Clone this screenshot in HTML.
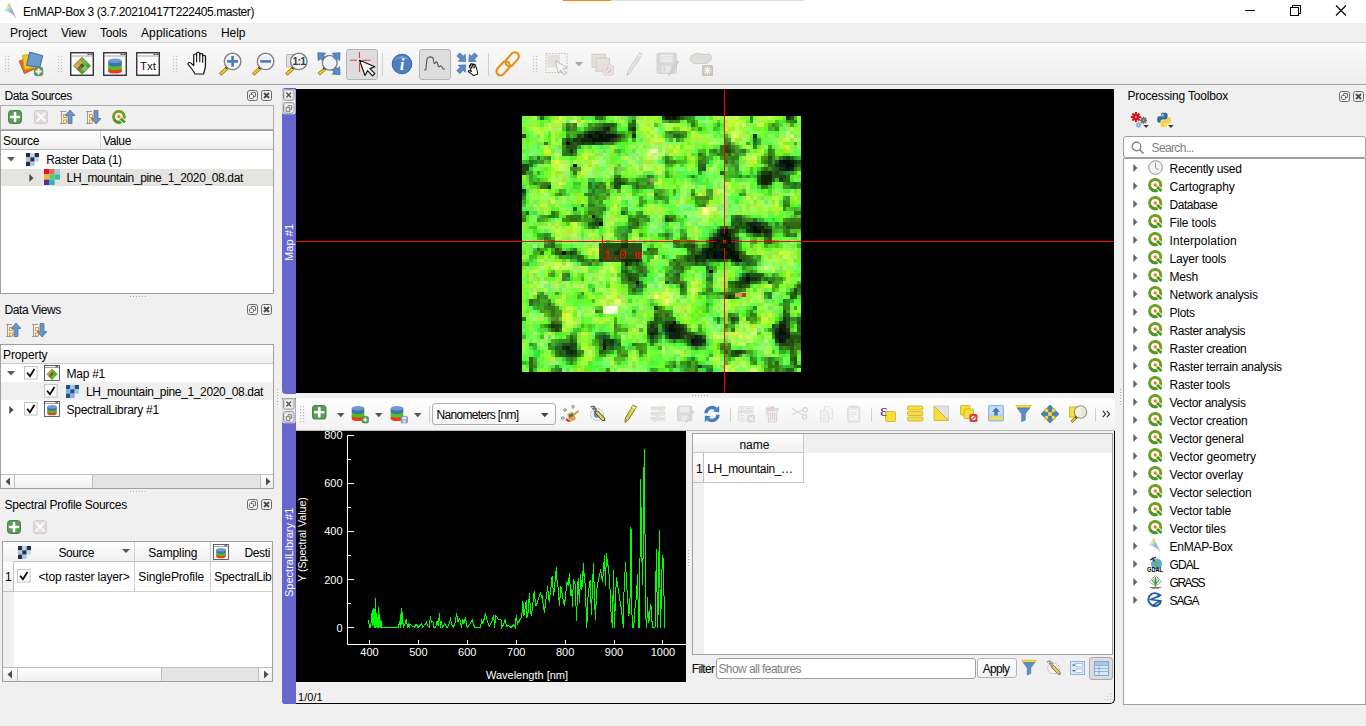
<!DOCTYPE html>
<html><head><meta charset="utf-8"><title>EnMAP-Box 3</title>
<style>
html,body{margin:0;padding:0}
body{width:1366px;height:726px;overflow:hidden;background:#f0f0f0;position:relative;font-family:"Liberation Sans", sans-serif;font-size:12px;color:#000}
div,svg,span.t{position:absolute;box-sizing:border-box}
span.t{white-space:pre}
</style></head><body>
<div style="left:0px;top:0px;width:1366px;height:23px;background:#fff"></div>
<div style="left:563px;top:0px;width:48px;height:1px;background:#f9861a"></div>
<div style="left:611px;top:0px;width:193px;height:1px;background:#dcdcdc"></div>
<span class="t" style="left:23px;top:3.5px;line-height:16px;font-size:12px;color:#000;letter-spacing:-0.412px;">EnMAP-Box 3 (3.7.20210417T222405.master)</span>
<svg style="left:1240px;top:0px;" width="120" height="23" viewBox="0 0 120 23"><g stroke="#000" stroke-width="1" fill="none" shape-rendering="crispEdges"><path d="M5 10.5H15"/><path d="M50.5 7.5h8v8h-8z"/><path d="M52.5 7.5v-2h8v8h-2"/></g><path d="M96 5.5l10 10M106 5.5l-10 10" stroke="#000" stroke-width="1.1" fill="none"/></svg>
<div style="left:0px;top:23px;width:1366px;height:20px;background:#f0f0f0"></div>
<span class="t" style="left:10px;top:24.5px;line-height:16px;font-size:12px;color:#000;letter-spacing:-0.051px;">Project</span>
<span class="t" style="left:61px;top:24.5px;line-height:16px;font-size:12px;color:#000;letter-spacing:-0.199px;">View</span>
<span class="t" style="left:100px;top:24.5px;line-height:16px;font-size:12px;color:#000;letter-spacing:-0.203px;">Tools</span>
<span class="t" style="left:141px;top:24.5px;line-height:16px;font-size:12px;color:#000;letter-spacing:0.107px;">Applications</span>
<span class="t" style="left:221px;top:24.5px;line-height:16px;font-size:12px;color:#000;letter-spacing:-0.047px;">Help</span>
<div style="left:0px;top:42px;width:1366px;height:43px;background:linear-gradient(#fafafa,#eeeeee);border-top:1px solid #d6d6d6;border-bottom:1px solid #a0a0a0"></div>
<svg style="left:5px;top:56px;" width="5" height="20" viewBox="0 0 5 20"><rect x="0" y="0.0" width="1.200" height="1.200" fill="#c4c4c4"/><rect x="3" y="0.0" width="1.200" height="1.200" fill="#c4c4c4"/><rect x="0" y="3.0" width="1.200" height="1.200" fill="#c4c4c4"/><rect x="3" y="3.0" width="1.200" height="1.200" fill="#c4c4c4"/><rect x="0" y="6.0" width="1.200" height="1.200" fill="#c4c4c4"/><rect x="3" y="6.0" width="1.200" height="1.200" fill="#c4c4c4"/><rect x="0" y="9.0" width="1.200" height="1.200" fill="#c4c4c4"/><rect x="3" y="9.0" width="1.200" height="1.200" fill="#c4c4c4"/><rect x="0" y="12.0" width="1.200" height="1.200" fill="#c4c4c4"/><rect x="3" y="12.0" width="1.200" height="1.200" fill="#c4c4c4"/><rect x="0" y="15.0" width="1.200" height="1.200" fill="#c4c4c4"/><rect x="3" y="15.0" width="1.200" height="1.200" fill="#c4c4c4"/></svg>
<svg style="left:58px;top:56px;" width="5" height="20" viewBox="0 0 5 20"><rect x="0" y="0.0" width="1.200" height="1.200" fill="#c4c4c4"/><rect x="3" y="0.0" width="1.200" height="1.200" fill="#c4c4c4"/><rect x="0" y="3.0" width="1.200" height="1.200" fill="#c4c4c4"/><rect x="3" y="3.0" width="1.200" height="1.200" fill="#c4c4c4"/><rect x="0" y="6.0" width="1.200" height="1.200" fill="#c4c4c4"/><rect x="3" y="6.0" width="1.200" height="1.200" fill="#c4c4c4"/><rect x="0" y="9.0" width="1.200" height="1.200" fill="#c4c4c4"/><rect x="3" y="9.0" width="1.200" height="1.200" fill="#c4c4c4"/><rect x="0" y="12.0" width="1.200" height="1.200" fill="#c4c4c4"/><rect x="3" y="12.0" width="1.200" height="1.200" fill="#c4c4c4"/><rect x="0" y="15.0" width="1.200" height="1.200" fill="#c4c4c4"/><rect x="3" y="15.0" width="1.200" height="1.200" fill="#c4c4c4"/></svg>
<svg style="left:173px;top:56px;" width="5" height="20" viewBox="0 0 5 20"><rect x="0" y="0.0" width="1.200" height="1.200" fill="#c4c4c4"/><rect x="3" y="0.0" width="1.200" height="1.200" fill="#c4c4c4"/><rect x="0" y="3.0" width="1.200" height="1.200" fill="#c4c4c4"/><rect x="3" y="3.0" width="1.200" height="1.200" fill="#c4c4c4"/><rect x="0" y="6.0" width="1.200" height="1.200" fill="#c4c4c4"/><rect x="3" y="6.0" width="1.200" height="1.200" fill="#c4c4c4"/><rect x="0" y="9.0" width="1.200" height="1.200" fill="#c4c4c4"/><rect x="3" y="9.0" width="1.200" height="1.200" fill="#c4c4c4"/><rect x="0" y="12.0" width="1.200" height="1.200" fill="#c4c4c4"/><rect x="3" y="12.0" width="1.200" height="1.200" fill="#c4c4c4"/><rect x="0" y="15.0" width="1.200" height="1.200" fill="#c4c4c4"/><rect x="3" y="15.0" width="1.200" height="1.200" fill="#c4c4c4"/></svg>
<svg style="left:533px;top:56px;" width="5" height="20" viewBox="0 0 5 20"><rect x="0" y="0.0" width="1.200" height="1.200" fill="#c4c4c4"/><rect x="3" y="0.0" width="1.200" height="1.200" fill="#c4c4c4"/><rect x="0" y="3.0" width="1.200" height="1.200" fill="#c4c4c4"/><rect x="3" y="3.0" width="1.200" height="1.200" fill="#c4c4c4"/><rect x="0" y="6.0" width="1.200" height="1.200" fill="#c4c4c4"/><rect x="3" y="6.0" width="1.200" height="1.200" fill="#c4c4c4"/><rect x="0" y="9.0" width="1.200" height="1.200" fill="#c4c4c4"/><rect x="3" y="9.0" width="1.200" height="1.200" fill="#c4c4c4"/><rect x="0" y="12.0" width="1.200" height="1.200" fill="#c4c4c4"/><rect x="3" y="12.0" width="1.200" height="1.200" fill="#c4c4c4"/><rect x="0" y="15.0" width="1.200" height="1.200" fill="#c4c4c4"/><rect x="3" y="15.0" width="1.200" height="1.200" fill="#c4c4c4"/></svg>
<svg style="left:18px;top:50px;" width="27" height="27" viewBox="0 0 27 27"><g stroke-width="0.800" stroke-linejoin="round"><path d="M1.100 11L6.400 23.700L16.400 18.900L10 8z" fill="#dc6c2e" stroke="#b4521e"/><path d="M4.400 5.200L10.200 4.800L15.700 17.900L6.400 19.600z" fill="#f2ca1e" stroke="#c79f10"/><path d="M11.600 2L24.800 5.700L21.900 17.200L8.500 15.500z" fill="#6c9aca" stroke="#2f5a8a"/></g><rect x="16.300" y="17.200" width="8.500" height="8.500" rx="2.200" fill="#5b9a58" stroke="#4a8349" stroke-width="0.700"/><path d="M20.550 18.400v6.100M17.500 21.450h6.100" stroke="#fff" stroke-width="2"/></svg>
<svg style="left:70px;top:52px;" width="24" height="24" viewBox="0 0 24 24"><rect x="0.750" y="0.750" width="22.500" height="22.500" fill="#fff" stroke="#222" stroke-width="1.300"/><path d="M1.500 4h21" stroke="#9a9a9a" stroke-width="0.900"/><path d="M17.500 2.300h2M20.300 2.300h2" stroke="#444" stroke-width="1.200"/><g transform="translate(12 13.800) rotate(45)"><rect x="-6.0" y="-6.0" width="4" height="4" fill="#8fa832"/><rect x="-2.0" y="-6.0" width="4" height="4" fill="#57c032"/><rect x="2.0" y="-6.0" width="4" height="4" fill="#4aa52c"/><rect x="-6.0" y="-2.0" width="4" height="4" fill="#e99a2c"/><rect x="-2.0" y="-2.0" width="4" height="4" fill="#4e5a32"/><rect x="2.0" y="-2.0" width="4" height="4" fill="#7ccc5c"/><rect x="-6.0" y="2.0" width="4" height="4" fill="#d9a86c"/><rect x="-2.0" y="2.0" width="4" height="4" fill="#8a6a28"/><rect x="2.0" y="2.0" width="4" height="4" fill="#5aa030"/><rect x="-6" y="-6" width="12" height="12" fill="none" stroke="#3f8f25" stroke-width="0.800"/></g></svg>
<svg style="left:103px;top:52px;" width="24" height="24" viewBox="0 0 24 24"><rect x="0.750" y="0.750" width="22.500" height="22.500" fill="#fff" stroke="#222" stroke-width="1.300"/><path d="M1.500 4h21" stroke="#9a9a9a" stroke-width="0.900"/><path d="M17.500 2.300h2M20.300 2.300h2" stroke="#444" stroke-width="1.200"/><path d="M5.2 15.80v3.50a6.8 2.3 0 0 0 13.6 0v-3.50z" fill="#f03a1c"/><path d="M5.2 12.30v3.50a6.8 2.3 0 0 0 13.6 0v-3.50z" fill="#4fc31c"/><path d="M5.2 8.80v3.50a6.8 2.3 0 0 0 13.6 0v-3.50z" fill="#3f72ae"/><ellipse cx="12" cy="8.80" rx="6.8" ry="2.3" fill="#6d9bd0"/></svg>
<svg style="left:136px;top:52px;" width="24" height="24" viewBox="0 0 24 24"><rect x="0.750" y="0.750" width="22.500" height="22.500" fill="#fff" stroke="#222" stroke-width="1.300"/><path d="M1.500 4h21" stroke="#9a9a9a" stroke-width="0.900"/><path d="M17.500 2.300h2M20.300 2.300h2" stroke="#444" stroke-width="1.200"/><text x="12" y="17.600" text-anchor="middle" font-family="Liberation Sans, sans-serif" font-size="11.500" fill="#111">Txt</text></svg>
<svg style="left:187px;top:51px;" width="21" height="24" viewBox="0 0 21 24"><g transform="scale(1.12 1.02)"><path d="M7.200 22.500C5.800 19.500 3.300 16 1.300 13.500C0.300 12.200 1.800 10.500 3.300 11.700L6 14.300V4.300C6 2.500 8.600 2.500 8.600 4.300V2.600C8.600 0.700 11.400 0.700 11.400 2.600V3.600C11.400 1.900 14 1.900 14 3.600V5.300C14 3.800 16.500 3.800 16.500 5.500V13.500C16.500 17 15.500 19.500 14.800 22.500z" fill="#fff" stroke="#111" stroke-width="1.100" stroke-linejoin="round"/><path d="M8.600 4.300V11M11.400 3.600V11M14 5.300V11.500" stroke="#111" stroke-width="1" fill="none"/></g></svg>
<svg style="left:217px;top:51px;" width="26" height="26" viewBox="0 0 26 26"><path d="M10.5 16.8L3.1 23.4" stroke="#8a6d0c" stroke-width="3.400" stroke-linecap="butt"/><path d="M10.2 17.1L3.5 23.0" stroke="#f4c81e" stroke-width="2.200"/><circle cx="9.7" cy="16.6" r="1.300" fill="#111"/><circle cx="15.6" cy="10.4" r="8.2" fill="#f1f1f1" stroke="#838383" stroke-width="1.500"/><circle cx="15.6" cy="10.4" r="6.799999999999999" fill="none" stroke="#fdfdfd" stroke-width="1"/><path d="M15.600 5v10.800M10.200 10.400h10.800" stroke="#4b7bb9" stroke-width="2.600"/></svg>
<svg style="left:250px;top:51px;" width="26" height="26" viewBox="0 0 26 26"><path d="M10.5 16.8L3.1 23.4" stroke="#8a6d0c" stroke-width="3.400" stroke-linecap="butt"/><path d="M10.2 17.1L3.5 23.0" stroke="#f4c81e" stroke-width="2.200"/><circle cx="9.7" cy="16.6" r="1.300" fill="#111"/><circle cx="15.6" cy="10.4" r="8.2" fill="#f1f1f1" stroke="#838383" stroke-width="1.500"/><circle cx="15.6" cy="10.4" r="6.799999999999999" fill="none" stroke="#fdfdfd" stroke-width="1"/><path d="M10.200 10.400h10.800" stroke="#4b7bb9" stroke-width="2.600"/></svg>
<svg style="left:283px;top:51px;" width="26" height="26" viewBox="0 0 26 26"><rect x="3.600" y="3.600" width="7" height="12.400" fill="#e2e2e2" stroke="#a8a8a8" stroke-width="0.800"/><path d="M10.7 16.8L3.3 23.4" stroke="#8a6d0c" stroke-width="3.400" stroke-linecap="butt"/><path d="M10.4 17.1L3.7 23.0" stroke="#f4c81e" stroke-width="2.200"/><circle cx="9.9" cy="16.6" r="1.300" fill="#111"/><circle cx="15.8" cy="10.4" r="8.2" fill="#f1f1f1" stroke="#838383" stroke-width="1.500"/><circle cx="15.8" cy="10.4" r="6.799999999999999" fill="none" stroke="#fdfdfd" stroke-width="1"/><text x="15.800" y="14.200" text-anchor="middle" font-family="Liberation Sans, sans-serif" font-size="10.500" font-weight="bold" fill="#3c3c3c" letter-spacing="-0.800">1:1</text></svg>
<svg style="left:316px;top:51px;" width="26" height="26" viewBox="0 0 26 26"><path transform="translate(5.8 5.8) rotate(-45) scale(1.25)" d="M0 -4.500L4.300 0.300H1.900V4.500H-1.900V0.300H-4.300z" fill="#5b8cc6" stroke="#3d6da4" stroke-width="0.500"/><path transform="translate(20 5.8) rotate(45) scale(1.25)" d="M0 -4.500L4.300 0.300H1.900V4.500H-1.900V0.300H-4.300z" fill="#5b8cc6" stroke="#3d6da4" stroke-width="0.500"/><path transform="translate(20 19.5) rotate(135) scale(1.25)" d="M0 -4.500L4.300 0.300H1.900V4.500H-1.900V0.300H-4.300z" fill="#5b8cc6" stroke="#3d6da4" stroke-width="0.500"/><path d="M9.3 17.5L2.7 23.3" stroke="#8a6d0c" stroke-width="3.400" stroke-linecap="butt"/><path d="M9.0 17.8L3.0 23.0" stroke="#f4c81e" stroke-width="2.200"/><circle cx="8.5" cy="17.3" r="1.300" fill="#111"/><circle cx="13.8" cy="11.8" r="7.3" fill="#f1f1f1" stroke="#838383" stroke-width="1.500"/><circle cx="13.8" cy="11.8" r="5.9" fill="none" stroke="#fdfdfd" stroke-width="1"/><path transform="translate(4.8 4.8) rotate(-45) scale(0.9)" d="M0 -4.500L4.300 0.300H1.900V4.500H-1.900V0.300H-4.300z" fill="#5b8cc6" stroke="#3d6da4" stroke-width="0.500"/><path transform="translate(21 4.8) rotate(45) scale(0.9)" d="M0 -4.500L4.300 0.300H1.900V4.500H-1.900V0.300H-4.300z" fill="#5b8cc6" stroke="#3d6da4" stroke-width="0.500"/><path transform="translate(21 20.5) rotate(135) scale(0.9)" d="M0 -4.500L4.300 0.300H1.900V4.500H-1.900V0.300H-4.300z" fill="#5b8cc6" stroke="#3d6da4" stroke-width="0.500"/></svg>
<div style="left:346px;top:49px;width:32px;height:31px;background:#dddddd;border:1px solid #b4b4b4;border-radius:3px"></div>
<div style="left:419px;top:49px;width:32px;height:31px;background:#dddddd;border:1px solid #b4b4b4;border-radius:3px"></div>
<svg style="left:348px;top:51px;" width="28" height="27" viewBox="0 0 28 27"><path d="M1.800 9.300H9M14 9.300H22.500M11.500 1V7M11.500 12V21" stroke="#ee3b3b" stroke-width="1.100" fill="none"/><path transform="translate(11.500 9.300) rotate(-20) scale(1.22)" d="M0 0V13.200L3.300 10.200L5.700 15.600L8.100 14.500L5.700 9.300H10z" fill="#fff" stroke="#111" stroke-width="0.950" stroke-linejoin="round"/></svg>
<div style="left:382px;top:53px;width:1px;height:23px;background:#cfcfcf"></div>
<div style="left:488px;top:53px;width:1px;height:23px;background:#cfcfcf"></div>
<svg style="left:391px;top:53px;" width="22" height="22" viewBox="0 0 22 22"><circle cx="11" cy="11" r="9.800" fill="#4b7dbf" stroke="#3567a5" stroke-width="1"/><path d="M3.500 7.500A8.500 8.500 0 0 1 18.500 7.500A12 9 0 0 0 3.500 7.500z" fill="#7ea6d8" opacity="0.700"/><text x="11.200" y="17" text-anchor="middle" font-family="Liberation Serif, serif" font-style="italic" font-weight="bold" font-size="17" fill="#fff">i</text></svg>
<svg style="left:423px;top:53px;" width="24" height="22" viewBox="0 0 24 22"><path d="M1.300 17C2 16.300 2.300 17.500 2.800 16.500C3.300 15.500 3.300 8 4.300 5.500C4.800 4.300 5.500 4.800 6 4C6.500 3.200 7 4.500 7.500 4C8 3.500 8.500 4.500 9 4.300C10 4 10.300 6 10.600 8C10.900 10.500 11.500 11 12.200 10.200C12.900 9.400 13.300 8 14 9.300C14.700 10.600 14.700 12.500 15.700 13.500C16.700 14.300 17 12.500 18 13C19 13.500 19.500 15 20 15.800C20.500 16.500 21 15.500 21.800 16.300" fill="none" stroke="#555" stroke-width="1.150"/></svg>
<svg style="left:456px;top:52px;" width="25" height="24" viewBox="0 0 25 24"><path transform="translate(6 6) rotate(135) scale(1.15)" d="M0 -4.500L4.300 0.300H1.900V4.500H-1.900V0.300H-4.300z" fill="#5b8cc6" stroke="#3d6da4" stroke-width="0.500"/><path transform="translate(16.5 6) rotate(-135) scale(1.15)" d="M0 -4.500L4.300 0.300H1.900V4.500H-1.900V0.300H-4.300z" fill="#5b8cc6" stroke="#3d6da4" stroke-width="0.500"/><path transform="translate(6 16.5) rotate(45) scale(1.15)" d="M0 -4.500L4.300 0.300H1.900V4.500H-1.900V0.300H-4.300z" fill="#5b8cc6" stroke="#3d6da4" stroke-width="0.500"/><g transform="translate(11.500 11) scale(0.560) rotate(-20 9 12)"><path d="M7.200 22.500C5.800 19.500 3.300 16 1.300 13.500C0.300 12.200 1.800 10.500 3.300 11.700L6 14.300V4.300C6 2.500 8.600 2.500 8.600 4.300V2.600C8.600 0.700 11.400 0.700 11.400 2.600V3.600C11.400 1.900 14 1.900 14 3.600V5.300C14 3.800 16.500 3.800 16.500 5.500V13.500C16.500 17 15.500 19.500 14.800 22.500z" fill="#fff" stroke="#111" stroke-width="1.800" stroke-linejoin="round"/><path d="M8.600 4.300V10M11.400 3.600V10M14 5.300V10.500" stroke="#111" stroke-width="1.600" fill="none"/></g></svg>
<svg style="left:495px;top:51px;" width="26" height="26" viewBox="0 0 26 26"><g fill="none" stroke="#e6920e" stroke-width="2.100"><rect x="-8" y="-4.100" width="16" height="8.200" rx="4.100" transform="translate(8.200 17.400) rotate(-48)"/><rect x="-8" y="-4.100" width="16" height="8.200" rx="4.100" transform="translate(17.200 8.300) rotate(-48)"/></g></svg>
<svg style="left:545px;top:52px;" width="24" height="24" viewBox="0 0 24 24"><rect x="1" y="1.500" width="21" height="19" fill="#f3f3f1" stroke="#b9b9b4" stroke-width="1" stroke-dasharray="1.500 1.500"/><rect x="2.500" y="3" width="12.500" height="12.500" fill="#e4e2da"/><path transform="translate(10.500 8.800) rotate(-12)" d="M0 0V13.200L3.300 10.200L5.700 15.600L8.100 14.500L5.700 9.300H10z" fill="#f6f6f6" stroke="#c4c4c4" stroke-width="1" stroke-linejoin="round"/></svg>
<svg style="left:575px;top:62px;" width="8" height="5" viewBox="0 0 8 5"><path d="M0 0h8l-4 4.500z" fill="#a6a6a6"/></svg>
<svg style="left:591px;top:53px;" width="24" height="24" viewBox="0 0 24 24"><g fill="#e4e2da" stroke="#c9c7be" stroke-width="0.800"><rect x="1" y="1.200" width="13.500" height="13"/><rect x="5" y="5" width="13.500" height="13.300"/></g><rect x="12" y="11.800" width="10.500" height="10.500" rx="2.500" fill="#ebe2e2" stroke="#dccfcf" stroke-width="0.700"/><circle cx="17.300" cy="17" r="3" fill="#d9c6c6"/><path d="M15.200 19L19.300 15" stroke="#f4eeee" stroke-width="1.200"/></svg>
<svg style="left:625px;top:52px;" width="20" height="25" viewBox="0 0 20 25"><path d="M14.500 0.800L17.300 2.300L5 21L2 23.500L2.600 19.500z" fill="#e5e5e0" stroke="#cbcbc6" stroke-width="0.900" stroke-linejoin="round"/><path d="M2 23.500L2.300 21.300L3.800 22.200z" fill="#b8b8b4"/><path d="M13.500 2.300L16.300 3.800" stroke="#f4f4f0" stroke-width="1.400"/></svg>
<svg style="left:656px;top:52px;" width="24" height="24" viewBox="0 0 24 24"><rect x="1" y="1" width="19.500" height="20.500" rx="2" fill="#d9d9d9" stroke="#cdcdcd" stroke-width="0.800"/><rect x="4.500" y="2.500" width="12" height="7.500" fill="#eeeeee"/><path d="M5.500 4.500h10M5.500 6.300h10M5.500 8.100h10" stroke="#dcdcdc" stroke-width="0.700"/><rect x="6" y="14" width="9" height="6.500" fill="#e9e9e9"/><rect x="7.500" y="15" width="2.200" height="4.500" fill="#d4d4d4"/><g transform="translate(11.500 8.500) scale(0.640)"><path d="M14.500 0.800L17.300 2.300L5 21L2 23.500L2.600 19.500z" fill="#dcd8d2" stroke="#c4c0ba" stroke-width="1.200"/></g></svg>
<svg style="left:689px;top:52px;" width="26" height="25" viewBox="0 0 26 25"><path d="M3 3.500C6.500 0.500 10 1.200 13.500 2.300C17 3.300 19 1 21.500 2.800C23.500 5 22 8.500 19.500 10.500C16.500 12 13 11.200 10.500 11.500C6.500 12.500 3 11.500 1.500 8.500C0.600 6.500 1.500 4.500 3 3.500z" fill="#dcdeda" stroke="#c5c7c3" stroke-width="0.900"/><rect x="13" y="13" width="11" height="11" rx="1.500" fill="#c9c5b8"/><path d="M18.500 14.500v8M14.500 18.500h8M15.700 15.700l5.600 5.600M21.300 15.700l-5.600 5.600" stroke="#fbfaf6" stroke-width="1.200"/><circle cx="18.500" cy="18.500" r="1.500" fill="#fbfaf6"/></svg>
<span class="t" style="left:4.5px;top:88.3px;line-height:16px;font-size:12px;color:#000;letter-spacing:-0.459px;">Data Sources</span>
<svg style="left:247px;top:90px;" width="26" height="12" viewBox="0 0 26 12"><g fill="none" stroke="#6a6a6a" stroke-width="1"><rect x="0.5" y="0.5" width="10" height="10" rx="2"/><rect x="14.5" y="0.5" width="10" height="10" rx="2"/><rect x="2.5" y="4.5" width="4" height="4" rx="1"/><path d="M4.5 4.5v-1.5a0.5 0.5 0 0 1 .5-.5h3a.5.5 0 0 1 .5.5v3a.5.5 0 0 1-.5.5h-1.500"/></g><path d="M17 3l5 5M22 3l-5 5" stroke="#4a4a4a" stroke-width="1.8" fill="none"/></svg>
<div style="left:0px;top:105px;width:274px;height:25px;border:1px solid #adadad;background:#f0f0f0"></div>
<div style="left:0px;top:130px;width:274px;height:164px;border:1px solid #a0a0a0;background:#fff"></div>
<div style="left:1px;top:131px;width:272px;height:19px;background:linear-gradient(#ffffff,#f0f0f0);border-bottom:1px solid #b8b8b8"></div>
<div style="left:100px;top:131px;width:2px;height:18px;background:linear-gradient(90deg,#d0d0d0 50%,#fff 50%)"></div>
<span class="t" style="left:3px;top:133px;line-height:16px;font-size:12px;color:#000;letter-spacing:-0.339px;">Source</span>
<span class="t" style="left:103px;top:133px;line-height:16px;font-size:12px;color:#000;letter-spacing:-0.362px;">Value</span>
<span class="t" style="left:46.3px;top:151.8px;line-height:16px;font-size:12px;color:#000;letter-spacing:-0.455px;">Raster Data (1)</span>
<div style="left:1px;top:169px;width:272px;height:17px;background:#e6e4e1"></div>
<span class="t" style="left:66.6px;top:169.9px;line-height:16px;font-size:12px;color:#000;letter-spacing:-0.373px;">LH_mountain_pine_1_2020_08.dat</span>
<svg style="left:6.8px;top:157px;" width="8" height="5" viewBox="0 0 8 5"><path d="M0 0h8l-4 4.500z" fill="#5a5a5a"/></svg>
<svg style="left:26px;top:153px;" width="13" height="13" viewBox="0 0 13 13"><rect x="0.00" y="0.00" width="4.33" height="4.33" fill="#1f3347"/><rect x="4.33" y="0.00" width="4.33" height="4.33" fill="#c3d7ec"/><rect x="8.67" y="0.00" width="4.33" height="4.33" fill="#1f3347"/><rect x="0.00" y="4.33" width="4.33" height="4.33" fill="#a9c7e6"/><rect x="4.33" y="4.33" width="4.33" height="4.33" fill="#1f3347"/><rect x="8.67" y="4.33" width="4.33" height="4.33" fill="#c3d7ec"/><rect x="0.00" y="8.67" width="4.33" height="4.33" fill="#1f3347"/><rect x="4.33" y="8.67" width="4.33" height="4.33" fill="#a9c7e6"/></svg>
<svg style="left:29px;top:173.5px;" width="5" height="8" viewBox="0 0 5 8"><path d="M0.300 0v8l4.200-4z" fill="#4a4a4a"/></svg>
<svg style="left:44px;top:169px;" width="16" height="16" viewBox="0 0 16 16"><rect x="0.00" y="0.00" width="5.33" height="5.33" fill="#e8112d"/><rect x="5.33" y="0.00" width="5.33" height="5.33" fill="#ee6a4c"/><rect x="10.67" y="0.00" width="5.33" height="5.33" fill="#a9c6de"/><rect x="0.00" y="5.33" width="5.33" height="5.33" fill="#f6b632"/><rect x="5.33" y="5.33" width="5.33" height="5.33" fill="#5cc58e"/><rect x="10.67" y="5.33" width="5.33" height="5.33" fill="#3dbe9e"/><rect x="0.00" y="10.67" width="5.33" height="5.33" fill="#5a2c8d"/><rect x="5.33" y="10.67" width="5.33" height="5.33" fill="#2eb4c3"/></svg>
<svg style="left:8px;top:110px;" width="14" height="14" viewBox="0 0 14 14"><rect x="0.500" y="0.500" width="13" height="13" rx="3" fill="#5b9a58" stroke="#4a8349" stroke-width="1"/><path d="M7 3v8M3 7h8" stroke="#fff" stroke-width="2.600" stroke-linecap="round"/></svg>
<svg style="left:34px;top:110px;" width="14" height="14" viewBox="0 0 14 14"><rect x="0.500" y="0.500" width="13" height="13" rx="2.500" fill="#e0d9d9" stroke="#d4cccc" stroke-width="1"/><path d="M3.500 3.500l7 7M10.500 3.500l-7 7" stroke="#fbf9f9" stroke-width="2.400" stroke-linecap="round"/></svg>
<svg style="left:60px;top:110px;" width="15" height="14" viewBox="0 0 15 14"><g stroke="#9a9a9a" stroke-width="1" fill="none"><path d="M0 1.500h6M0 13.500h6M1.500 1.500v12"/></g><rect x="3.500" y="4.500" width="3" height="3" fill="#fff" stroke="#f39a1d" stroke-width="1"/><rect x="3.500" y="10" width="3" height="3" fill="#fff" stroke="#f39a1d" stroke-width="1"/><path d="M10 0L15 5.500H12v8H8v-8H5.200z" fill="#6a96c8" stroke="#3d6a9e" stroke-width="0.700"/></svg>
<svg style="left:86px;top:110px;" width="15" height="14" viewBox="0 0 15 14"><g stroke="#9a9a9a" stroke-width="1" fill="none"><path d="M0 1.500h6M0 13.500h6M1.500 1.500v12"/></g><rect x="3.500" y="4.500" width="3" height="3" fill="#fff" stroke="#f39a1d" stroke-width="1"/><rect x="3.500" y="10" width="3" height="3" fill="#fff" stroke="#f39a1d" stroke-width="1"/><path d="M10 14L15 8.500H12v-8H8v8H5.200z" fill="#6a96c8" stroke="#3d6a9e" stroke-width="0.700"/></svg>
<svg style="left:112px;top:110px;" width="14" height="14" viewBox="0 0 14 14"><circle cx="6.900" cy="6.800" r="5.400" fill="none" stroke="#6fa024" stroke-width="2.900"/><path d="M2.200 9.500A5.400 5.400 0 0 0 9.500 11.550" fill="none" stroke="#4f9628" stroke-width="2.900"/><path d="M9.300 9L13.900 13.300" stroke="#fff" stroke-width="4.200"/><path d="M8.600 8.400L13 12.600" stroke="#4d962a" stroke-width="2.700"/><path d="M6.800 6.500L9 8.700" stroke="#e8dc5a" stroke-width="1.900"/><circle cx="6.900" cy="6.600" r="1.500" fill="#ee7410"/></svg>
<div style="left:130px;top:296px;width:18px;height:2px;background:repeating-linear-gradient(90deg,#a8a8a8 0 1px,transparent 1px 3px) 0 0/100% 1px no-repeat,repeating-linear-gradient(90deg,transparent 0 1px,#fff 1px 2px,transparent 2px 3px) 0 1px/100% 1px no-repeat"></div>
<span class="t" style="left:4.5px;top:302.2px;line-height:16px;font-size:12px;color:#000;letter-spacing:-0.408px;">Data Views</span>
<svg style="left:247px;top:304px;" width="26" height="12" viewBox="0 0 26 12"><g fill="none" stroke="#6a6a6a" stroke-width="1"><rect x="0.5" y="0.5" width="10" height="10" rx="2"/><rect x="14.5" y="0.5" width="10" height="10" rx="2"/><rect x="2.5" y="4.5" width="4" height="4" rx="1"/><path d="M4.5 4.5v-1.5a0.5 0.5 0 0 1 .5-.5h3a.5.5 0 0 1 .5.5v3a.5.5 0 0 1-.5.5h-1.500"/></g><path d="M17 3l5 5M22 3l-5 5" stroke="#4a4a4a" stroke-width="1.8" fill="none"/></svg>
<svg style="left:5.5px;top:323px;" width="15" height="14" viewBox="0 0 15 14"><g stroke="#9a9a9a" stroke-width="1" fill="none"><path d="M0 1.500h6M0 13.500h6M1.500 1.500v12"/></g><rect x="3.500" y="4.500" width="3" height="3" fill="#fff" stroke="#f39a1d" stroke-width="1"/><rect x="3.500" y="10" width="3" height="3" fill="#fff" stroke="#f39a1d" stroke-width="1"/><path d="M10 0L15 5.500H12v8H8v-8H5.200z" fill="#6a96c8" stroke="#3d6a9e" stroke-width="0.700"/></svg>
<svg style="left:31.5px;top:323px;" width="15" height="14" viewBox="0 0 15 14"><g stroke="#9a9a9a" stroke-width="1" fill="none"><path d="M0 1.500h6M0 13.500h6M1.500 1.500v12"/></g><rect x="3.500" y="4.500" width="3" height="3" fill="#fff" stroke="#f39a1d" stroke-width="1"/><rect x="3.500" y="10" width="3" height="3" fill="#fff" stroke="#f39a1d" stroke-width="1"/><path d="M10 14L15 8.500H12v-8H8v8H5.200z" fill="#6a96c8" stroke="#3d6a9e" stroke-width="0.700"/></svg>
<div style="left:0px;top:344px;width:274px;height:145px;border:1px solid #a0a0a0;background:#fff"></div>
<div style="left:1px;top:345px;width:272px;height:19px;background:linear-gradient(#ffffff,#f0f0f0);border-bottom:1px solid #c8c8c8"></div>
<span class="t" style="left:3px;top:347.3px;line-height:16px;font-size:12px;color:#000;letter-spacing:-0.107px;">Property</span>
<div style="left:1px;top:382px;width:272px;height:18px;background:#f0f0f0"></div>
<span class="t" style="left:66.6px;top:365.5px;line-height:16px;font-size:12px;color:#000;letter-spacing:-0.272px;">Map #1</span>
<span class="t" style="left:86px;top:383.9px;line-height:16px;font-size:12px;color:#000;letter-spacing:-0.350px;">LH_mountain_pine_1_2020_08.dat</span>
<span class="t" style="left:66.6px;top:401.7px;line-height:16px;font-size:12px;color:#000;letter-spacing:-0.288px;">SpectralLibrary #1</span>
<svg style="left:6.8px;top:371px;" width="8" height="5" viewBox="0 0 8 5"><path d="M0 0h8l-4 4.500z" fill="#5a5a5a"/></svg>
<svg style="left:24px;top:366.2px;" width="13.6" height="13.6" viewBox="0 0 13 13"><rect x="0.500" y="0.500" width="12" height="12" fill="#fff" stroke="#c4c4c4"/><path d="M3 6.500l2.700 3.300L10 2.800" fill="none" stroke="#000" stroke-width="1.700"/></svg>
<svg style="left:44px;top:365px;" width="16" height="16" viewBox="0 0 16 16"><rect x="0.500" y="0.500" width="15" height="15" fill="#fff" stroke="#3a3a3a" stroke-width="0.8"/><path d="M1 2.500h14" stroke="#888" stroke-width="0.800"/><rect x="11.500" y="1" width="2.500" height="1.200" fill="#666"/><g transform="translate(8 9.200) rotate(45)"><rect x="-3.900" y="-3.900" width="7.800" height="7.800" fill="#5fb132"/><rect x="-3.900" y="-3.900" width="2.600" height="2.600" fill="#8aa82e"/><rect x="-1.300" y="-3.900" width="2.600" height="2.600" fill="#4cae2a"/><rect x="-3.900" y="-1.300" width="2.600" height="2.600" fill="#e8912a"/><rect x="-1.300" y="-1.300" width="2.600" height="2.600" fill="#4f5a30"/><rect x="1.300" y="-1.300" width="2.600" height="2.600" fill="#6cc23c"/><rect x="-3.900" y="1.300" width="2.600" height="2.600" fill="#c9a25a"/><rect x="-1.300" y="1.300" width="2.600" height="2.600" fill="#8b6b2a"/><rect x="1.300" y="1.300" width="2.600" height="2.600" fill="#5aa030"/><rect x="1.300" y="-3.900" width="2.600" height="2.600" fill="#52b82e"/></g></svg>
<svg style="left:44.3px;top:384.2px;" width="13.6" height="13.6" viewBox="0 0 13 13"><rect x="0.500" y="0.500" width="12" height="12" fill="#fff" stroke="#c4c4c4"/><path d="M3 6.500l2.700 3.300L10 2.800" fill="none" stroke="#000" stroke-width="1.700"/></svg>
<svg style="left:66px;top:385px;" width="13" height="13" viewBox="0 0 13 13"><rect x="0.00" y="0.00" width="4.33" height="4.33" fill="#1c4f82"/><rect x="4.33" y="0.00" width="4.33" height="4.33" fill="#a3c8ee"/><rect x="8.67" y="0.00" width="4.33" height="4.33" fill="#1c4f82"/><rect x="0.00" y="4.33" width="4.33" height="4.33" fill="#7fb2e5"/><rect x="4.33" y="4.33" width="4.33" height="4.33" fill="#1c4f82"/><rect x="8.67" y="4.33" width="4.33" height="4.33" fill="#a3c8ee"/><rect x="0.00" y="8.67" width="4.33" height="4.33" fill="#1c4f82"/><rect x="4.33" y="8.67" width="4.33" height="4.33" fill="#7fb2e5"/></svg>
<svg style="left:8.6px;top:405.5px;" width="5" height="8" viewBox="0 0 5 8"><path d="M0.300 0v8l4.200-4z" fill="#4a4a4a"/></svg>
<svg style="left:24px;top:402.2px;" width="13.6" height="13.6" viewBox="0 0 13 13"><rect x="0.500" y="0.500" width="12" height="12" fill="#fff" stroke="#c4c4c4"/><path d="M3 6.500l2.700 3.300L10 2.800" fill="none" stroke="#000" stroke-width="1.700"/></svg>
<svg style="left:44px;top:401px;" width="16" height="16" viewBox="0 0 16 16"><rect x="0.500" y="0.500" width="15" height="15" fill="#fff" stroke="#3a3a3a" stroke-width="0.8"/><path d="M1 2.500h14" stroke="#888" stroke-width="0.800"/><rect x="11.500" y="1" width="2.500" height="1.200" fill="#666"/><path d="M3.2 10.20v2.20a4.8 1.8 0 0 0 9.6 0v-2.20z" fill="#f03a1c"/><path d="M3.2 8.00v2.20a4.8 1.8 0 0 0 9.6 0v-2.20z" fill="#4fc31c"/><path d="M3.2 5.80v2.20a4.8 1.8 0 0 0 9.6 0v-2.20z" fill="#3f72ae"/><ellipse cx="8" cy="5.80" rx="4.8" ry="1.8" fill="#6d9bd0"/></svg>
<div style="left:1px;top:474px;width:272px;height:14px;background:#e4e4e4;border-top:1px solid #bdbdbd"></div>
<div style="left:14px;top:475px;width:79px;height:13px;background:linear-gradient(#ffffff,#f0f0f0);border-left:1px solid #bdbdbd;border-right:1px solid #bdbdbd"></div>
<div style="left:1px;top:475px;width:13px;height:13px;background:linear-gradient(#fdfdfd,#efefef)"></div>
<div style="left:260px;top:475px;width:13px;height:13px;background:linear-gradient(#fdfdfd,#efefef);border-left:1px solid #bdbdbd"></div>
<svg style="left:5px;top:477px;" width="6" height="9" viewBox="0 0 6 9"><path d="M5 0.5v8L0.5 4.500z" fill="#4d4d4d"/></svg>
<svg style="left:265px;top:477px;" width="6" height="9" viewBox="0 0 6 9"><path d="M1 0.5v8L5.5 4.500z" fill="#4d4d4d"/></svg>
<div style="left:130px;top:491px;width:18px;height:2px;background:repeating-linear-gradient(90deg,#a8a8a8 0 1px,transparent 1px 3px) 0 0/100% 1px no-repeat,repeating-linear-gradient(90deg,transparent 0 1px,#fff 1px 2px,transparent 2px 3px) 0 1px/100% 1px no-repeat"></div>
<div style="left:692px;top:395px;width:18px;height:2px;background:repeating-linear-gradient(90deg,#a8a8a8 0 1px,transparent 1px 3px) 0 0/100% 1px no-repeat,repeating-linear-gradient(90deg,transparent 0 1px,#fff 1px 2px,transparent 2px 3px) 0 1px/100% 1px no-repeat"></div>
<span class="t" style="left:4.5px;top:497px;line-height:16px;font-size:12px;color:#000;letter-spacing:-0.260px;">Spectral Profile Sources</span>
<svg style="left:247px;top:499px;" width="26" height="12" viewBox="0 0 26 12"><g fill="none" stroke="#6a6a6a" stroke-width="1"><rect x="0.5" y="0.5" width="10" height="10" rx="2"/><rect x="14.5" y="0.5" width="10" height="10" rx="2"/><rect x="2.5" y="4.5" width="4" height="4" rx="1"/><path d="M4.5 4.5v-1.5a0.5 0.5 0 0 1 .5-.5h3a.5.5 0 0 1 .5.5v3a.5.5 0 0 1-.5.5h-1.500"/></g><path d="M17 3l5 5M22 3l-5 5" stroke="#4a4a4a" stroke-width="1.8" fill="none"/></svg>
<svg style="left:7px;top:520px;" width="14" height="14" viewBox="0 0 14 14"><rect x="0.500" y="0.500" width="13" height="13" rx="3" fill="#5b9a58" stroke="#4a8349" stroke-width="1"/><path d="M7 3v8M3 7h8" stroke="#fff" stroke-width="2.600" stroke-linecap="round"/></svg>
<svg style="left:33px;top:520px;" width="14" height="14" viewBox="0 0 14 14"><rect x="0.500" y="0.500" width="13" height="13" rx="2.500" fill="#e0d9d9" stroke="#d4cccc" stroke-width="1"/><path d="M3.500 3.500l7 7M10.500 3.500l-7 7" stroke="#fbf9f9" stroke-width="2.400" stroke-linecap="round"/></svg>
<div style="left:2px;top:541px;width:271px;height:141px;border:1px solid #a0a0a0;background:#fff"></div>
<div style="left:3px;top:542px;width:269px;height:20px;background:linear-gradient(#ffffff,#f0f0f0);border-bottom:1px solid #c0c0c0"></div>
<div style="left:3px;top:561px;width:11px;height:106px;background:#f0f0f0"></div>
<div style="left:3px;top:562px;width:11px;height:30px;border-right:1px solid #c0c0c0;border-bottom:1px solid #c0c0c0;background:linear-gradient(#fdfdfd,#f0f0f0)"></div>
<div style="left:14px;top:591px;width:258px;height:1px;background:#d0d0d0"></div>
<div style="left:134px;top:542px;width:1px;height:50px;background:#d0d0d0"></div>
<div style="left:210px;top:542px;width:1px;height:50px;background:#d0d0d0"></div>
<svg style="left:18px;top:546px;" width="13" height="13" viewBox="0 0 13 13"><rect x="0.00" y="0.00" width="4.33" height="4.33" fill="#1f3347"/><rect x="4.33" y="0.00" width="4.33" height="4.33" fill="#c3d7ec"/><rect x="8.67" y="0.00" width="4.33" height="4.33" fill="#1f3347"/><rect x="0.00" y="4.33" width="4.33" height="4.33" fill="#a9c7e6"/><rect x="4.33" y="4.33" width="4.33" height="4.33" fill="#1f3347"/><rect x="8.67" y="4.33" width="4.33" height="4.33" fill="#c3d7ec"/><rect x="0.00" y="8.67" width="4.33" height="4.33" fill="#1f3347"/><rect x="4.33" y="8.67" width="4.33" height="4.33" fill="#a9c7e6"/></svg>
<span class="t" style="left:58.4px;top:544.5px;line-height:16px;font-size:12px;color:#000;letter-spacing:-0.422px;">Source</span>
<svg style="left:122px;top:549px;" width="8" height="4" viewBox="0 0 8 4"><path d="M0 0h8l-4 4z" fill="#555"/></svg>
<span class="t" style="left:148.2px;top:544.5px;line-height:16px;font-size:12px;color:#000;letter-spacing:-0.104px;">Sampling</span>
<svg style="left:213px;top:544px;" width="16" height="16" viewBox="0 0 16 16"><rect x="0.500" y="0.500" width="15" height="15" fill="#fff" stroke="#3a3a3a" stroke-width="0.8"/><path d="M1 2.500h14" stroke="#888" stroke-width="0.800"/><rect x="11.500" y="1" width="2.500" height="1.200" fill="#666"/><path d="M3.2 10.20v2.20a4.8 1.8 0 0 0 9.6 0v-2.20z" fill="#f03a1c"/><path d="M3.2 8.00v2.20a4.8 1.8 0 0 0 9.6 0v-2.20z" fill="#4fc31c"/><path d="M3.2 5.80v2.20a4.8 1.8 0 0 0 9.6 0v-2.20z" fill="#3f72ae"/><ellipse cx="8" cy="5.80" rx="4.8" ry="1.8" fill="#6d9bd0"/></svg>
<span class="t" style="left:244.5px;top:544.5px;line-height:16px;font-size:12px;color:#000;letter-spacing:-0.369px;">Desti</span>
<span class="t" style="left:5px;top:569px;line-height:16px;font-size:12px;color:#000;letter-spacing:-1.500px;">1</span>
<svg style="left:17.3px;top:569.2px;" width="13.6" height="13.6" viewBox="0 0 13 13"><rect x="0.500" y="0.500" width="12" height="12" fill="#fff" stroke="#c4c4c4"/><path d="M3 6.500l2.700 3.300L10 2.800" fill="none" stroke="#000" stroke-width="1.700"/></svg>
<span class="t" style="left:38.5px;top:569px;line-height:16px;font-size:12px;color:#000;letter-spacing:-0.170px;">&lt;top raster layer&gt;</span>
<span class="t" style="left:138.3px;top:569px;line-height:16px;font-size:12px;color:#000;letter-spacing:-0.129px;">SingleProfile</span>
<div style="left:211px;top:562px;width:61px;height:28px;overflow:hidden"><span class="t" style="left:3.200px;top:7px;line-height:16px;font-size:12px;letter-spacing:-0.250px">SpectralLibrary #1</span></div>
<div style="left:3px;top:667px;width:269px;height:14px;background:#e4e4e4;border-top:1px solid #bdbdbd"></div>
<div style="left:17px;top:668px;width:145px;height:13px;background:linear-gradient(#ffffff,#f0f0f0);border-left:1px solid #bdbdbd;border-right:1px solid #bdbdbd"></div>
<div style="left:3px;top:668px;width:14px;height:13px;background:linear-gradient(#fdfdfd,#efefef)"></div>
<div style="left:258px;top:668px;width:14px;height:13px;background:linear-gradient(#fdfdfd,#efefef);border-left:1px solid #bdbdbd"></div>
<svg style="left:7px;top:670px;" width="6" height="9" viewBox="0 0 6 9"><path d="M5 0.5v8L0.5 4.500z" fill="#4d4d4d"/></svg>
<svg style="left:263px;top:670px;" width="6" height="9" viewBox="0 0 6 9"><path d="M1 0.5v8L5.5 4.500z" fill="#4d4d4d"/></svg>
<div style="left:282px;top:88px;width:14px;height:306px;background:#6666cc;border-radius:3px 0 0 4px"></div>
<svg style="left:282px;top:88.5px;" width="14" height="26" viewBox="0 0 14 26"><rect x="0.200" y="0" width="13.300" height="25.300" rx="2.500" fill="#f0f0f0"/><g fill="#f6f6f6" stroke="#8c8c8c" stroke-width="1"><rect x="1.500" y="0.700" width="10.500" height="10.500" rx="2"/><rect x="1.500" y="13.700" width="10.500" height="10.500" rx="2"/></g><g fill="none" stroke="#cfcfcf" stroke-width="0.700"><rect x="2.500" y="1.700" width="8.500" height="8.500" rx="1.200"/><rect x="2.500" y="14.700" width="8.500" height="8.500" rx="1.200"/></g><path d="M4.300 3.500l4.800 5M9.100 3.500l-4.800 5" stroke="#555" stroke-width="1.400" fill="none"/><g fill="none" stroke="#777" stroke-width="1"><rect x="4.200" y="18.700" width="3.600" height="3.600"/><path d="M6 18.500v-1.800h3.600v3.600h-1.700"/></g></svg>
<div style="left:296px;top:89px;width:818px;height:304px;background:#000"></div>
<span class="t" style="left:0px;top:-8px;line-height:16px;font-size:11px;color:#fff;left:282px;top:261px;width:14px;height:40px;line-height:14px;letter-spacing:0.1px;transform:rotate(-90deg);transform-origin:0 0;">Map #1</span>
<svg style="left:522px;top:116px;" width="279" height="256" viewBox="0 0 279 256"><rect width="279" height="256" fill="#6e3"/><g shape-rendering="crispEdges"><path fill="#6f4" d="M0 0h4v4h-4zM0 4h4v3h-4zM22 4h4v3h-4zM162 4h3v3h-3zM15 7h3v4h-3zM275 7h4v4h-4zM110 26h4v3h-4zM253 33h4v4h-4zM275 37h4v3h-4zM29 40h4v4h-4zM198 44h4v4h-4zM11 51h4v4h-4zM77 51h4v4h-4zM162 51h3v4h-3zM173 55h3v4h-3zM136 59h4v3h-4zM191 59h4v3h-4zM198 59h4v3h-4zM103 69h3v4h-3zM253 69h4v4h-4zM125 73h3v4h-3zM209 77h4v3h-4zM48 84h3v4h-3zM147 88h4v3h-4zM147 91h4v4h-4zM154 91h4v4h-4zM257 95h4v4h-4zM7 99h4v3h-4zM81 99h3v3h-3zM253 99h4v3h-4zM195 102h3v4h-3zM151 106h3v4h-3zM7 113h4v4h-4zM18 113h4v4h-4zM0 121h4v3h-4zM4 121h3v3h-3zM11 121h4v3h-4zM77 121h4v3h-4zM92 121h3v3h-3zM253 121h4v3h-4zM257 121h4v3h-4zM147 124h4v4h-4zM220 124h4v4h-4zM4 128h3v4h-3zM51 128h4v4h-4zM103 135h3v4h-3zM143 135h4v4h-4zM162 135h3v4h-3zM117 139h4v4h-4zM275 146h4v4h-4zM235 154h4v3h-4zM165 157h4v4h-4zM0 161h4v4h-4zM272 165h3v3h-3zM26 172h3v4h-3zM250 176h3v3h-3zM106 179h4v4h-4zM117 179h4v4h-4zM59 187h3v3h-3zM220 190h4v4h-4zM217 194h3v3h-3zM117 197h4v4h-4zM191 197h4v4h-4zM213 208h4v4h-4zM84 212h4v4h-4zM4 216h3v3h-3zM7 216h4v3h-4zM140 227h3v3h-3zM143 227h4v3h-4zM125 230h3v4h-3zM132 234h4v4h-4zM239 234h3v4h-3zM0 238h4v3h-4zM4 238h3v3h-3zM92 238h3v3h-3zM235 238h4v3h-4zM176 241h4v4h-4zM180 241h4v4h-4zM264 241h4v4h-4zM275 241h4v4h-4zM117 245h4v4h-4zM187 245h4v4h-4zM95 249h4v3h-4zM99 249h4v3h-4z"/><path fill="#9e4" d="M4 0h3v4h-3zM231 7h4v4h-4zM165 11h4v4h-4zM239 15h3v3h-3zM121 22h4v4h-4zM268 22h4v4h-4zM0 26h4v3h-4zM180 26h4v3h-4zM268 29h4v4h-4zM88 33h4v4h-4zM165 33h4v4h-4zM73 48h4v3h-4zM106 48h4v3h-4zM37 55h3v4h-3zM158 66h4v3h-4zM180 77h4v3h-4zM268 80h4v4h-4zM154 84h4v4h-4zM162 84h3v4h-3zM224 91h4v4h-4zM128 95h4v4h-4zM213 95h4v4h-4zM195 99h3v3h-3zM29 106h4v4h-4zM66 113h4v4h-4zM62 117h4v4h-4zM73 121h4v3h-4zM117 128h4v4h-4zM246 135h4v4h-4zM253 135h4v4h-4zM81 139h3v4h-3zM18 146h4v4h-4zM40 146h4v4h-4zM143 146h4v4h-4zM48 154h3v3h-3zM7 172h4v4h-4zM125 176h3v3h-3zM95 179h4v4h-4zM103 183h3v4h-3zM224 183h4v4h-4zM217 187h3v3h-3zM195 190h3v4h-3zM62 194h4v3h-4zM235 194h4v3h-4zM165 197h4v4h-4zM51 201h4v4h-4zM114 201h3v4h-3zM173 208h3v4h-3zM165 234h4v4h-4zM213 245h4v4h-4z"/><path fill="#8f3" d="M7 0h4v4h-4zM198 0h4v4h-4zM275 0h4v4h-4zM11 4h4v3h-4zM132 4h4v3h-4zM0 7h4v4h-4zM4 7h3v4h-3zM59 7h3v4h-3zM228 7h3v4h-3zM33 15h4v3h-4zM184 22h3v4h-3zM7 26h4v3h-4zM158 26h4v3h-4zM169 26h4v3h-4zM29 29h4v4h-4zM88 29h4v4h-4zM66 33h4v4h-4zM162 33h3v4h-3zM22 48h4v3h-4zM26 48h3v3h-3zM154 48h4v3h-4zM165 48h4v3h-4zM151 51h3v4h-3zM26 55h3v4h-3zM110 55h4v4h-4zM59 59h3v3h-3zM154 66h4v3h-4zM209 66h4v3h-4zM147 69h4v4h-4zM151 69h3v4h-3zM173 73h3v4h-3zM15 77h3v3h-3zM37 80h3v4h-3zM220 80h4v4h-4zM88 84h4v4h-4zM114 84h3v4h-3zM95 91h4v4h-4zM140 91h3v4h-3zM235 91h4v4h-4zM246 91h4v4h-4zM235 95h4v4h-4zM95 102h4v4h-4zM169 113h4v4h-4zM114 117h3v4h-3zM275 121h4v3h-4zM253 132h4v3h-4zM257 132h4v3h-4zM242 135h4v4h-4zM29 143h4v3h-4zM261 143h3v3h-3zM95 146h4v4h-4zM26 150h3v4h-3zM209 154h4v3h-4zM0 157h4v4h-4zM84 157h4v4h-4zM198 157h4v4h-4zM62 161h4v4h-4zM55 165h4v3h-4zM92 165h3v3h-3zM143 168h4v4h-4zM261 168h3v4h-3zM147 172h4v4h-4zM257 172h4v4h-4zM48 176h3v3h-3zM132 183h4v4h-4zM173 183h3v4h-3zM213 183h4v4h-4zM136 187h4v3h-4zM151 187h3v3h-3zM154 187h4v3h-4zM0 190h4v4h-4zM40 190h4v4h-4zM275 190h4v4h-4zM198 194h4v3h-4zM275 194h4v3h-4zM84 197h4v4h-4zM4 201h3v4h-3zM88 201h4v4h-4zM158 201h4v4h-4zM246 201h4v4h-4zM88 205h4v3h-4zM110 205h4v3h-4zM176 205h4v3h-4zM40 208h4v4h-4zM242 208h4v4h-4zM88 212h4v4h-4zM66 216h4v3h-4zM239 216h3v3h-3zM62 219h4v4h-4zM59 223h3v4h-3zM62 223h4v4h-4zM195 223h3v4h-3zM151 230h3v4h-3zM125 234h3v4h-3zM128 234h4v4h-4zM176 238h4v3h-4zM106 241h4v4h-4zM59 249h3v3h-3zM231 249h4v3h-4zM235 252h4v4h-4z"/><path fill="#9f6" d="M11 0h4v4h-4zM184 4h3v3h-3zM132 15h4v3h-4zM191 22h4v4h-4zM275 22h4v4h-4zM195 26h3v3h-3zM128 29h4v4h-4zM242 29h4v4h-4zM81 44h3v4h-3zM110 44h4v4h-4zM70 48h3v3h-3zM128 48h4v3h-4zM198 62h4v4h-4zM191 66h4v3h-4zM162 73h3v4h-3zM224 73h4v4h-4zM228 91h3v4h-3zM162 95h3v4h-3zM165 95h4v4h-4zM84 110h4v3h-4zM40 124h4v4h-4zM268 124h4v4h-4zM143 128h4v4h-4zM250 139h3v4h-3zM77 157h4v4h-4zM173 157h3v4h-3zM40 172h4v4h-4zM202 187h4v3h-4zM246 187h4v3h-4zM180 201h4v4h-4zM117 208h4v4h-4zM169 208h4v4h-4zM235 208h4v4h-4zM11 216h4v3h-4zM187 241h4v4h-4zM95 252h4v4h-4zM103 252h3v4h-3zM114 252h3v4h-3z"/><path fill="#5c2" d="M15 0h3v4h-3zM106 0h4v4h-4zM106 18h4v4h-4zM235 51h4v4h-4zM147 59h4v3h-4zM228 59h3v3h-3zM110 62h4v4h-4zM206 62h3v4h-3zM235 69h4v4h-4zM110 77h4v3h-4zM169 80h4v4h-4zM264 91h4v4h-4zM125 99h3v3h-3zM224 99h4v3h-4zM268 99h4v3h-4zM117 110h4v3h-4zM275 113h4v4h-4zM176 128h4v4h-4zM253 128h4v4h-4zM62 139h4v4h-4zM103 139h3v4h-3zM158 161h4v4h-4zM154 168h4v4h-4zM59 179h3v4h-3zM132 187h4v3h-4zM275 197h4v4h-4zM235 216h4v3h-4zM95 245h4v4h-4z"/><path fill="#262" d="M18 0h4v4h-4zM110 4h4v3h-4zM151 18h3v4h-3zM231 22h4v4h-4zM48 37h3v3h-3zM268 40h4v4h-4zM180 48h4v3h-4zM176 51h4v4h-4zM250 51h3v4h-3zM198 55h4v4h-4zM264 59h4v3h-4zM250 62h3v4h-3zM114 69h3v4h-3zM0 77h4v3h-4zM51 91h4v4h-4zM99 95h4v4h-4zM213 99h4v3h-4zM77 102h4v4h-4zM70 110h3v3h-3zM198 110h4v3h-4zM246 110h4v3h-4zM191 117h4v4h-4zM231 117h4v4h-4zM29 128h4v4h-4zM55 139h4v4h-4zM202 143h4v3h-4zM224 143h4v3h-4zM114 157h3v4h-3zM220 157h4v4h-4zM117 168h4v4h-4zM206 176h3v3h-3zM136 201h4v4h-4zM275 201h4v4h-4zM140 205h3v3h-3zM253 208h4v4h-4zM77 219h4v4h-4zM84 219h4v4h-4zM132 219h4v4h-4zM162 219h3v4h-3zM92 223h3v4h-3zM128 223h4v4h-4zM180 227h4v3h-4zM37 230h3v4h-3zM40 234h4v4h-4zM202 234h4v4h-4zM40 238h4v3h-4zM268 241h4v4h-4zM275 249h4v3h-4zM268 252h4v4h-4z"/><path fill="#4c2" d="M22 0h4v4h-4zM173 4h3v3h-3zM253 4h4v3h-4zM132 7h4v4h-4zM103 15h3v3h-3zM92 33h3v4h-3zM242 37h4v3h-4zM162 40h3v4h-3zM228 51h3v4h-3zM92 55h3v4h-3zM121 59h4v3h-4zM202 62h4v4h-4zM55 66h4v3h-4zM220 73h4v4h-4zM51 95h4v4h-4zM154 102h4v4h-4zM121 106h4v4h-4zM7 110h4v3h-4zM11 110h4v3h-4zM143 113h4v4h-4zM257 113h4v4h-4zM268 113h4v4h-4zM250 117h3v4h-3zM99 139h4v4h-4zM7 143h4v3h-4zM117 143h4v3h-4zM143 150h4v4h-4zM95 157h4v4h-4zM242 157h4v4h-4zM117 161h4v4h-4zM66 208h4v4h-4zM51 212h4v4h-4zM162 227h3v3h-3zM55 230h4v4h-4zM29 234h4v4h-4zM250 234h3v4h-3zM184 241h3v4h-3zM202 241h4v4h-4zM272 252h3v4h-3z"/><path fill="#5e2" d="M26 0h3v4h-3zM70 0h3v4h-3zM257 4h4v3h-4zM198 7h4v4h-4zM180 11h4v4h-4zM4 18h3v4h-3zM26 18h3v4h-3zM103 26h3v3h-3zM217 29h3v4h-3zM242 33h4v4h-4zM173 37h3v3h-3zM151 48h3v3h-3zM147 55h4v4h-4zM217 62h3v4h-3zM7 69h4v4h-4zM11 69h4v4h-4zM239 73h3v4h-3zM114 77h3v3h-3zM51 88h4v3h-4zM40 99h4v3h-4zM154 99h4v3h-4zM228 99h3v3h-3zM117 113h4v4h-4zM253 117h4v4h-4zM136 121h4v3h-4zM125 128h3v4h-3zM220 132h4v3h-4zM110 139h4v4h-4zM202 146h4v4h-4zM231 172h4v4h-4zM11 179h4v4h-4zM176 179h4v4h-4zM180 190h4v4h-4zM224 190h4v4h-4zM4 194h3v3h-3zM220 197h4v4h-4zM253 201h4v4h-4zM99 208h4v4h-4zM59 212h3v4h-3zM180 212h4v4h-4zM18 216h4v3h-4zM37 216h3v3h-3zM29 238h4v3h-4zM121 238h4v3h-4zM77 241h4v4h-4zM66 245h4v4h-4zM136 252h4v4h-4zM140 252h3v4h-3z"/><path fill="#8e3" d="M29 0h4v4h-4zM33 22h4v4h-4zM173 29h3v4h-3zM70 33h3v4h-3zM88 37h4v3h-4zM235 40h4v4h-4zM191 44h4v4h-4zM92 48h3v3h-3zM151 55h3v4h-3zM0 62h4v4h-4zM84 62h4v4h-4zM40 69h4v4h-4zM15 73h3v4h-3zM59 73h3v4h-3zM51 77h4v3h-4zM26 88h3v3h-3zM246 95h4v4h-4zM187 102h4v4h-4zM55 106h4v4h-4zM88 110h4v3h-4zM88 113h4v4h-4zM128 121h4v3h-4zM95 128h4v4h-4zM0 132h4v3h-4zM228 132h3v3h-3zM239 139h3v4h-3zM37 143h3v3h-3zM143 143h4v3h-4zM275 143h4v3h-4zM272 157h3v4h-3zM4 161h3v4h-3zM15 161h3v4h-3zM59 165h3v3h-3zM103 172h3v4h-3zM37 179h3v4h-3zM173 179h3v4h-3zM268 190h4v4h-4zM51 194h4v3h-4zM162 194h3v3h-3zM125 197h3v4h-3zM128 197h4v4h-4zM154 197h4v4h-4zM176 201h4v4h-4zM84 205h4v3h-4zM103 216h3v3h-3zM55 223h4v4h-4zM66 223h4v4h-4zM70 241h3v4h-3z"/><path fill="#9e3" d="M33 0h4v4h-4zM55 0h4v4h-4zM220 0h4v4h-4zM275 11h4v4h-4zM37 15h3v3h-3zM117 15h4v3h-4zM33 18h4v4h-4zM165 22h4v4h-4zM26 29h3v4h-3zM239 29h3v4h-3zM239 37h3v3h-3zM66 40h4v4h-4zM121 44h4v4h-4zM66 48h4v3h-4zM231 48h4v3h-4zM33 55h4v4h-4zM40 62h4v4h-4zM213 69h4v4h-4zM275 73h4v4h-4zM224 77h4v3h-4zM253 77h4v3h-4zM275 77h4v3h-4zM195 80h3v4h-3zM62 84h4v4h-4zM275 84h4v4h-4zM88 88h4v3h-4zM18 91h4v4h-4zM88 95h4v4h-4zM92 99h3v3h-3zM191 102h4v4h-4zM0 106h4v4h-4zM140 124h3v4h-3zM224 128h4v4h-4zM81 135h3v4h-3zM246 139h4v4h-4zM128 146h4v4h-4zM37 154h3v3h-3zM261 154h3v3h-3zM268 165h4v3h-4zM176 168h4v4h-4zM239 168h3v4h-3zM44 176h4v3h-4zM224 176h4v3h-4zM224 179h4v4h-4zM121 187h4v3h-4zM70 190h3v4h-3zM0 194h4v3h-4zM121 194h4v3h-4zM128 194h4v3h-4zM268 194h4v3h-4zM117 205h4v3h-4zM7 208h4v4h-4zM121 212h4v4h-4zM169 212h4v4h-4zM59 252h3v4h-3z"/><path fill="#cf4" d="M37 0h3v4h-3zM213 0h4v4h-4zM213 7h4v4h-4zM217 26h3v3h-3zM125 40h3v4h-3zM66 51h4v4h-4zM136 66h4v3h-4zM206 69h3v4h-3zM95 80h4v4h-4zM29 84h4v4h-4zM92 88h3v3h-3zM92 91h3v4h-3zM51 106h4v4h-4zM77 132h4v3h-4zM81 143h3v3h-3zM88 179h4v4h-4zM140 179h3v4h-3zM44 201h4v4h-4zM239 201h3v4h-3zM206 249h3v3h-3z"/><path fill="#9f4" d="M40 0h4v4h-4zM51 0h4v4h-4zM121 4h4v3h-4zM176 4h4v3h-4zM220 4h4v3h-4zM29 7h4v4h-4zM217 11h3v4h-3zM272 15h3v3h-3zM180 18h4v4h-4zM257 18h4v4h-4zM18 22h4v4h-4zM169 22h4v4h-4zM187 22h4v4h-4zM121 26h4v3h-4zM169 29h4v4h-4zM73 33h4v4h-4zM158 33h4v4h-4zM117 37h4v3h-4zM158 37h4v3h-4zM106 40h4v4h-4zM220 40h4v4h-4zM84 51h4v4h-4zM106 51h4v4h-4zM191 51h4v4h-4zM81 55h3v4h-3zM81 59h3v3h-3zM37 62h3v4h-3zM198 66h4v3h-4zM220 66h4v3h-4zM33 69h4v4h-4zM180 69h4v4h-4zM22 73h4v4h-4zM209 73h4v4h-4zM7 77h4v3h-4zM235 77h4v3h-4zM257 77h4v3h-4zM7 80h4v4h-4zM11 80h4v4h-4zM26 80h3v4h-3zM40 80h4v4h-4zM92 84h3v4h-3zM95 84h4v4h-4zM22 95h4v4h-4zM125 95h3v4h-3zM132 95h4v4h-4zM128 99h4v3h-4zM187 99h4v3h-4zM180 106h4v4h-4zM44 110h4v3h-4zM29 113h4v4h-4zM55 113h4v4h-4zM73 113h4v4h-4zM73 117h4v4h-4zM66 124h4v4h-4zM73 124h4v4h-4zM106 128h4v4h-4zM103 132h3v3h-3zM0 139h4v4h-4zM242 139h4v4h-4zM26 143h3v3h-3zM242 143h4v3h-4zM92 146h3v4h-3zM253 146h4v4h-4zM169 154h4v3h-4zM15 157h3v4h-3zM51 157h4v4h-4zM18 161h4v4h-4zM73 165h4v3h-4zM136 165h4v3h-4zM140 165h3v3h-3zM81 168h3v4h-3zM125 168h3v4h-3zM235 172h4v4h-4zM261 172h3v4h-3zM84 176h4v3h-4zM128 176h4v3h-4zM231 176h4v3h-4zM70 179h3v4h-3zM121 179h4v4h-4zM165 179h4v4h-4zM117 183h4v4h-4zM106 187h4v3h-4zM110 187h4v3h-4zM117 187h4v3h-4zM195 187h3v3h-3zM62 190h4v4h-4zM88 190h4v4h-4zM235 190h4v4h-4zM66 194h4v3h-4zM158 194h4v3h-4zM7 197h4v4h-4zM70 201h3v4h-3zM162 201h3v4h-3zM70 205h3v3h-3zM106 205h4v3h-4zM121 205h4v3h-4zM217 212h3v4h-3zM242 216h4v3h-4zM213 219h4v4h-4zM242 219h4v4h-4zM213 223h4v4h-4zM220 223h4v4h-4zM147 230h4v4h-4zM246 234h4v4h-4zM26 238h3v3h-3zM191 245h4v4h-4zM114 249h3v3h-3zM224 249h4v3h-4z"/><path fill="#8e5" d="M44 0h4v4h-4zM48 0h3v4h-3zM261 7h3v4h-3zM275 18h4v4h-4zM11 22h4v4h-4zM242 22h4v4h-4zM33 29h4v4h-4zM117 44h4v4h-4zM18 48h4v3h-4zM195 55h3v4h-3zM106 59h4v3h-4zM195 66h3v3h-3zM4 69h3v4h-3zM7 73h4v4h-4zM103 73h3v4h-3zM250 73h3v4h-3zM250 77h3v3h-3zM15 84h3v4h-3zM26 84h3v4h-3zM198 88h4v3h-4zM11 91h4v4h-4zM132 99h4v3h-4zM165 110h4v3h-4zM44 121h4v3h-4zM70 124h3v4h-3zM261 124h3v4h-3zM51 146h4v4h-4zM7 150h4v4h-4zM77 150h4v4h-4zM11 161h4v4h-4zM37 161h3v4h-3zM176 187h4v3h-4zM117 194h4v3h-4zM250 194h3v3h-3zM114 205h3v3h-3zM0 223h4v4h-4zM15 223h3v4h-3zM206 223h3v4h-3zM114 238h3v3h-3zM125 241h3v4h-3zM220 241h4v4h-4zM88 249h4v3h-4zM103 249h3v3h-3zM198 252h4v4h-4z"/><path fill="#5d3" d="M59 0h3v4h-3zM191 7h4v4h-4zM66 29h4v4h-4zM117 59h4v3h-4zM169 62h4v4h-4zM250 66h3v3h-3zM55 69h4v4h-4zM4 73h3v4h-3zM117 73h4v4h-4zM147 113h4v4h-4zM140 121h3v3h-3zM217 176h3v3h-3zM128 183h4v4h-4zM180 194h4v3h-4zM110 197h4v4h-4zM26 205h3v3h-3zM206 212h3v4h-3zM33 216h4v3h-4zM275 234h4v4h-4zM162 241h3v4h-3z"/><path fill="#6e2" d="M62 0h4v4h-4zM261 0h3v4h-3zM18 7h4v4h-4zM165 15h4v3h-4zM4 22h3v4h-3zM26 22h3v4h-3zM51 40h4v4h-4zM158 40h4v4h-4zM173 40h3v4h-3zM22 51h4v4h-4zM99 59h4v3h-4zM151 62h3v4h-3zM250 69h3v4h-3zM33 73h4v4h-4zM29 77h4v3h-4zM235 99h4v3h-4zM121 113h4v4h-4zM128 124h4v4h-4zM55 132h4v3h-4zM0 135h4v4h-4zM26 154h3v3h-3zM33 157h4v4h-4zM55 157h4v4h-4zM257 157h4v4h-4zM55 161h4v4h-4zM84 165h4v3h-4zM180 165h4v3h-4zM99 168h4v4h-4zM62 179h4v4h-4zM29 183h4v4h-4zM176 190h4v4h-4zM84 194h4v3h-4zM257 194h4v3h-4zM202 201h4v4h-4zM235 205h4v3h-4zM121 219h4v4h-4zM66 227h4v3h-4zM55 241h4v4h-4zM206 245h3v4h-3zM51 249h4v3h-4zM62 252h4v4h-4z"/><path fill="#5e5" d="M66 0h4v4h-4zM180 55h4v4h-4zM272 73h3v4h-3zM48 128h3v4h-3zM11 146h4v4h-4zM55 146h4v4h-4zM180 157h4v4h-4zM213 157h4v4h-4zM110 190h4v4h-4zM26 219h3v4h-3zM125 252h3v4h-3zM154 252h4v4h-4z"/><path fill="#272" d="M73 0h4v4h-4zM77 0h4v4h-4zM272 4h3v3h-3zM70 11h3v4h-3zM231 26h4v3h-4zM44 37h4v3h-4zM7 44h4v4h-4zM202 44h4v4h-4zM7 48h4v3h-4zM272 51h3v4h-3zM66 66h4v3h-4zM114 66h3v3h-3zM73 69h4v4h-4zM70 73h3v4h-3zM26 99h3v3h-3zM209 102h4v4h-4zM106 110h4v3h-4zM143 117h4v4h-4zM22 121h4v3h-4zM154 128h4v4h-4zM184 128h3v4h-3zM48 139h3v4h-3zM184 143h3v3h-3zM228 146h3v4h-3zM103 150h3v4h-3zM184 161h3v4h-3zM187 161h4v4h-4zM117 165h4v3h-4zM7 187h4v3h-4zM136 216h4v3h-4zM272 216h3v3h-3zM51 223h4v4h-4zM151 249h3v3h-3zM272 249h3v3h-3zM37 252h3v4h-3zM187 252h4v4h-4z"/><path fill="#491" d="M81 0h3v4h-3zM176 11h4v4h-4zM143 15h4v3h-4zM158 15h4v3h-4zM162 18h3v4h-3zM250 33h3v4h-3zM239 40h3v4h-3zM239 44h3v4h-3zM81 80h3v4h-3zM180 84h4v4h-4zM70 91h3v4h-3zM22 99h4v3h-4zM261 102h3v4h-3zM117 117h4v4h-4zM99 124h4v4h-4zM253 168h4v4h-4zM106 172h4v4h-4zM33 190h4v4h-4zM33 194h4v3h-4zM37 194h3v3h-3zM77 194h4v3h-4zM231 201h4v4h-4zM117 230h4v4h-4zM165 252h4v4h-4zM242 252h4v4h-4z"/><path fill="#5f3" d="M84 0h4v4h-4zM70 4h3v3h-3zM250 15h3v3h-3zM253 15h4v3h-4zM191 18h4v4h-4zM242 18h4v4h-4zM239 22h3v4h-3zM62 29h4v4h-4zM55 33h4v4h-4zM173 33h3v4h-3zM184 37h3v3h-3zM217 40h3v4h-3zM184 48h3v3h-3zM169 55h4v4h-4zM224 55h4v4h-4zM18 59h4v3h-4zM158 62h4v4h-4zM257 66h4v3h-4zM121 73h4v4h-4zM147 77h4v3h-4zM147 80h4v4h-4zM213 80h4v4h-4zM117 91h4v4h-4zM110 95h4v4h-4zM162 102h3v4h-3zM11 106h4v4h-4zM99 106h4v4h-4zM202 106h4v4h-4zM59 113h3v4h-3zM33 124h4v4h-4zM143 124h4v4h-4zM257 124h4v4h-4zM7 135h4v4h-4zM106 139h4v4h-4zM44 143h4v3h-4zM70 150h3v4h-3zM180 154h4v3h-4zM217 154h3v3h-3zM128 157h4v4h-4zM51 176h4v3h-4zM261 176h3v3h-3zM264 179h4v4h-4zM272 183h3v4h-3zM7 190h4v4h-4zM257 190h4v4h-4zM220 194h4v3h-4zM51 197h4v4h-4zM59 201h3v4h-3zM0 205h4v3h-4zM15 208h3v4h-3zM70 212h3v4h-3zM173 212h3v4h-3zM15 219h3v4h-3zM33 219h4v4h-4zM147 227h4v3h-4zM128 230h4v4h-4zM213 230h4v4h-4zM228 230h3v4h-3zM169 234h4v4h-4zM184 234h3v4h-3zM7 238h4v3h-4zM264 238h4v3h-4zM15 241h3v4h-3zM136 241h4v4h-4zM147 241h4v4h-4zM70 245h3v4h-3zM125 245h3v4h-3zM235 245h4v4h-4zM70 249h3v3h-3zM77 249h4v3h-4z"/><path fill="#7f3" d="M88 0h4v4h-4zM224 0h4v4h-4zM231 0h4v4h-4zM191 4h4v3h-4zM275 4h4v3h-4zM4 11h3v4h-3zM187 11h4v4h-4zM7 15h4v3h-4zM191 15h4v3h-4zM22 18h4v4h-4zM106 22h4v4h-4zM70 29h3v4h-3zM176 29h4v4h-4zM184 29h3v4h-3zM187 29h4v4h-4zM18 33h4v4h-4zM40 40h4v4h-4zM44 40h4v4h-4zM70 40h3v4h-3zM84 44h4v4h-4zM95 44h4v4h-4zM103 48h3v3h-3zM195 48h3v3h-3zM73 51h4v4h-4zM195 51h3v4h-3zM224 51h4v4h-4zM275 55h4v4h-4zM22 59h4v3h-4zM26 59h3v3h-3zM55 62h4v4h-4zM154 62h4v4h-4zM272 62h3v4h-3zM140 69h3v4h-3zM209 69h4v4h-4zM165 73h4v4h-4zM272 77h3v3h-3zM62 80h4v4h-4zM81 84h3v4h-3zM272 84h3v4h-3zM40 88h4v3h-4zM184 88h3v3h-3zM143 91h4v4h-4zM121 95h4v4h-4zM37 106h3v4h-3zM198 106h4v4h-4zM0 110h4v3h-4zM81 110h3v3h-3zM169 110h4v3h-4zM0 113h4v4h-4zM81 113h3v4h-3zM176 117h4v4h-4zM121 121h4v3h-4zM151 121h3v3h-3zM224 121h4v3h-4zM84 128h4v4h-4zM59 132h3v3h-3zM92 132h3v3h-3zM239 132h3v3h-3zM26 135h3v4h-3zM158 135h4v4h-4zM66 139h4v4h-4zM70 139h3v4h-3zM114 139h3v4h-3zM11 150h4v4h-4zM173 150h3v4h-3zM162 161h3v4h-3zM169 161h4v4h-4zM51 172h4v4h-4zM154 172h4v4h-4zM62 176h4v3h-4zM103 176h3v3h-3zM165 176h4v3h-4zM110 179h4v4h-4zM48 183h3v4h-3zM176 183h4v4h-4zM44 187h4v3h-4zM66 187h4v3h-4zM70 187h3v3h-3zM169 187h4v3h-4zM173 187h3v3h-3zM272 187h3v3h-3zM125 194h3v3h-3zM0 197h4v4h-4zM151 197h3v4h-3zM217 197h3v4h-3zM95 201h4v4h-4zM184 201h3v4h-3zM15 205h3v3h-3zM121 208h4v4h-4zM29 216h4v3h-4zM184 216h3v3h-3zM246 216h4v3h-4zM110 219h4v4h-4zM121 223h4v4h-4zM235 223h4v4h-4zM4 227h3v3h-3zM191 227h4v3h-4zM228 227h3v3h-3zM154 230h4v4h-4zM187 230h4v4h-4zM136 234h4v4h-4zM191 238h4v3h-4zM55 245h4v4h-4zM191 249h4v3h-4zM0 252h4v4h-4zM22 252h4v4h-4z"/><path fill="#af4" d="M92 0h3v4h-3zM242 0h4v4h-4zM95 4h4v3h-4zM99 4h4v3h-4zM128 7h4v4h-4zM143 11h4v4h-4zM268 11h4v4h-4zM18 18h4v4h-4zM29 22h4v4h-4zM117 29h4v4h-4zM154 33h4v4h-4zM239 33h3v4h-3zM99 40h4v4h-4zM121 40h4v4h-4zM169 40h4v4h-4zM51 44h4v4h-4zM110 48h4v3h-4zM169 48h4v3h-4zM132 55h4v4h-4zM37 59h3v3h-3zM99 73h4v4h-4zM103 77h3v3h-3zM29 80h4v4h-4zM158 80h4v4h-4zM198 80h4v4h-4zM231 80h4v4h-4zM198 84h4v4h-4zM22 88h4v3h-4zM220 88h4v3h-4zM121 91h4v4h-4zM220 91h4v4h-4zM231 91h4v4h-4zM44 95h4v4h-4zM176 95h4v4h-4zM184 102h3v4h-3zM84 106h4v4h-4zM51 113h4v4h-4zM84 113h4v4h-4zM70 117h3v4h-3zM37 121h3v3h-3zM70 121h3v3h-3zM44 124h4v4h-4zM66 132h4v3h-4zM92 143h3v3h-3zM246 143h4v3h-4zM268 143h4v3h-4zM22 146h4v4h-4zM15 150h3v4h-3zM81 150h3v4h-3zM15 154h3v3h-3zM59 154h3v3h-3zM62 154h4v3h-4zM173 161h3v4h-3zM70 165h3v3h-3zM195 165h3v3h-3zM44 168h4v4h-4zM88 176h4v3h-4zM253 176h4v3h-4zM125 179h3v4h-3zM136 183h4v4h-4zM162 183h3v4h-3zM198 183h4v4h-4zM242 187h4v3h-4zM151 190h3v4h-3zM165 190h4v4h-4zM206 190h3v4h-3zM48 194h3v3h-3zM66 197h4v4h-4zM81 201h3v4h-3zM84 201h4v4h-4zM51 205h4v3h-4zM184 205h3v3h-3zM110 212h4v4h-4zM228 212h3v4h-3zM198 216h4v3h-4zM217 216h3v3h-3zM231 219h4v4h-4zM209 223h4v4h-4zM59 227h3v3h-3zM62 227h4v3h-4zM88 245h4v4h-4zM217 245h3v4h-3z"/><path fill="#9e6" d="M95 0h4v4h-4zM121 18h4v4h-4zM268 33h4v4h-4zM84 48h4v3h-4zM88 48h4v3h-4zM77 55h4v4h-4zM73 59h4v3h-4zM202 84h4v4h-4zM195 88h3v3h-3zM202 88h4v3h-4zM169 117h4v4h-4zM66 121h4v3h-4zM48 124h3v4h-3zM268 132h4v3h-4zM73 161h4v4h-4zM162 187h3v3h-3zM15 197h3v4h-3zM22 223h4v4h-4zM213 252h4v4h-4z"/><path fill="#7e4" d="M99 0h4v4h-4zM235 11h4v4h-4zM15 18h3v4h-3zM18 26h4v3h-4zM29 33h4v4h-4zM217 44h3v4h-3zM220 44h4v4h-4zM121 55h4v4h-4zM88 59h4v3h-4zM59 62h3v4h-3zM275 62h4v4h-4zM169 66h4v3h-4zM187 66h4v3h-4zM228 66h3v3h-3zM62 69h4v4h-4zM92 73h3v4h-3zM128 73h4v4h-4zM239 80h3v4h-3zM11 84h4v4h-4zM84 84h4v4h-4zM206 88h3v3h-3zM48 91h3v4h-3zM18 95h4v4h-4zM4 106h3v4h-3zM92 106h3v4h-3zM140 106h3v4h-3zM176 110h4v3h-4zM70 113h3v4h-3zM117 121h4v3h-4zM7 128h4v4h-4zM81 128h3v4h-3zM231 128h4v4h-4zM272 128h3v4h-3zM117 135h4v4h-4zM95 139h4v4h-4zM272 143h3v3h-3zM206 150h3v4h-3zM257 154h4v3h-4zM136 161h4v4h-4zM48 165h3v3h-3zM125 165h3v3h-3zM202 165h4v3h-4zM195 172h3v4h-3zM26 176h3v3h-3zM48 179h3v4h-3zM154 183h4v4h-4zM235 187h4v3h-4zM253 187h4v3h-4zM213 190h4v4h-4zM246 190h4v4h-4zM81 197h3v4h-3zM202 197h4v4h-4zM217 201h3v4h-3zM198 212h4v4h-4zM272 212h3v4h-3zM55 216h4v3h-4zM7 223h4v4h-4zM26 223h3v4h-3zM114 223h3v4h-3zM250 230h3v4h-3zM151 238h3v3h-3zM239 238h3v3h-3zM110 249h4v3h-4zM51 252h4v4h-4zM92 252h3v4h-3z"/><path fill="#6e7" d="M103 0h3v4h-3zM261 11h3v4h-3zM165 91h4v4h-4zM92 139h3v4h-3zM128 165h4v3h-4zM195 252h3v4h-3z"/><path fill="#4a3" d="M110 0h4v4h-4zM70 7h3v4h-3zM62 11h4v4h-4zM246 11h4v4h-4zM195 33h3v4h-3zM213 44h4v4h-4zM37 73h3v4h-3zM272 91h3v4h-3zM272 99h3v3h-3zM250 110h3v3h-3zM187 117h4v4h-4zM162 150h3v4h-3zM106 176h4v3h-4zM257 187h4v3h-4zM213 197h4v4h-4zM51 216h4v3h-4zM29 227h4v3h-4zM202 227h4v3h-4zM136 230h4v4h-4zM95 238h4v3h-4zM11 241h4v4h-4zM147 245h4v4h-4zM242 245h4v4h-4zM158 249h4v3h-4zM268 249h4v3h-4z"/><path fill="#8e4" d="M114 0h3v4h-3zM224 15h4v3h-4zM272 18h3v4h-3zM173 26h3v3h-3zM213 26h4v3h-4zM121 29h4v4h-4zM77 37h4v3h-4zM117 40h4v4h-4zM15 51h3v4h-3zM117 51h4v4h-4zM217 51h3v4h-3zM140 55h3v4h-3zM184 59h3v3h-3zM59 66h3v3h-3zM220 69h4v4h-4zM217 84h3v4h-3zM231 84h4v4h-4zM250 84h3v4h-3zM95 88h4v3h-4zM224 88h4v3h-4zM217 91h3v4h-3zM15 95h3v4h-3zM217 95h3v4h-3zM250 95h3v4h-3zM95 99h4v3h-4zM191 99h4v3h-4zM22 106h4v4h-4zM173 106h3v4h-3zM15 124h3v4h-3zM264 124h4v4h-4zM18 128h4v4h-4zM66 128h4v4h-4zM121 128h4v4h-4zM268 128h4v4h-4zM143 132h4v3h-4zM257 150h4v4h-4zM73 154h4v3h-4zM88 157h4v4h-4zM70 161h3v4h-3zM37 165h3v3h-3zM15 172h3v4h-3zM99 176h4v3h-4zM195 183h3v4h-3zM33 187h4v3h-4zM217 190h3v4h-3zM191 194h4v3h-4zM239 194h3v3h-3zM22 201h4v4h-4zM99 201h4v4h-4zM117 201h4v4h-4zM103 205h3v3h-3zM180 205h4v3h-4zM106 208h4v4h-4zM110 208h4v4h-4zM106 212h4v4h-4zM66 219h4v4h-4zM202 219h4v4h-4zM143 230h4v4h-4zM140 241h3v4h-3zM110 245h4v4h-4z"/><path fill="#9e5" d="M117 0h4v4h-4zM125 7h3v4h-3zM224 7h4v4h-4zM264 11h4v4h-4zM217 22h3v4h-3zM250 22h3v4h-3zM70 55h3v4h-3zM73 55h4v4h-4zM44 62h4v4h-4zM191 77h4v3h-4zM44 80h4v4h-4zM228 80h3v4h-3zM242 80h4v4h-4zM206 84h3v4h-3zM15 88h3v3h-3zM202 91h4v4h-4zM224 95h4v4h-4zM11 102h4v4h-4zM136 102h4v4h-4zM176 102h4v4h-4zM154 106h4v4h-4zM169 106h4v4h-4zM55 117h4v4h-4zM7 121h4v3h-4zM110 128h4v4h-4zM110 135h4v4h-4zM22 143h4v3h-4zM37 168h3v4h-3zM140 168h3v4h-3zM239 172h3v4h-3zM103 187h3v3h-3zM250 190h3v4h-3zM272 194h3v3h-3zM51 208h4v4h-4zM220 212h4v4h-4zM22 216h4v3h-4zM117 216h4v3h-4zM11 219h4v4h-4zM147 238h4v3h-4zM242 238h4v3h-4zM246 238h4v3h-4z"/><path fill="#af3" d="M121 0h4v4h-4zM239 0h3v4h-3zM213 4h4v3h-4zM209 7h4v4h-4zM22 11h4v4h-4zM158 11h4v4h-4zM29 15h4v3h-4zM121 15h4v3h-4zM176 18h4v4h-4zM239 18h3v4h-3zM29 26h4v3h-4zM162 29h3v4h-3zM165 29h4v4h-4zM59 37h3v3h-3zM154 37h4v3h-4zM235 37h4v3h-4zM55 40h4v4h-4zM29 55h4v4h-4zM26 62h3v4h-3zM136 62h4v4h-4zM162 66h3v3h-3zM206 66h3v3h-3zM125 88h3v3h-3zM250 88h3v3h-3zM195 95h3v4h-3zM37 113h3v4h-3zM33 117h4v4h-4zM235 132h4v3h-4zM253 139h4v4h-4zM264 143h4v3h-4zM88 146h4v4h-4zM37 150h3v4h-3zM264 154h4v3h-4zM37 157h3v4h-3zM209 157h4v4h-4zM176 165h4v3h-4zM7 168h4v4h-4zM88 168h4v4h-4zM242 168h4v4h-4zM228 176h3v3h-3zM235 176h4v3h-4zM37 183h3v4h-3zM169 183h4v4h-4zM213 187h4v3h-4zM165 194h4v3h-4zM242 205h4v3h-4zM40 212h4v4h-4zM59 230h3v4h-3zM110 234h4v4h-4zM195 234h3v4h-3zM59 245h3v4h-3z"/><path fill="#ae3" d="M125 0h3v4h-3zM7 7h4v4h-4zM206 11h3v4h-3zM209 11h4v4h-4zM220 15h4v3h-4zM125 22h3v4h-3zM213 22h4v4h-4zM184 26h3v3h-3zM264 33h4v4h-4zM125 44h3v4h-3zM128 44h4v4h-4zM33 59h4v3h-4zM180 73h4v4h-4zM33 110h4v3h-4zM92 124h3v4h-3zM62 132h4v3h-4zM114 135h3v4h-3zM250 135h3v4h-3zM257 139h4v4h-4zM198 165h4v3h-4zM191 168h4v4h-4zM81 179h3v4h-3zM217 183h3v4h-3zM40 187h4v3h-4zM40 194h4v3h-4zM202 194h4v3h-4zM158 197h4v4h-4zM250 197h3v4h-3zM40 205h4v3h-4zM73 205h4v3h-4zM81 205h3v3h-3zM228 208h3v4h-3zM66 230h4v4h-4zM26 234h3v4h-3zM70 234h3v4h-3zM55 252h4v4h-4z"/><path fill="#9f3" d="M128 0h4v4h-4zM191 0h4v4h-4zM253 0h4v4h-4zM242 4h4v3h-4zM250 4h3v3h-3zM158 7h4v4h-4zM18 11h4v4h-4zM147 11h4v4h-4zM220 11h4v4h-4zM114 15h3v3h-3zM235 15h4v3h-4zM136 18h4v4h-4zM217 18h3v4h-3zM224 18h4v4h-4zM106 29h4v4h-4zM257 29h4v4h-4zM26 37h3v3h-3zM70 37h3v3h-3zM228 37h3v3h-3zM140 48h3v3h-3zM59 51h3v4h-3zM106 55h4v4h-4zM29 66h4v3h-4zM202 69h4v4h-4zM51 84h4v4h-4zM59 84h3v4h-3zM37 91h3v4h-3zM128 91h4v4h-4zM257 91h4v4h-4zM40 95h4v4h-4zM92 95h3v4h-3zM228 95h3v4h-3zM253 95h4v4h-4zM88 99h4v3h-4zM99 102h4v4h-4zM48 106h3v4h-3zM165 113h4v4h-4zM125 121h3v3h-3zM106 124h4v4h-4zM140 128h3v4h-3zM235 128h4v4h-4zM261 128h3v4h-3zM272 132h3v3h-3zM235 135h4v4h-4zM22 139h4v4h-4zM77 139h4v4h-4zM272 139h3v4h-3zM0 154h4v3h-4zM268 154h4v3h-4zM22 157h4v4h-4zM7 161h4v4h-4zM33 161h4v4h-4zM165 161h4v4h-4zM264 161h4v4h-4zM92 168h3v4h-3zM95 168h4v4h-4zM33 172h4v4h-4zM62 172h4v4h-4zM165 172h4v4h-4zM176 172h4v4h-4zM66 176h4v3h-4zM7 179h4v4h-4zM220 179h4v4h-4zM206 183h3v4h-3zM77 187h4v3h-4zM209 187h4v3h-4zM51 190h4v4h-4zM209 190h4v4h-4zM239 190h3v4h-3zM44 194h4v3h-4zM121 197h4v4h-4zM220 201h4v4h-4zM106 216h4v3h-4zM110 216h4v3h-4zM191 223h4v4h-4zM0 227h4v3h-4zM70 238h3v3h-3zM125 238h3v3h-3zM162 238h3v3h-3zM195 238h3v3h-3zM88 241h4v4h-4zM217 241h3v4h-3zM209 249h4v3h-4zM235 249h4v3h-4z"/><path fill="#af2" d="M132 0h4v4h-4zM228 44h3v4h-3zM228 48h3v3h-3zM29 51h4v4h-4zM55 59h4v3h-4zM272 80h3v4h-3zM250 91h3v4h-3zM48 110h3v3h-3zM77 135h4v4h-4zM73 139h4v4h-4zM246 205h4v3h-4zM62 238h4v3h-4z"/><path fill="#7f2" d="M136 0h4v4h-4zM84 4h4v3h-4zM198 4h4v3h-4zM246 4h4v3h-4zM239 11h3v4h-3zM202 15h4v3h-4zM22 22h4v4h-4zM151 40h3v4h-3zM169 44h4v4h-4zM26 51h3v4h-3zM22 55h4v4h-4zM103 55h3v4h-3zM0 59h4v3h-4zM103 59h3v3h-3zM140 62h3v4h-3zM147 62h4v4h-4zM59 77h3v3h-3zM88 77h4v3h-4zM114 113h3v4h-3zM169 121h4v3h-4zM250 121h3v3h-3zM239 124h3v4h-3zM132 128h4v4h-4zM33 154h4v3h-4zM261 157h3v4h-3zM165 168h4v4h-4zM257 168h4v4h-4zM0 172h4v4h-4zM99 172h4v4h-4zM0 176h4v3h-4zM209 183h4v4h-4zM173 197h3v4h-3zM235 197h4v4h-4zM169 205h4v3h-4zM173 205h3v3h-3zM180 208h4v4h-4zM246 208h4v4h-4zM121 216h4v3h-4z"/><path fill="#241" d="M140 0h3v4h-3zM0 18h4v4h-4zM55 18h4v4h-4zM95 18h4v4h-4zM44 22h4v4h-4zM92 22h3v4h-3zM48 26h3v3h-3zM55 26h4v3h-4zM62 26h4v3h-4zM202 33h4v4h-4zM206 33h3v4h-3zM272 48h3v3h-3zM0 51h4v4h-4zM4 51h3v4h-3zM0 55h4v4h-4zM253 55h4v4h-4zM99 66h4v3h-4zM92 69h3v4h-3zM143 102h4v4h-4zM73 106h4v4h-4zM217 106h3v4h-3zM213 110h4v3h-4zM209 113h4v4h-4zM246 117h4v4h-4zM209 121h4v3h-4zM169 128h4v4h-4zM198 143h4v3h-4zM106 146h4v4h-4zM106 161h4v4h-4zM235 161h4v4h-4zM213 165h4v3h-4zM272 172h3v4h-3zM272 176h3v3h-3zM209 179h4v4h-4zM132 190h4v4h-4zM209 201h4v4h-4zM33 208h4v4h-4zM158 208h4v4h-4zM250 208h3v4h-3zM33 212h4v4h-4zM125 212h3v4h-3zM128 212h4v4h-4zM125 216h3v3h-3zM165 219h4v4h-4zM268 223h4v4h-4zM48 227h3v3h-3zM51 227h4v3h-4zM84 227h4v3h-4zM261 227h3v3h-3zM264 227h4v3h-4zM51 238h4v3h-4z"/><path fill="#110" d="M143 0h4v4h-4zM88 18h4v4h-4zM84 22h4v4h-4zM235 113h4v4h-4zM206 121h3v3h-3zM191 128h4v4h-4zM206 135h3v4h-3zM147 208h4v4h-4z"/><path fill="#120" d="M147 0h4v4h-4zM77 15h4v3h-4zM70 18h3v4h-3zM73 18h4v4h-4zM92 18h3v4h-3zM268 51h4v4h-4zM242 59h4v3h-4zM246 59h4v3h-4zM239 62h3v4h-3zM242 62h4v4h-4zM242 66h4v3h-4zM239 110h3v3h-3zM242 113h4v4h-4zM206 117h3v4h-3zM198 121h4v3h-4zM187 124h4v4h-4zM198 124h4v4h-4zM202 124h4v4h-4zM209 128h4v4h-4zM184 132h3v3h-3zM198 132h4v3h-4zM209 132h4v3h-4zM202 135h4v4h-4zM213 135h4v4h-4zM209 143h4v3h-4zM103 146h3v4h-3zM257 208h4v4h-4zM261 208h3v4h-3zM154 212h4v4h-4zM261 212h3v4h-3zM128 216h4v3h-4zM154 216h4v3h-4zM147 219h4v4h-4zM154 219h4v4h-4zM173 219h3v4h-3zM253 219h4v4h-4zM264 219h4v4h-4zM173 223h3v4h-3zM81 227h3v3h-3zM44 230h4v4h-4z"/><path fill="#010" d="M151 0h3v4h-3zM73 15h4v3h-4zM66 18h4v4h-4zM77 18h4v4h-4zM70 22h3v4h-3zM73 22h4v4h-4zM77 22h4v4h-4zM81 22h3v4h-3zM44 26h4v3h-4zM261 44h3v4h-3zM264 44h4v4h-4zM51 48h4v3h-4zM264 48h4v3h-4zM268 48h4v3h-4zM77 106h4v4h-4zM231 110h4v3h-4zM202 113h4v4h-4zM231 113h4v4h-4zM202 117h4v4h-4zM202 121h4v3h-4zM191 124h4v4h-4zM206 124h3v4h-3zM198 128h4v4h-4zM202 128h4v4h-4zM187 132h4v3h-4zM202 132h4v3h-4zM206 132h3v3h-3zM40 135h4v4h-4zM191 135h4v4h-4zM198 135h4v4h-4zM209 135h4v4h-4zM184 139h3v4h-3zM191 139h4v4h-4zM198 139h4v4h-4zM209 139h4v4h-4zM213 139h4v4h-4zM213 143h4v3h-4zM217 143h3v3h-3zM187 154h4v3h-4zM224 161h4v4h-4zM114 165h3v3h-3zM151 205h3v3h-3zM147 212h4v4h-4zM151 212h3v4h-3zM257 212h4v4h-4zM257 216h4v3h-4zM261 216h3v3h-3zM169 223h4v4h-4zM257 223h4v4h-4zM81 230h3v4h-3z"/><path fill="#130" d="M154 0h4v4h-4zM26 69h3v4h-3zM206 179h3v4h-3z"/><path fill="#351" d="M158 0h4v4h-4zM114 106h3v4h-3zM246 124h4v4h-4zM33 132h4v3h-4zM37 135h3v4h-3zM268 230h4v4h-4zM77 234h4v4h-4z"/><path fill="#372" d="M162 0h3v4h-3zM147 4h4v3h-4zM77 7h4v4h-4zM169 7h4v4h-4zM158 18h4v4h-4zM40 22h4v4h-4zM191 33h4v4h-4zM220 33h4v4h-4zM246 33h4v4h-4zM40 37h4v3h-4zM195 37h3v3h-3zM198 37h4v3h-4zM15 40h3v4h-3zM257 40h4v4h-4zM143 44h4v4h-4zM125 59h3v3h-3zM217 59h3v3h-3zM125 66h3v3h-3zM66 69h4v4h-4zM268 69h4v4h-4zM66 77h4v3h-4zM66 88h4v3h-4zM70 88h3v3h-3zM264 88h4v3h-4zM272 95h3v4h-3zM275 95h4v4h-4zM48 99h3v3h-3zM55 99h4v3h-4zM220 102h4v4h-4zM268 102h4v4h-4zM110 110h4v3h-4zM264 113h4v4h-4zM272 117h3v4h-3zM162 121h3v3h-3zM51 132h4v3h-4zM132 132h4v3h-4zM55 143h4v3h-4zM66 146h4v4h-4zM169 146h4v4h-4zM231 146h4v4h-4zM151 150h3v4h-3zM158 154h4v3h-4zM44 157h4v4h-4zM151 157h3v4h-3zM103 161h3v4h-3zM151 161h3v4h-3zM250 161h3v4h-3zM154 165h4v3h-4zM187 172h4v4h-4zM275 172h4v4h-4zM246 179h4v4h-4zM261 183h3v4h-3zM26 190h3v4h-3zM250 216h3v3h-3zM268 216h4v3h-4zM275 216h4v3h-4zM37 227h3v3h-3zM173 230h3v4h-3zM198 230h4v4h-4zM257 230h4v4h-4zM55 234h4v4h-4zM48 241h3v4h-3zM165 249h4v3h-4z"/><path fill="#381" d="M165 0h4v4h-4zM154 4h4v3h-4zM268 4h4v3h-4zM250 7h3v4h-3zM51 11h4v4h-4zM26 40h3v4h-3zM143 40h4v4h-4zM180 40h4v4h-4zM92 59h3v3h-3zM26 66h3v3h-3zM110 66h4v3h-4zM121 69h4v4h-4zM37 77h3v3h-3zM184 80h3v4h-3zM70 95h3v4h-3zM44 99h4v3h-4zM51 99h4v3h-4zM114 99h3v3h-3zM117 99h4v3h-4zM151 99h3v3h-3zM55 102h4v4h-4zM261 113h3v4h-3zM103 121h3v3h-3zM26 124h3v4h-3zM158 128h4v4h-4zM173 128h3v4h-3zM173 132h3v3h-3zM37 139h3v4h-3zM228 139h3v4h-3zM62 143h4v3h-4zM228 154h3v3h-3zM206 168h3v4h-3zM209 172h4v4h-4zM213 176h4v3h-4zM213 179h4v4h-4zM15 183h3v4h-3zM22 190h4v4h-4zM136 190h4v4h-4zM140 194h3v3h-3zM224 201h4v4h-4zM92 208h3v4h-3zM202 208h4v4h-4zM275 227h4v3h-4zM77 230h4v4h-4zM206 230h3v4h-3zM261 230h3v4h-3zM206 238h3v3h-3z"/><path fill="#492" d="M169 0h4v4h-4zM51 18h4v4h-4zM180 37h4v3h-4zM176 40h4v4h-4zM198 40h4v4h-4zM4 55h3v4h-3zM7 59h4v3h-4zM143 59h4v3h-4zM117 62h4v4h-4zM15 66h3v3h-3zM81 66h3v3h-3zM125 69h3v4h-3zM261 69h3v4h-3zM264 69h4v4h-4zM136 73h4v4h-4zM151 73h3v4h-3zM187 73h4v4h-4zM220 77h4v3h-4zM264 80h4v4h-4zM117 84h4v4h-4zM66 91h4v4h-4zM33 95h4v4h-4zM18 99h4v3h-4zM121 102h4v4h-4zM26 117h3v4h-3zM140 117h3v4h-3zM143 121h4v3h-4zM158 139h4v4h-4zM235 139h4v4h-4zM66 143h4v3h-4zM73 143h4v3h-4zM29 157h4v4h-4zM162 165h3v3h-3zM264 176h4v3h-4zM184 187h3v3h-3zM18 194h4v3h-4zM26 194h3v3h-3zM110 194h4v3h-4zM132 194h4v3h-4zM147 194h4v3h-4zM213 205h4v3h-4zM26 212h3v4h-3zM92 212h3v4h-3zM95 212h4v4h-4zM176 212h4v4h-4zM246 212h4v4h-4zM73 223h4v4h-4zM114 230h3v4h-3zM224 234h4v4h-4zM217 238h3v3h-3zM11 245h4v4h-4zM169 249h4v3h-4zM257 249h4v3h-4zM257 252h4v4h-4z"/><path fill="#4f5" d="M173 0h3v4h-3zM187 69h4v4h-4zM88 194h4v3h-4z"/><path fill="#6e6" d="M176 0h4v4h-4zM180 0h4v4h-4zM180 7h4v4h-4zM62 73h4v4h-4zM184 113h3v4h-3zM220 121h4v3h-4zM11 208h4v4h-4z"/><path fill="#6f7" d="M184 0h3v4h-3zM187 15h4v3h-4zM7 124h4v4h-4zM147 128h4v4h-4zM147 139h4v4h-4zM136 150h4v4h-4zM77 245h4v4h-4z"/><path fill="#6e3" d="M187 0h4v4h-4zM88 4h4v3h-4zM158 4h4v3h-4zM62 7h4v4h-4zM272 7h3v4h-3zM0 11h4v4h-4zM114 11h3v4h-3zM198 11h4v4h-4zM26 15h3v3h-3zM40 15h4v3h-4zM198 18h4v4h-4zM235 29h4v4h-4zM110 33h4v4h-4zM55 37h4v3h-4zM103 37h3v3h-3zM191 40h4v4h-4zM235 44h4v4h-4zM198 51h4v4h-4zM151 59h3v3h-3zM158 59h4v3h-4zM268 59h4v3h-4zM275 59h4v3h-4zM151 66h3v3h-3zM106 69h4v4h-4zM154 69h4v4h-4zM48 73h3v4h-3zM154 73h4v4h-4zM242 77h4v3h-4zM128 84h4v4h-4zM55 88h4v3h-4zM257 88h4v3h-4zM29 91h4v4h-4zM264 95h4v4h-4zM176 121h4v3h-4zM37 124h3v4h-3zM176 124h4v4h-4zM26 139h3v4h-3zM128 150h4v4h-4zM195 150h3v4h-3zM66 154h4v3h-4zM173 154h3v3h-3zM162 157h3v4h-3zM4 165h3v3h-3zM121 172h4v4h-4zM77 176h4v3h-4zM162 179h3v4h-3zM55 183h4v4h-4zM250 183h3v4h-3zM125 187h3v3h-3zM37 190h3v4h-3zM128 190h4v4h-4zM147 190h4v4h-4zM55 208h4v4h-4zM77 208h4v4h-4zM40 216h4v3h-4zM88 216h4v3h-4zM95 216h4v3h-4zM184 219h3v4h-3zM224 227h4v3h-4zM18 234h4v4h-4zM117 241h4v4h-4zM99 245h4v4h-4zM239 245h3v4h-3zM15 249h3v3h-3zM26 252h3v4h-3zM66 252h4v4h-4z"/><path fill="#be4" d="M195 0h3v4h-3zM125 4h3v3h-3zM33 7h4v4h-4zM37 7h3v4h-3zM217 7h3v4h-3zM29 11h4v4h-4zM206 15h3v3h-3zM162 26h3v3h-3zM66 37h4v3h-4zM73 40h4v4h-4zM132 48h4v3h-4zM187 88h4v3h-4zM235 88h4v3h-4zM136 91h4v4h-4zM33 106h4v4h-4zM40 113h4v4h-4zM110 117h4v4h-4zM239 135h3v4h-3zM7 154h4v3h-4zM92 157h3v4h-3zM29 165h4v3h-4zM173 168h3v4h-3zM198 168h4v4h-4zM95 176h4v3h-4zM136 176h4v3h-4zM128 179h4v4h-4zM84 183h4v4h-4zM239 183h3v4h-3zM162 190h3v4h-3zM154 194h4v3h-4zM15 201h3v4h-3zM110 238h4v3h-4z"/><path fill="#bf3" d="M202 0h4v4h-4zM29 4h4v3h-4zM128 4h4v3h-4zM206 4h3v3h-3zM217 4h3v3h-3zM11 11h4v4h-4zM15 11h3v4h-3zM125 11h3v4h-3zM162 11h3v4h-3zM125 18h3v4h-3zM169 18h4v4h-4zM147 29h4v4h-4zM26 33h3v4h-3zM62 37h4v3h-4zM147 37h4v3h-4zM224 40h4v4h-4zM33 48h4v3h-4zM33 51h4v4h-4zM128 51h4v4h-4zM29 59h4v3h-4zM18 73h4v4h-4zM250 80h3v4h-3zM18 88h4v3h-4zM261 135h3v4h-3zM264 135h4v4h-4zM22 150h4v4h-4zM88 165h4v3h-4zM169 168h4v4h-4zM33 183h4v4h-4zM81 183h3v4h-3zM140 187h3v3h-3zM77 205h4v3h-4zM48 208h3v4h-3zM62 216h4v3h-4zM62 230h4v4h-4zM158 238h4v3h-4zM195 241h3v4h-3zM209 252h4v4h-4z"/><path fill="#bf5" d="M206 0h3v4h-3zM143 7h4v4h-4zM235 7h4v4h-4zM213 11h4v4h-4zM15 15h3v3h-3zM169 15h4v3h-4zM209 22h4v4h-4zM272 22h3v4h-3zM187 26h4v3h-4zM257 26h4v3h-4zM224 29h4v4h-4zM29 48h4v3h-4zM114 51h3v4h-3zM121 51h4v4h-4zM187 51h4v4h-4zM202 66h4v3h-4zM125 77h3v3h-3zM176 99h4v3h-4zM184 99h3v3h-3zM106 135h4v4h-4zM132 139h4v4h-4zM26 146h3v4h-3zM48 150h3v4h-3zM250 150h3v4h-3zM11 154h4v3h-4zM77 154h4v3h-4zM195 161h3v4h-3zM198 161h4v4h-4zM246 168h4v4h-4zM132 176h4v3h-4zM235 179h4v4h-4zM77 183h4v4h-4zM228 183h3v4h-3zM228 219h3v4h-3zM66 234h4v4h-4zM191 241h4v4h-4zM220 245h4v4h-4zM228 252h3v4h-3z"/><path fill="#af6" d="M209 0h4v4h-4zM117 7h4v4h-4zM59 44h3v4h-3zM62 48h4v3h-4zM136 48h4v3h-4zM29 62h4v4h-4zM132 66h4v3h-4zM268 77h4v3h-4zM253 80h4v4h-4zM128 88h4v3h-4zM198 95h4v4h-4zM88 117h4v4h-4zM29 146h4v4h-4zM48 146h3v4h-3zM59 150h3v4h-3zM239 150h3v4h-3zM261 165h3v3h-3zM22 172h4v4h-4zM77 172h4v4h-4zM81 176h3v3h-3zM231 179h4v4h-4zM99 219h4v4h-4zM217 223h3v4h-3zM228 223h3v4h-3zM242 234h4v4h-4zM198 245h4v4h-4zM209 245h4v4h-4z"/><path fill="#ae4" d="M217 0h3v4h-3zM202 4h4v3h-4zM11 7h4v4h-4zM22 7h4v4h-4zM151 7h3v4h-3zM15 22h3v4h-3zM173 22h3v4h-3zM62 33h4v4h-4zM143 33h4v4h-4zM29 37h4v3h-4zM217 69h3v4h-3zM191 73h4v4h-4zM206 73h3v4h-3zM92 80h3v4h-3zM22 84h4v4h-4zM37 84h3v4h-3zM231 88h4v3h-4zM22 91h4v4h-4zM132 91h4v4h-4zM136 95h4v4h-4zM84 102h4v4h-4zM15 110h3v3h-3zM62 128h4v4h-4zM84 139h4v4h-4zM84 143h4v3h-4zM202 161h4v4h-4zM15 165h3v3h-3zM33 165h4v3h-4zM40 165h4v3h-4zM264 165h4v3h-4zM59 172h3v4h-3zM40 176h4v3h-4zM239 179h3v4h-3zM99 183h4v4h-4zM220 205h4v3h-4zM44 212h4v4h-4zM114 212h3v4h-3zM213 212h4v4h-4zM59 219h3v4h-3zM114 219h3v4h-3zM26 245h3v4h-3z"/><path fill="#282" d="M228 0h3v4h-3zM40 33h4v4h-4zM213 40h4v4h-4zM11 44h4v4h-4zM264 55h4v4h-4zM268 66h4v3h-4zM275 66h4v3h-4zM253 106h4v4h-4zM51 139h4v4h-4zM99 143h4v3h-4zM220 146h4v4h-4zM184 154h3v3h-3zM92 230h3v4h-3zM228 241h3v4h-3zM261 252h3v4h-3z"/><path fill="#be5" d="M235 0h4v4h-4zM114 4h3v3h-3zM117 4h4v3h-4zM22 29h4v4h-4zM143 29h4v4h-4zM40 44h4v4h-4zM125 48h3v3h-3zM128 77h4v3h-4zM92 102h3v4h-3zM26 110h3v3h-3zM173 113h3v4h-3zM268 135h4v4h-4zM55 168h4v4h-4zM11 172h4v4h-4zM165 187h4v3h-4zM209 219h4v4h-4zM213 227h4v3h-4zM158 234h4v4h-4zM66 241h4v4h-4z"/><path fill="#cf6" d="M246 0h4v4h-4zM220 7h4v4h-4zM213 15h4v3h-4zM261 139h3v4h-3zM40 150h4v4h-4zM11 176h4v3h-4zM147 176h4v3h-4zM147 179h4v4h-4zM44 205h4v3h-4z"/><path fill="#9f2" d="M250 0h3v4h-3zM154 7h4v4h-4zM173 15h3v3h-3zM180 22h4v4h-4zM59 40h3v4h-3zM55 44h4v4h-4zM62 44h4v4h-4zM187 84h4v4h-4zM66 179h4v4h-4zM77 179h4v4h-4zM165 201h4v4h-4zM106 238h4v3h-4zM59 241h3v4h-3z"/><path fill="#8f2" d="M257 0h4v4h-4zM55 4h4v3h-4zM125 15h3v3h-3zM228 29h3v4h-3zM235 33h4v4h-4zM235 48h4v3h-4zM84 66h4v3h-4zM29 73h4v4h-4zM59 80h3v4h-3zM191 80h4v4h-4zM191 84h4v4h-4zM261 99h3v3h-3zM40 110h4v3h-4zM136 124h4v4h-4zM250 132h3v3h-3zM224 135h4v4h-4zM228 135h3v4h-3zM272 135h3v4h-3zM29 139h4v4h-4zM165 154h4v3h-4zM206 157h3v4h-3zM0 168h4v4h-4zM95 172h4v4h-4zM198 172h4v4h-4zM169 190h4v4h-4zM169 194h4v3h-4zM176 194h4v3h-4zM165 205h4v3h-4zM250 205h3v3h-3zM198 223h4v4h-4zM22 241h4v4h-4z"/><path fill="#121" d="M264 0h4v4h-4zM84 11h4v4h-4zM81 15h3v3h-3zM62 18h4v4h-4zM59 22h3v4h-3zM62 22h4v4h-4zM66 22h4v4h-4zM257 48h4v3h-4zM261 48h3v3h-3zM261 51h3v4h-3zM239 59h3v3h-3zM246 62h4v4h-4zM239 66h3v3h-3zM70 99h3v3h-3zM228 106h3v4h-3zM228 110h3v3h-3zM235 110h4v3h-4zM228 113h3v4h-3zM195 121h3v3h-3zM195 128h3v4h-3zM206 128h3v4h-3zM195 132h3v3h-3zM173 139h3v4h-3zM187 139h4v4h-4zM224 165h4v3h-4zM151 208h3v4h-3zM253 216h4v3h-4zM261 219h3v4h-3zM261 223h3v4h-3zM169 227h4v3h-4zM173 227h3v3h-3zM48 234h3v4h-3z"/><path fill="#251" d="M268 0h4v4h-4zM84 7h4v4h-4zM106 11h4v4h-4zM62 15h4v3h-4zM73 26h4v3h-4zM77 26h4v3h-4zM44 29h4v4h-4zM48 29h3v4h-3zM51 29h4v4h-4zM202 29h4v4h-4zM246 40h4v4h-4zM261 40h3v4h-3zM253 44h4v4h-4zM250 55h3v4h-3zM250 59h3v3h-3zM253 59h4v3h-4zM92 62h3v4h-3zM95 62h4v4h-4zM235 62h4v4h-4zM92 66h3v3h-3zM235 66h4v3h-4zM95 69h4v4h-4zM73 102h4v4h-4zM213 102h4v4h-4zM70 106h3v4h-3zM239 106h3v4h-3zM242 106h4v4h-4zM202 110h4v3h-4zM242 110h4v3h-4zM264 110h4v3h-4zM213 113h4v4h-4zM209 117h4v4h-4zM235 117h4v4h-4zM187 121h4v3h-4zM213 121h4v3h-4zM162 128h3v4h-3zM165 128h4v4h-4zM213 128h4v4h-4zM169 132h4v3h-4zM213 132h4v3h-4zM51 135h4v4h-4zM169 135h4v4h-4zM176 135h4v4h-4zM217 135h3v4h-3zM165 139h4v4h-4zM169 139h4v4h-4zM217 139h3v4h-3zM220 139h4v4h-4zM165 143h4v3h-4zM191 143h4v3h-4zM220 143h4v3h-4zM114 146h3v4h-3zM103 154h3v3h-3zM106 157h4v4h-4zM228 157h3v4h-3zM231 157h4v4h-4zM235 157h4v4h-4zM110 161h4v4h-4zM217 161h3v4h-3zM143 165h4v3h-4zM246 165h4v3h-4zM158 168h4v4h-4zM213 168h4v4h-4zM220 168h4v4h-4zM202 179h4v4h-4zM268 179h4v4h-4zM261 194h3v3h-3zM132 201h4v4h-4zM264 201h4v4h-4zM128 205h4v3h-4zM264 205h4v3h-4zM275 205h4v3h-4zM37 208h3v4h-3zM132 208h4v4h-4zM140 208h3v4h-3zM162 212h3v4h-3zM165 216h4v3h-4zM268 219h4v4h-4zM275 219h4v4h-4zM48 223h3v4h-3zM165 223h4v4h-4zM264 223h4v4h-4zM40 227h4v3h-4zM44 227h4v3h-4zM268 227h4v3h-4zM51 230h4v4h-4zM37 234h3v4h-3zM209 234h4v4h-4zM209 238h4v3h-4zM213 238h4v3h-4zM272 241h3v4h-3zM272 245h3v4h-3zM7 252h4v4h-4z"/><path fill="#4b2" d="M272 0h3v4h-3zM140 4h3v3h-3zM173 7h3v4h-3zM250 11h3v4h-3zM48 18h3v4h-3zM202 18h4v4h-4zM147 22h4v4h-4zM95 33h4v4h-4zM180 33h4v4h-4zM18 40h4v4h-4zM158 44h4v4h-4zM206 55h3v4h-3zM209 55h4v4h-4zM272 55h3v4h-3zM40 73h4v4h-4zM114 73h3v4h-3zM73 84h4v4h-4zM81 88h3v3h-3zM59 99h3v3h-3zM195 110h3v3h-3zM253 113h4v4h-4zM15 121h3v3h-3zM29 121h4v3h-4zM228 124h3v4h-3zM37 128h3v4h-3zM128 128h4v4h-4zM275 128h4v4h-4zM55 135h4v4h-4zM7 139h4v4h-4zM125 139h3v4h-3zM128 139h4v4h-4zM48 143h3v3h-3zM51 143h4v3h-4zM147 143h4v3h-4zM0 146h4v4h-4zM187 146h4v4h-4zM106 150h4v4h-4zM165 150h4v4h-4zM29 154h4v3h-4zM125 154h3v3h-3zM191 154h4v3h-4zM15 176h3v3h-3zM55 179h4v4h-4zM184 194h3v3h-3zM224 194h4v3h-4zM224 197h4v4h-4zM253 205h4v3h-4zM18 208h4v4h-4zM59 208h3v4h-3zM268 208h4v4h-4zM202 212h4v4h-4zM48 216h3v3h-3zM0 219h4v4h-4zM198 234h4v4h-4zM59 238h3v3h-3zM92 241h3v4h-3zM253 241h4v4h-4zM202 245h4v4h-4zM11 252h4v4h-4z"/><path fill="#8f5" d="M4 4h3v3h-3zM62 4h4v3h-4zM136 4h4v3h-4zM239 4h3v3h-3zM99 7h4v4h-4zM224 11h4v4h-4zM22 15h4v3h-4zM246 18h4v4h-4zM37 22h3v4h-3zM253 22h4v4h-4zM117 26h4v3h-4zM125 26h3v3h-3zM253 26h4v3h-4zM136 33h4v4h-4zM7 37h4v3h-4zM136 40h4v4h-4zM84 55h4v4h-4zM162 62h3v4h-3zM191 62h4v4h-4zM253 73h4v4h-4zM26 77h3v3h-3zM15 80h3v4h-3zM110 84h4v4h-4zM151 84h3v4h-3zM220 84h4v4h-4zM246 84h4v4h-4zM106 91h4v4h-4zM231 95h4v4h-4zM33 102h4v4h-4zM154 117h4v4h-4zM4 124h3v4h-3zM117 132h4v3h-4zM147 132h4v3h-4zM264 132h4v3h-4zM62 135h4v4h-4zM132 143h4v3h-4zM132 146h4v4h-4zM261 146h3v4h-3zM268 150h4v4h-4zM84 154h4v3h-4zM206 154h3v3h-3zM246 154h4v3h-4zM176 161h4v4h-4zM275 161h4v4h-4zM0 165h4v3h-4zM62 165h4v3h-4zM11 168h4v4h-4zM44 172h4v4h-4zM128 172h4v4h-4zM136 172h4v4h-4zM151 179h3v4h-3zM73 183h4v4h-4zM231 183h4v4h-4zM114 187h3v3h-3zM253 190h4v4h-4zM59 194h3v3h-3zM151 194h3v3h-3zM246 194h4v3h-4zM18 197h4v4h-4zM110 201h4v4h-4zM7 205h4v3h-4zM4 223h3v4h-3zM246 227h4v3h-4zM0 230h4v4h-4zM231 230h4v4h-4zM0 234h4v4h-4zM147 234h4v4h-4zM250 238h3v3h-3zM213 241h4v4h-4z"/><path fill="#7f5" d="M7 4h4v3h-4zM136 15h4v3h-4zM198 15h4v3h-4zM117 18h4v4h-4zM151 22h3v4h-3zM176 26h4v3h-4zM228 33h3v4h-3zM84 37h4v3h-4zM81 40h3v4h-3zM99 44h4v4h-4zM191 55h4v4h-4zM77 59h4v3h-4zM110 59h4v3h-4zM187 59h4v3h-4zM195 59h3v3h-3zM209 62h4v4h-4zM29 69h4v4h-4zM257 73h4v4h-4zM110 80h4v4h-4zM44 84h4v4h-4zM4 88h3v3h-3zM165 88h4v3h-4zM213 88h4v3h-4zM114 91h3v4h-3zM209 91h4v4h-4zM239 99h3v3h-3zM81 102h3v4h-3zM202 102h4v4h-4zM125 113h3v4h-3zM7 117h4v4h-4zM55 124h4v4h-4zM125 124h3v4h-3zM224 124h4v4h-4zM272 124h3v4h-3zM59 128h3v4h-3zM264 128h4v4h-4zM4 139h3v4h-3zM140 143h3v3h-3zM140 146h3v4h-3zM250 146h3v4h-3zM4 150h3v4h-3zM191 157h4v4h-4zM272 161h3v4h-3zM77 168h4v4h-4zM125 172h3v4h-3zM114 179h3v4h-3zM253 183h4v4h-4zM184 197h3v4h-3zM121 201h4v4h-4zM191 208h4v4h-4zM198 208h4v4h-4zM73 212h4v4h-4zM7 219h4v4h-4zM117 219h4v4h-4zM235 219h4v4h-4zM22 230h4v4h-4zM70 230h3v4h-3zM143 234h4v4h-4zM81 241h3v4h-3zM143 241h4v4h-4zM261 241h3v4h-3zM121 249h4v3h-4zM4 252h3v4h-3zM220 252h4v4h-4z"/><path fill="#7f4" d="M15 4h3v3h-3zM92 4h3v3h-3zM103 7h3v4h-3zM187 7h4v4h-4zM136 11h4v4h-4zM272 11h3v4h-3zM195 18h3v4h-3zM250 18h3v4h-3zM114 22h3v4h-3zM198 26h4v3h-4zM0 29h4v4h-4zM7 29h4v4h-4zM92 29h3v4h-3zM37 40h3v4h-3zM217 48h3v3h-3zM184 51h3v4h-3zM99 55h4v4h-4zM184 55h3v4h-3zM62 62h4v4h-4zM81 62h3v4h-3zM213 66h4v3h-4zM253 66h4v3h-4zM176 73h4v4h-4zM228 73h3v4h-3zM48 77h3v3h-3zM99 77h4v3h-4zM51 80h4v4h-4zM88 80h4v4h-4zM235 80h4v4h-4zM147 84h4v4h-4zM195 84h3v4h-3zM37 88h3v3h-3zM99 88h4v3h-4zM136 88h4v3h-4zM44 91h4v4h-4zM99 99h4v3h-4zM158 99h4v3h-4zM7 102h4v4h-4zM103 102h3v4h-3zM7 106h4v4h-4zM147 106h4v4h-4zM162 106h3v4h-3zM125 110h3v3h-3zM26 113h3v4h-3zM110 113h4v4h-4zM125 117h3v4h-3zM132 117h4v4h-4zM88 121h4v3h-4zM95 124h4v4h-4zM0 128h4v4h-4zM4 132h3v3h-3zM140 132h3v3h-3zM154 135h4v4h-4zM151 139h3v4h-3zM128 143h4v3h-4zM136 143h4v3h-4zM136 146h4v4h-4zM132 150h4v4h-4zM209 150h4v4h-4zM213 150h4v4h-4zM4 154h3v3h-3zM176 154h4v3h-4zM62 157h4v4h-4zM26 165h3v3h-3zM48 172h3v4h-3zM55 172h4v4h-4zM121 176h4v3h-4zM0 179h4v4h-4zM103 179h3v4h-3zM165 183h4v4h-4zM191 183h4v4h-4zM0 187h4v3h-4zM48 187h3v3h-3zM191 187h4v3h-4zM231 187h4v3h-4zM239 187h3v3h-3zM250 187h3v3h-3zM106 190h4v4h-4zM95 194h4v3h-4zM106 194h4v3h-4zM209 194h4v3h-4zM4 197h3v4h-3zM11 205h4v3h-4zM66 205h4v3h-4zM7 212h4v4h-4zM103 219h3v4h-3zM99 223h4v4h-4zM110 223h4v4h-4zM246 223h4v4h-4zM99 227h4v3h-4zM4 230h3v4h-3zM158 230h4v4h-4zM162 230h3v4h-3zM191 234h4v4h-4zM18 238h4v3h-4zM143 238h4v3h-4zM180 238h4v3h-4zM198 241h4v4h-4zM224 245h4v4h-4zM136 249h4v3h-4zM88 252h4v4h-4zM217 252h3v4h-3z"/><path fill="#5f2" d="M18 4h4v3h-4zM224 4h4v3h-4zM99 11h4v4h-4zM242 11h4v4h-4zM176 15h4v3h-4zM40 18h4v4h-4zM99 26h4v3h-4zM158 29h4v4h-4zM180 29h4v4h-4zM250 29h3v4h-3zM92 40h3v4h-3zM202 51h4v4h-4zM231 51h4v4h-4zM132 69h4v4h-4zM125 84h3v4h-3zM169 84h4v4h-4zM121 88h4v3h-4zM33 91h4v4h-4zM37 95h3v4h-3zM257 102h4v4h-4zM220 128h4v4h-4zM26 132h3v3h-3zM81 132h3v3h-3zM162 132h3v3h-3zM136 135h4v4h-4zM15 139h3v4h-3zM51 187h4v3h-4zM180 187h4v3h-4zM169 197h4v4h-4zM180 197h4v4h-4zM59 205h3v3h-3z"/><path fill="#7e3" d="M26 4h3v3h-3zM73 4h4v3h-4zM114 7h3v4h-3zM136 7h4v4h-4zM264 7h4v4h-4zM0 15h4v3h-4zM4 15h3v3h-3zM37 18h3v4h-3zM206 18h3v4h-3zM228 18h3v4h-3zM0 22h4v4h-4zM246 26h4v3h-4zM84 29h4v4h-4zM59 33h3v4h-3zM231 33h4v4h-4zM88 40h4v4h-4zM88 44h4v4h-4zM18 51h4v4h-4zM4 66h3v3h-3zM213 73h4v4h-4zM92 77h3v3h-3zM121 77h4v3h-4zM165 84h4v4h-4zM29 88h4v3h-4zM37 99h3v3h-3zM18 106h4v4h-4zM4 110h3v3h-3zM147 110h4v3h-4zM4 113h3v4h-3zM59 121h3v3h-3zM136 128h4v4h-4zM231 132h4v3h-4zM70 154h3v3h-3zM128 154h4v3h-4zM4 157h3v4h-3zM268 157h4v4h-4zM22 161h4v4h-4zM26 161h3v4h-3zM51 161h4v4h-4zM95 165h4v3h-4zM235 168h4v4h-4zM264 168h4v4h-4zM224 172h4v4h-4zM4 176h3v3h-3zM22 176h4v3h-4zM70 176h3v3h-3zM29 179h4v4h-4zM33 179h4v4h-4zM4 187h3v3h-3zM187 194h4v3h-4zM44 216h4v3h-4zM239 219h3v4h-3zM231 227h4v3h-4zM224 230h4v4h-4zM162 234h3v4h-3zM18 241h4v4h-4zM33 241h4v4h-4zM37 241h3v4h-3zM128 241h4v4h-4zM198 249h4v3h-4z"/><path fill="#cf3" d="M33 4h4v3h-4zM239 7h3v4h-3zM128 15h4v3h-4zM136 22h4v4h-4zM154 29h4v4h-4zM264 29h4v4h-4zM22 33h4v4h-4zM151 33h3v4h-3zM62 40h4v4h-4zM125 91h3v4h-3zM51 110h4v3h-4zM33 113h4v4h-4zM70 132h3v3h-3zM73 132h4v3h-4zM257 135h4v4h-4zM33 146h4v4h-4zM88 154h4v3h-4zM136 179h4v4h-4zM206 187h3v3h-3zM44 190h4v4h-4zM246 197h4v4h-4zM40 201h4v4h-4zM48 201h3v4h-3zM48 205h3v3h-3z"/><path fill="#be6" d="M37 4h3v3h-3zM224 48h4v3h-4zM62 59h4v3h-4zM48 117h3v4h-3zM51 168h4v4h-4zM154 190h4v4h-4zM29 219h4v4h-4zM206 219h3v4h-3zM213 249h4v3h-4zM206 252h3v4h-3z"/><path fill="#ce5" d="M40 4h4v3h-4zM29 44h4v4h-4zM29 110h4v3h-4zM55 110h4v3h-4zM73 135h4v4h-4zM202 216h4v3h-4zM220 219h4v4h-4z"/><path fill="#6f3" d="M44 4h4v3h-4zM103 4h3v3h-3zM184 11h3v4h-3zM257 11h4v4h-4zM242 15h4v3h-4zM7 22h4v4h-4zM162 22h3v4h-3zM4 26h3v3h-3zM106 26h4v3h-4zM165 26h4v3h-4zM264 26h4v3h-4zM268 26h4v3h-4zM4 29h3v4h-3zM103 29h3v4h-3zM103 33h3v4h-3zM184 33h3v4h-3zM15 37h3v3h-3zM18 37h4v3h-4zM92 37h3v3h-3zM257 37h4v3h-4zM268 37h4v3h-4zM272 37h3v3h-3zM95 40h4v4h-4zM195 40h3v4h-3zM48 44h3v4h-3zM92 44h3v4h-3zM220 55h4v4h-4zM48 62h3v4h-3zM165 62h4v4h-4zM228 62h3v4h-3zM48 66h3v3h-3zM62 66h4v3h-4zM147 66h4v3h-4zM231 66h4v3h-4zM44 69h4v4h-4zM99 69h4v4h-4zM106 73h4v4h-4zM147 73h4v4h-4zM117 77h4v3h-4zM213 77h4v3h-4zM128 80h4v4h-4zM84 88h4v3h-4zM140 88h3v3h-3zM173 91h3v4h-3zM59 95h3v4h-3zM143 95h4v4h-4zM103 99h3v3h-3zM198 102h4v4h-4zM59 110h3v3h-3zM217 117h3v4h-3zM106 121h4v3h-4zM261 121h3v3h-3zM264 121h4v3h-4zM40 128h4v4h-4zM99 132h4v3h-4zM136 132h4v3h-4zM158 132h4v3h-4zM224 132h4v3h-4zM140 135h3v4h-3zM73 150h4v4h-4zM95 150h4v4h-4zM169 150h4v4h-4zM180 150h4v4h-4zM95 154h4v3h-4zM140 154h3v3h-3zM272 154h3v3h-3zM95 161h4v4h-4zM191 165h4v3h-4zM180 168h4v4h-4zM231 168h4v4h-4zM268 168h4v4h-4zM246 172h4v4h-4zM29 176h4v3h-4zM4 179h3v4h-3zM44 179h4v4h-4zM180 179h4v4h-4zM44 183h4v4h-4zM180 183h4v4h-4zM62 187h4v3h-4zM228 187h3v3h-3zM275 187h4v3h-4zM4 190h3v4h-3zM125 190h3v4h-3zM206 194h3v3h-3zM88 197h4v4h-4zM253 197h4v4h-4zM272 197h3v4h-3zM62 201h4v4h-4zM66 201h4v4h-4zM154 201h4v4h-4zM18 205h4v3h-4zM22 205h4v3h-4zM62 205h4v3h-4zM4 208h3v4h-3zM73 208h4v4h-4zM84 208h4v4h-4zM106 223h4v4h-4zM180 234h4v4h-4zM253 234h4v4h-4zM132 238h4v3h-4zM198 238h4v3h-4zM4 241h3v4h-3zM18 245h4v4h-4zM140 245h3v4h-3zM44 249h4v3h-4zM62 249h4v3h-4zM132 249h4v3h-4zM15 252h3v4h-3z"/><path fill="#cf8" d="M48 4h3v3h-3zM132 40h4v4h-4zM231 252h4v4h-4z"/><path fill="#ef8" d="M51 4h4v3h-4z"/><path fill="#ef7" d="M59 4h3v3h-3zM95 183h4v4h-4z"/><path fill="#9f5" d="M66 4h4v3h-4zM231 4h4v3h-4zM202 7h4v4h-4zM37 11h3v4h-3zM117 11h4v4h-4zM11 15h4v3h-4zM228 15h3v3h-3zM29 18h4v4h-4zM184 18h3v4h-3zM33 26h4v3h-4zM140 26h3v3h-3zM151 26h3v3h-3zM220 26h4v3h-4zM110 29h4v4h-4zM275 29h4v4h-4zM121 33h4v4h-4zM44 44h4v4h-4zM77 48h4v3h-4zM140 51h3v4h-3zM220 51h4v4h-4zM117 55h4v4h-4zM66 59h4v3h-4zM224 66h4v3h-4zM165 69h4v4h-4zM169 69h4v4h-4zM224 69h4v4h-4zM158 73h4v4h-4zM18 77h4v3h-4zM158 77h4v3h-4zM22 80h4v4h-4zM103 80h3v4h-3zM235 84h4v4h-4zM11 88h4v3h-4zM239 88h3v3h-3zM242 88h4v3h-4zM88 91h4v4h-4zM176 91h4v4h-4zM202 95h4v4h-4zM136 99h4v3h-4zM169 99h4v3h-4zM180 99h4v3h-4zM26 106h3v4h-3zM128 106h4v4h-4zM22 110h4v3h-4zM173 121h3v3h-3zM51 124h4v4h-4zM114 128h3v4h-3zM257 143h4v3h-4zM195 154h3v3h-3zM242 154h4v3h-4zM66 161h4v4h-4zM81 161h3v4h-3zM73 172h4v4h-4zM40 183h4v4h-4zM117 190h4v4h-4zM99 194h4v3h-4zM103 197h3v4h-3zM198 197h4v4h-4zM7 201h4v4h-4zM103 201h3v4h-3zM114 208h3v4h-3zM220 208h4v4h-4zM187 212h4v4h-4zM114 216h3v3h-3zM195 216h3v3h-3zM224 216h4v3h-4zM246 219h4v4h-4zM242 230h4v4h-4zM246 230h4v4h-4zM114 245h3v4h-3zM106 252h4v4h-4z"/><path fill="#5d2" d="M77 4h4v3h-4zM173 11h3v4h-3zM169 37h4v3h-4zM264 37h4v3h-4zM143 51h4v4h-4zM132 59h4v3h-4zM18 62h4v4h-4zM88 62h4v4h-4zM106 62h4v4h-4zM143 73h4v4h-4zM246 77h4v3h-4zM59 106h3v4h-3zM11 113h4v4h-4zM121 117h4v4h-4zM246 128h4v4h-4zM44 154h4v3h-4zM162 154h3v3h-3zM242 165h4v3h-4zM253 172h4v4h-4zM55 176h4v3h-4zM275 179h4v4h-4zM77 197h4v4h-4zM18 212h4v4h-4zM268 212h4v4h-4zM132 227h4v3h-4zM110 230h4v4h-4zM195 230h3v4h-3zM209 241h4v4h-4zM143 245h4v4h-4zM176 245h4v4h-4z"/><path fill="#4d3" d="M81 4h3v3h-3zM257 7h4v4h-4zM55 11h4v4h-4zM158 48h4v3h-4zM173 62h3v4h-3zM62 91h4v4h-4zM103 106h3v4h-3zM143 106h4v4h-4zM217 121h3v3h-3zM228 121h3v3h-3zM95 132h4v3h-4zM106 183h4v4h-4zM73 190h4v4h-4zM70 208h3v4h-3zM88 219h4v4h-4zM140 219h3v4h-3zM231 234h4v4h-4zM15 238h3v3h-3zM231 238h4v3h-4zM173 241h3v4h-3zM257 245h4v4h-4zM176 252h4v4h-4z"/><path fill="#4b3" d="M106 4h4v3h-4zM147 40h4v4h-4zM187 40h4v4h-4zM143 48h4v3h-4zM206 51h3v4h-3zM246 69h4v4h-4zM40 77h4v3h-4zM81 77h3v3h-3zM257 106h4v4h-4zM191 113h4v4h-4zM231 139h4v4h-4zM147 150h4v4h-4zM224 150h4v4h-4zM184 179h3v4h-3zM195 179h3v4h-3zM184 190h3v4h-3zM176 208h4v4h-4zM117 212h4v4h-4zM84 216h4v3h-4zM18 219h4v4h-4zM70 227h3v3h-3zM11 230h4v4h-4zM180 230h4v4h-4z"/><path fill="#4a2" d="M143 4h4v3h-4zM253 7h4v4h-4zM268 7h4v4h-4zM48 15h3v3h-3zM51 15h4v3h-4zM95 15h4v3h-4zM106 15h4v3h-4zM103 18h3v4h-3zM143 18h4v4h-4zM206 22h3v4h-3zM272 26h3v3h-3zM213 29h4v4h-4zM191 37h4v3h-4zM217 37h3v3h-3zM7 40h4v4h-4zM184 40h3v4h-3zM147 48h4v3h-4zM143 55h4v4h-4zM206 59h3v3h-3zM209 59h4v3h-4zM15 62h3v4h-3zM253 62h4v4h-4zM117 66h4v3h-4zM121 66h4v3h-4zM95 73h4v4h-4zM132 73h4v4h-4zM184 73h3v4h-3zM77 77h4v3h-4zM70 80h3v4h-3zM117 80h4v4h-4zM143 80h4v4h-4zM0 84h4v4h-4zM121 84h4v4h-4zM73 88h4v3h-4zM77 88h4v3h-4zM114 95h3v4h-3zM220 99h4v3h-4zM18 102h4v4h-4zM59 102h3v4h-3zM117 102h4v4h-4zM239 102h3v4h-3zM117 106h4v4h-4zM246 106h4v4h-4zM95 110h4v3h-4zM250 113h3v4h-3zM158 117h4v4h-4zM18 121h4v3h-4zM22 124h4v4h-4zM231 124h4v4h-4zM18 132h4v3h-4zM22 132h4v3h-4zM29 132h4v3h-4zM125 143h3v3h-3zM209 146h4v4h-4zM191 150h4v4h-4zM224 154h4v3h-4zM231 154h4v3h-4zM143 161h4v4h-4zM184 165h3v3h-3zM187 168h4v4h-4zM206 172h3v4h-3zM268 172h4v4h-4zM242 179h4v4h-4zM18 183h4v4h-4zM22 183h4v4h-4zM29 187h4v3h-4zM18 190h4v4h-4zM257 201h4v4h-4zM268 205h4v3h-4zM272 205h3v3h-3zM136 208h4v4h-4zM209 208h4v4h-4zM136 212h4v4h-4zM92 216h3v3h-3zM176 216h4v3h-4zM44 219h4v4h-4zM92 219h3v4h-3zM147 223h4v4h-4zM99 230h4v4h-4zM121 230h4v4h-4zM176 230h4v4h-4zM228 234h3v4h-3zM117 238h4v3h-4zM187 238h4v3h-4zM228 238h3v3h-3zM206 241h3v4h-3zM169 245h4v4h-4zM228 245h3v4h-3zM147 249h4v3h-4zM132 252h4v4h-4zM169 252h4v4h-4z"/><path fill="#481" d="M151 4h3v3h-3zM147 44h4v4h-4zM151 44h3v4h-3zM103 62h3v4h-3zM88 66h4v3h-4zM77 69h4v4h-4zM73 80h4v4h-4zM59 88h3v3h-3zM62 99h4v3h-4zM44 102h4v4h-4zM114 110h3v3h-3zM37 132h3v3h-3zM154 143h4v3h-4zM158 146h4v4h-4zM220 172h4v4h-4zM26 183h3v4h-3zM37 205h3v3h-3zM114 227h3v3h-3zM198 227h4v3h-4zM59 234h3v4h-3zM95 234h4v4h-4zM272 234h3v4h-3zM99 238h4v3h-4z"/><path fill="#391" d="M165 4h4v3h-4zM154 15h4v3h-4zM48 51h3v4h-3zM114 62h3v4h-3zM73 66h4v3h-4zM173 84h3v4h-3zM0 99h4v3h-4zM151 102h3v4h-3zM106 106h4v4h-4zM29 135h4v4h-4zM40 139h4v4h-4zM151 146h3v4h-3zM162 146h3v4h-3zM257 161h4v4h-4zM250 165h3v3h-3zM59 176h3v3h-3zM184 176h3v3h-3zM22 208h4v4h-4zM173 216h3v3h-3zM51 219h4v4h-4z"/><path fill="#382" d="M169 4h4v3h-4zM73 7h4v4h-4zM66 11h4v4h-4zM92 11h3v4h-3zM253 11h4v4h-4zM44 18h4v4h-4zM202 26h4v3h-4zM231 29h4v4h-4zM51 37h4v3h-4zM202 37h4v3h-4zM213 37h4v3h-4zM202 40h4v4h-4zM206 40h3v4h-3zM250 40h3v4h-3zM180 44h4v4h-4zM209 44h4v4h-4zM250 44h3v4h-3zM239 51h3v4h-3zM246 51h4v4h-4zM128 59h4v3h-4zM169 59h4v3h-4zM261 66h3v3h-3zM117 69h4v4h-4zM275 69h4v4h-4zM62 77h4v3h-4zM70 77h3v3h-3zM84 77h4v3h-4zM0 80h4v4h-4zM136 80h4v4h-4zM261 84h3v4h-3zM77 91h4v4h-4zM261 91h3v4h-3zM77 95h4v4h-4zM121 99h4v3h-4zM209 99h4v3h-4zM224 102h4v4h-4zM264 102h4v4h-4zM66 110h4v3h-4zM206 110h3v3h-3zM261 110h3v3h-3zM106 113h4v4h-4zM22 117h4v4h-4zM268 117h4v4h-4zM26 121h3v3h-3zM158 121h4v3h-4zM169 124h4v4h-4zM184 124h3v4h-3zM99 128h4v4h-4zM180 128h4v4h-4zM95 135h4v4h-4zM44 139h4v4h-4zM110 143h4v3h-4zM158 143h4v3h-4zM231 143h4v3h-4zM117 146h4v4h-4zM165 146h4v4h-4zM99 150h4v4h-4zM121 150h4v4h-4zM114 154h3v3h-3zM121 154h4v3h-4zM147 154h4v3h-4zM99 157h4v4h-4zM143 157h4v4h-4zM187 157h4v4h-4zM40 161h4v4h-4zM99 161h4v4h-4zM147 161h4v4h-4zM239 161h3v4h-3zM246 161h4v4h-4zM235 165h4v3h-4zM106 168h4v4h-4zM162 168h3v4h-3zM114 172h3v4h-3zM162 172h3v4h-3zM184 172h3v4h-3zM158 176h4v3h-4zM180 176h4v3h-4zM242 176h4v3h-4zM275 176h4v3h-4zM261 187h3v3h-3zM231 190h4v4h-4zM264 190h4v4h-4zM228 194h3v3h-3zM231 197h4v4h-4zM140 201h3v4h-3zM151 201h3v4h-3zM268 201h4v4h-4zM81 216h3v3h-3zM44 223h4v4h-4zM95 223h4v4h-4zM132 223h4v4h-4zM33 227h4v3h-4zM128 227h4v3h-4zM206 227h3v3h-3zM95 230h4v4h-4zM202 230h4v4h-4zM272 230h3v4h-3zM84 234h4v4h-4zM169 241h4v4h-4zM48 245h3v4h-3zM173 245h3v4h-3zM231 245h4v4h-4zM268 245h4v4h-4zM11 249h4v3h-4zM33 252h4v4h-4zM246 252h4v4h-4z"/><path fill="#8f8" d="M180 4h4v3h-4zM173 99h3v3h-3zM176 106h4v4h-4z"/><path fill="#8f4" d="M187 4h4v3h-4zM162 7h3v4h-3zM184 7h3v4h-3zM231 15h4v3h-4zM275 15h4v3h-4zM11 18h4v4h-4zM128 18h4v4h-4zM198 22h4v4h-4zM224 22h4v4h-4zM37 26h3v3h-3zM114 26h3v3h-3zM18 29h4v4h-4zM125 29h3v4h-3zM151 29h3v4h-3zM220 29h4v4h-4zM117 33h4v4h-4zM0 37h4v3h-4zM37 37h3v3h-3zM84 40h4v4h-4zM99 48h4v3h-4zM220 48h4v3h-4zM110 51h4v4h-4zM132 51h4v4h-4zM169 51h4v4h-4zM143 66h4v3h-4zM136 69h4v4h-4zM143 69h4v4h-4zM158 69h4v4h-4zM231 73h4v4h-4zM268 73h4v4h-4zM11 77h4v3h-4zM198 77h4v3h-4zM228 77h3v3h-3zM239 77h3v3h-3zM261 77h3v3h-3zM48 80h3v4h-3zM162 80h3v4h-3zM246 80h4v4h-4zM257 80h4v4h-4zM7 84h4v4h-4zM18 84h4v4h-4zM224 84h4v4h-4zM110 88h4v3h-4zM132 88h4v3h-4zM217 88h3v3h-3zM26 91h3v4h-3zM220 95h4v4h-4zM239 95h3v4h-3zM242 95h4v4h-4zM242 99h4v3h-4zM37 102h3v4h-3zM132 106h4v4h-4zM187 106h4v4h-4zM62 113h4v4h-4zM176 113h4v4h-4zM81 117h3v4h-3zM165 117h4v4h-4zM40 121h4v3h-4zM55 128h4v4h-4zM114 132h3v3h-3zM4 135h3v4h-3zM151 135h3v4h-3zM81 146h3v4h-3zM264 150h4v4h-4zM22 154h4v3h-4zM132 154h4v3h-4zM202 154h4v3h-4zM239 154h3v3h-3zM70 157h3v4h-3zM140 157h3v4h-3zM195 157h3v4h-3zM84 161h4v4h-4zM268 161h4v4h-4zM51 165h4v3h-4zM66 165h4v3h-4zM4 168h3v4h-3zM48 168h3v4h-3zM62 168h4v4h-4zM4 172h3v4h-3zM18 172h4v4h-4zM84 172h4v4h-4zM132 172h4v4h-4zM228 172h3v4h-3zM154 176h4v3h-4zM173 176h3v3h-3zM228 179h3v4h-3zM261 179h3v4h-3zM110 183h4v4h-4zM121 183h4v4h-4zM220 183h4v4h-4zM158 187h4v3h-4zM95 190h4v4h-4zM242 194h4v3h-4zM77 201h4v4h-4zM106 201h4v4h-4zM250 201h3v4h-3zM4 205h3v3h-3zM88 208h4v4h-4zM239 208h3v4h-3zM187 216h4v3h-4zM187 219h4v4h-4zM18 223h4v4h-4zM117 223h4v4h-4zM231 223h4v4h-4zM239 227h3v3h-3zM18 230h4v4h-4zM4 234h3v4h-3zM22 234h4v4h-4zM22 238h4v3h-4zM140 238h3v3h-3zM253 238h4v3h-4zM114 241h3v4h-3zM121 245h4v4h-4zM0 249h4v3h-4zM22 249h4v3h-4zM228 249h3v3h-3zM18 252h4v4h-4zM48 252h3v4h-3zM117 252h4v4h-4zM275 252h4v4h-4z"/><path fill="#6c2" d="M195 4h3v3h-3zM224 33h4v4h-4zM51 59h4v3h-4zM275 99h4v3h-4zM173 124h3v4h-3zM40 143h4v3h-4zM180 172h4v4h-4zM202 172h4v4h-4zM37 201h3v4h-3zM195 227h3v3h-3zM73 230h4v4h-4z"/><path fill="#de3" d="M209 4h4v3h-4zM206 7h3v4h-3zM66 135h4v4h-4zM40 197h4v4h-4zM48 197h3v4h-3z"/><path fill="#392" d="M228 4h3v3h-3zM264 4h4v3h-4zM66 7h4v4h-4zM59 15h3v3h-3zM154 22h4v4h-4zM202 22h4v4h-4zM55 29h4v4h-4zM187 33h4v4h-4zM272 40h3v4h-3zM275 51h4v4h-4zM7 55h4v4h-4zM176 55h4v4h-4zM268 55h4v4h-4zM224 59h4v3h-4zM121 62h4v4h-4zM106 66h4v3h-4zM110 69h4v4h-4zM77 73h4v4h-4zM217 77h3v3h-3zM132 80h4v4h-4zM140 80h3v4h-3zM66 84h4v4h-4zM77 84h4v4h-4zM264 84h4v4h-4zM117 88h4v3h-4zM73 91h4v4h-4zM117 95h4v4h-4zM33 99h4v3h-4zM106 99h4v3h-4zM40 102h4v4h-4zM66 102h4v4h-4zM228 102h3v4h-3zM73 110h4v3h-4zM253 110h4v3h-4zM257 110h4v3h-4zM103 113h3v4h-3zM162 117h3v4h-3zM162 124h3v4h-3zM92 135h3v4h-3zM121 135h4v4h-4zM125 135h3v4h-3zM165 135h4v4h-4zM206 143h3v3h-3zM217 146h3v4h-3zM110 150h4v4h-4zM220 150h4v4h-4zM117 157h4v4h-4zM253 161h4v4h-4zM99 165h4v3h-4zM18 176h4v3h-4zM110 176h4v3h-4zM195 176h3v3h-3zM18 179h4v4h-4zM11 187h4v3h-4zM147 197h4v4h-4zM136 219h4v4h-4zM158 223h4v4h-4zM7 227h4v3h-4zM117 227h4v3h-4zM29 230h4v4h-4zM77 238h4v3h-4zM81 238h3v3h-3zM51 241h4v4h-4zM250 241h3v4h-3zM158 245h4v4h-4zM162 245h3v4h-3zM143 249h4v3h-4zM187 249h4v3h-4zM162 252h3v4h-3z"/><path fill="#be3" d="M235 4h4v3h-4zM128 11h4v4h-4zM173 18h3v4h-3zM132 26h4v3h-4zM165 37h4v3h-4zM66 44h4v4h-4zM224 44h4v4h-4zM40 59h4v3h-4zM33 66h4v3h-4zM37 69h3v4h-3zM239 91h3v4h-3zM253 91h4v4h-4zM44 113h4v4h-4zM48 113h3v4h-3zM40 117h4v4h-4zM44 117h4v4h-4zM88 183h4v4h-4zM73 187h4v3h-4zM158 190h4v4h-4zM242 197h4v4h-4zM231 208h4v4h-4z"/><path fill="#5d4" d="M261 4h3v3h-3zM95 37h4v3h-4zM44 77h4v3h-4zM4 99h3v3h-3zM235 146h4v4h-4zM228 168h3v4h-3zM184 183h3v4h-3z"/><path fill="#ce6" d="M26 7h3v4h-3zM228 40h3v4h-3zM136 55h4v4h-4zM59 168h3v4h-3zM231 212h4v4h-4zM191 216h4v3h-4z"/><path fill="#6c3" d="M40 7h4v4h-4zM22 44h4v4h-4zM95 48h4v3h-4zM143 77h4v3h-4zM84 80h4v4h-4z"/><path fill="#472" d="M44 7h4v4h-4zM180 88h4v3h-4zM33 205h4v3h-4zM117 234h4v4h-4zM103 238h3v3h-3z"/><path fill="#592" d="M48 7h3v4h-3zM55 51h4v4h-4zM26 197h3v4h-3zM103 212h3v4h-3z"/><path fill="#471" d="M51 7h4v4h-4zM84 26h4v3h-4zM22 66h4v3h-4zM18 69h4v4h-4zM169 77h4v3h-4zM114 102h3v4h-3zM272 102h3v4h-3zM275 102h4v4h-4zM220 135h4v4h-4zM261 190h3v4h-3zM73 194h4v3h-4zM136 194h4v3h-4zM29 197h4v4h-4zM275 230h4v4h-4z"/><path fill="#af7" d="M55 7h4v4h-4zM140 33h3v4h-3zM132 37h4v3h-4zM73 44h4v4h-4zM88 55h4v4h-4zM84 59h4v3h-4zM22 77h4v3h-4zM180 102h4v4h-4zM173 110h3v3h-3zM88 139h4v4h-4zM246 150h4v4h-4zM92 161h3v4h-3zM81 165h3v3h-3zM18 168h4v4h-4zM136 168h4v4h-4zM84 190h4v4h-4zM103 190h3v4h-3zM140 230h3v4h-3z"/><path fill="#252" d="M81 7h3v4h-3zM88 7h4v4h-4zM77 11h4v4h-4zM59 18h3v4h-3zM246 44h4v4h-4zM180 51h4v4h-4zM253 51h4v4h-4zM235 59h4v3h-4zM261 62h3v4h-3zM4 95h3v4h-3zM217 102h3v4h-3zM209 106h4v4h-4zM213 124h4v4h-4zM106 143h4v3h-4zM114 143h3v3h-3zM187 143h4v3h-4zM173 146h3v4h-3zM184 150h3v4h-3zM154 157h4v4h-4zM114 168h3v4h-3zM132 205h4v3h-4zM264 208h4v4h-4zM272 219h3v4h-3zM275 223h4v4h-4zM88 230h4v4h-4z"/><path fill="#271" d="M92 7h3v4h-3zM99 18h4v4h-4zM264 66h4v3h-4zM132 77h4v3h-4zM110 102h4v4h-4zM264 117h4v4h-4zM29 124h4v4h-4zM162 139h3v4h-3zM110 146h4v4h-4zM217 172h3v4h-3zM0 201h4v4h-4zM147 201h4v4h-4zM136 205h4v3h-4zM37 212h3v4h-3zM151 223h3v4h-3zM81 234h3v4h-3zM165 245h4v4h-4zM253 252h4v4h-4z"/><path fill="#5e3" d="M95 7h4v4h-4zM228 22h3v4h-3zM95 26h4v3h-4zM99 29h4v4h-4zM195 29h3v4h-3zM48 40h3v4h-3zM154 40h4v4h-4zM11 55h4v4h-4zM18 55h4v4h-4zM231 55h4v4h-4zM4 62h3v4h-3zM73 62h4v4h-4zM184 62h3v4h-3zM213 62h4v4h-4zM231 62h4v4h-4zM176 66h4v3h-4zM180 66h4v3h-4zM184 66h3v3h-3zM55 73h4v4h-4zM88 73h4v4h-4zM217 73h3v4h-3zM121 80h4v4h-4zM4 84h3v4h-3zM257 84h4v4h-4zM114 88h3v3h-3zM55 91h4v4h-4zM147 95h4v4h-4zM268 95h4v4h-4zM206 106h3v4h-3zM158 110h4v3h-4zM162 110h3v3h-3zM77 113h4v4h-4zM11 117h4v4h-4zM59 117h3v4h-3zM77 117h4v4h-4zM106 117h4v4h-4zM154 121h4v3h-4zM235 121h4v3h-4zM121 124h4v4h-4zM180 124h4v4h-4zM275 124h4v4h-4zM257 128h4v4h-4zM40 132h4v3h-4zM4 143h3v3h-3zM7 146h4v4h-4zM125 146h3v4h-3zM125 150h3v4h-3zM136 154h4v3h-4zM246 157h4v4h-4zM275 157h4v4h-4zM147 168h4v4h-4zM37 176h3v3h-3zM217 179h3v4h-3zM4 183h3v4h-3zM198 205h4v3h-4zM103 208h3v4h-3zM0 216h4v3h-4zM37 219h3v4h-3zM202 223h4v4h-4zM125 227h3v3h-3zM132 230h4v4h-4zM165 230h4v4h-4zM217 230h3v4h-3zM114 234h3v4h-3zM173 234h3v4h-3zM257 238h4v3h-4zM103 241h3v4h-3zM151 241h3v4h-3zM128 245h4v4h-4zM154 245h4v4h-4zM4 249h3v3h-3zM29 249h4v3h-4zM77 252h4v4h-4zM81 252h3v4h-3z"/><path fill="#361" d="M106 7h4v4h-4zM110 15h4v3h-4zM95 22h4v4h-4zM40 26h4v3h-4zM176 48h4v3h-4zM250 48h3v3h-3zM275 48h4v3h-4zM242 51h4v4h-4zM143 99h4v3h-4zM231 102h4v4h-4zM264 106h4v4h-4zM268 106h4v4h-4zM272 106h3v4h-3zM275 106h4v4h-4zM275 110h4v3h-4zM242 124h4v4h-4zM165 132h4v3h-4zM18 135h4v4h-4zM173 135h3v4h-3zM224 139h4v4h-4zM151 143h3v3h-3zM154 146h4v4h-4zM158 150h4v4h-4zM154 161h4v4h-4zM242 161h4v4h-4zM110 165h4v3h-4zM151 165h3v3h-3zM206 165h3v3h-3zM231 165h4v3h-4zM224 168h4v4h-4zM209 176h4v3h-4zM7 183h4v4h-4zM26 187h3v3h-3zM143 197h4v4h-4zM29 205h4v3h-4zM275 208h4v4h-4zM29 212h4v4h-4zM48 219h3v4h-3zM180 219h4v4h-4zM272 223h3v4h-3zM77 227h4v3h-4zM84 230h4v4h-4zM268 234h4v4h-4zM7 245h4v4h-4zM253 245h4v4h-4zM7 249h4v3h-4z"/><path fill="#261" d="M110 7h4v4h-4zM73 11h4v4h-4zM88 15h4v3h-4zM154 18h4v4h-4zM48 22h3v4h-3zM51 26h4v3h-4zM206 29h3v4h-3zM44 33h4v4h-4zM206 37h3v3h-3zM246 48h4v3h-4zM257 55h4v4h-4zM264 62h4v4h-4zM272 66h3v3h-3zM147 102h4v4h-4zM66 106h4v4h-4zM213 106h4v4h-4zM220 106h4v4h-4zM217 110h3v3h-3zM125 132h3v3h-3zM33 135h4v4h-4zM44 135h4v4h-4zM59 143h3v3h-3zM103 143h3v3h-3zM169 143h4v3h-4zM180 146h4v4h-4zM224 146h4v4h-4zM99 154h4v3h-4zM117 154h4v3h-4zM103 157h3v4h-3zM110 157h4v4h-4zM239 157h3v4h-3zM114 161h3v4h-3zM209 165h4v3h-4zM228 165h3v3h-3zM275 168h4v4h-4zM110 172h4v4h-4zM268 176h4v3h-4zM272 179h3v4h-3zM132 197h4v4h-4zM261 197h3v4h-3zM264 197h4v4h-4zM213 201h4v4h-4zM209 205h4v3h-4zM26 208h3v4h-3zM125 208h3v4h-3zM275 212h4v4h-4zM169 216h4v3h-4zM143 219h4v4h-4zM95 227h4v3h-4zM33 230h4v4h-4zM220 234h4v4h-4zM37 238h3v3h-3zM264 252h4v4h-4z"/><path fill="#ce3" d="M121 7h4v4h-4zM202 11h4v4h-4zM261 29h3v4h-3zM231 44h4v4h-4zM239 197h3v4h-3z"/><path fill="#8f6" d="M140 7h3v4h-3zM7 11h4v4h-4zM257 15h4v3h-4zM195 22h3v4h-3zM147 26h4v3h-4zM154 26h4v3h-4zM224 37h4v3h-4zM132 44h4v4h-4zM195 44h3v4h-3zM44 55h4v4h-4zM70 59h3v3h-3zM195 62h3v4h-3zM264 77h4v3h-4zM33 84h4v4h-4zM213 91h4v4h-4zM154 95h4v4h-4zM169 95h4v4h-4zM198 99h4v3h-4zM132 102h4v4h-4zM184 106h3v4h-3zM151 110h3v3h-3zM4 117h3v4h-3zM253 150h4v4h-4zM18 154h4v3h-4zM18 157h4v4h-4zM176 157h4v4h-4zM44 165h4v3h-4zM128 168h4v4h-4zM66 190h4v4h-4zM191 190h4v4h-4zM242 190h4v4h-4zM11 197h4v4h-4zM70 197h3v4h-3zM191 212h4v4h-4zM11 223h4v4h-4zM239 230h3v4h-3zM62 234h4v4h-4zM154 241h4v4h-4zM33 245h4v4h-4z"/><path fill="#af5" d="M147 7h4v4h-4zM264 18h4v4h-4zM220 22h4v4h-4zM191 26h4v3h-4zM140 29h3v4h-3zM114 40h3v4h-3zM106 44h4v4h-4zM62 55h4v4h-4zM40 66h4v3h-4zM202 77h4v3h-4zM206 77h3v3h-3zM106 80h4v4h-4zM158 84h4v4h-4zM239 84h3v4h-3zM33 88h4v3h-4zM154 88h4v3h-4zM242 91h4v4h-4zM140 95h3v4h-3zM84 99h4v3h-4zM165 106h4v4h-4zM18 110h4v3h-4zM37 110h3v3h-3zM37 117h3v4h-3zM84 121h4v3h-4zM77 124h4v4h-4zM84 132h4v3h-4zM261 132h3v3h-3zM264 146h4v4h-4zM235 150h4v4h-4zM261 150h3v4h-3zM51 154h4v3h-4zM81 157h3v4h-3zM88 161h4v4h-4zM33 168h4v4h-4zM81 172h3v4h-3zM92 172h3v4h-3zM151 172h3v4h-3zM151 183h3v4h-3zM235 183h4v4h-4zM37 187h3v3h-3zM99 187h4v3h-4zM48 190h3v4h-3zM99 190h4v4h-4zM198 190h4v4h-4zM202 190h4v4h-4zM162 197h3v4h-3zM73 201h4v4h-4zM224 208h4v4h-4zM224 212h4v4h-4zM220 216h4v3h-4zM106 219h4v4h-4zM209 227h4v3h-4zM217 227h3v3h-3zM140 234h3v4h-3zM151 234h3v4h-3zM62 245h4v4h-4zM195 245h3v4h-3z"/><path fill="#5e4" d="M165 7h4v4h-4zM103 11h3v4h-3zM195 15h3v3h-3zM143 22h4v4h-4zM228 26h3v3h-3zM77 29h4v4h-4zM191 29h4v4h-4zM48 48h3v3h-3zM162 59h3v3h-3zM77 62h4v4h-4zM173 66h3v3h-3zM184 69h3v4h-3zM264 73h4v4h-4zM48 88h3v3h-3zM275 88h4v3h-4zM121 110h4v3h-4zM140 110h3v3h-3zM184 110h3v3h-3zM187 110h4v3h-4zM257 117h4v4h-4zM272 121h3v3h-3zM121 139h4v4h-4zM11 143h4v3h-4zM217 150h3v4h-3zM125 157h3v4h-3zM128 161h4v4h-4zM66 172h4v4h-4zM264 172h4v4h-4zM272 208h3v4h-3zM77 212h4v4h-4zM92 234h3v4h-3zM235 241h4v4h-4zM40 245h4v4h-4zM92 245h3v4h-3zM73 249h4v3h-4zM44 252h4v4h-4z"/><path fill="#6f2" d="M176 7h4v4h-4zM231 11h4v4h-4zM165 18h4v4h-4zM162 37h3v3h-3zM143 62h4v4h-4zM59 69h3v4h-3zM242 73h4v4h-4zM136 84h4v4h-4zM59 91h3v4h-3zM26 95h3v4h-3zM95 95h4v4h-4zM151 95h3v4h-3zM257 99h4v3h-4zM132 121h4v3h-4zM88 124h4v4h-4zM132 124h4v4h-4zM239 128h3v4h-3zM242 132h4v3h-4zM275 132h4v3h-4zM22 135h4v4h-4zM206 146h3v4h-3zM198 150h4v4h-4zM209 161h4v4h-4zM62 183h4v4h-4zM66 183h4v4h-4zM173 190h3v4h-3zM73 197h4v4h-4zM92 197h3v4h-3zM114 197h3v4h-3zM125 201h3v4h-3zM169 201h4v4h-4zM95 205h4v3h-4zM158 205h4v3h-4zM40 219h4v4h-4zM209 230h4v4h-4zM88 238h4v3h-4zM128 238h4v3h-4zM275 238h4v3h-4zM121 241h4v4h-4zM158 241h4v4h-4zM136 245h4v4h-4zM140 249h3v3h-3zM143 252h4v4h-4zM239 252h3v4h-3z"/><path fill="#3a2" d="M195 7h3v4h-3zM55 15h4v3h-4zM99 22h4v4h-4zM235 22h4v4h-4zM224 26h4v3h-4zM235 26h4v3h-4zM184 44h3v4h-3zM15 55h3v4h-3zM213 55h4v4h-4zM213 59h4v3h-4zM7 62h4v4h-4zM66 73h4v4h-4zM73 73h4v4h-4zM169 73h4v4h-4zM136 77h4v3h-4zM70 84h3v4h-3zM143 84h4v4h-4zM103 91h3v4h-3zM0 95h4v4h-4zM77 99h4v3h-4zM99 110h4v3h-4zM103 110h3v3h-3zM95 113h4v4h-4zM217 113h3v4h-3zM15 117h3v4h-3zM18 117h4v4h-4zM213 117h4v4h-4zM261 117h3v4h-3zM99 121h4v3h-4zM48 132h3v3h-3zM140 139h3v4h-3zM59 146h3v4h-3zM73 146h4v4h-4zM151 154h3v3h-3zM250 157h3v4h-3zM253 165h4v3h-4zM121 168h4v4h-4zM33 176h4v3h-4zM18 187h4v3h-4zM15 190h3v4h-3zM154 205h4v3h-4zM33 223h4v4h-4zM154 223h4v4h-4zM121 227h4v3h-4zM88 234h4v4h-4zM261 234h3v4h-3zM231 241h4v4h-4zM250 245h3v4h-3zM29 252h4v4h-4zM128 252h4v4h-4z"/><path fill="#7e2" d="M242 7h4v4h-4zM253 37h4v3h-4zM165 44h4v4h-4zM55 48h4v3h-4zM114 59h3v3h-3zM84 69h4v4h-4zM40 106h4v4h-4zM235 124h4v4h-4zM275 135h4v4h-4zM18 139h4v4h-4zM275 139h4v4h-4zM0 143h4v3h-4zM202 150h4v4h-4zM206 161h3v4h-3zM51 179h4v4h-4zM143 190h4v4h-4zM176 197h4v4h-4zM202 205h4v3h-4zM165 208h4v4h-4zM62 212h4v4h-4zM136 227h4v3h-4z"/><path fill="#5b2" d="M246 7h4v4h-4zM103 22h3v4h-3zM158 22h4v4h-4zM176 33h4v4h-4zM253 40h4v4h-4zM26 44h3v4h-3zM202 48h4v3h-4zM206 48h3v3h-3zM242 48h4v3h-4zM92 51h3v4h-3zM140 77h3v3h-3zM151 77h3v3h-3zM268 91h4v4h-4zM66 99h4v3h-4zM62 106h4v4h-4zM272 113h3v4h-3zM92 117h3v4h-3zM231 121h4v3h-4zM11 139h4v4h-4zM70 146h3v4h-3zM143 154h4v3h-4zM253 157h4v4h-4zM250 168h3v4h-3zM128 187h4v3h-4zM77 190h4v4h-4zM22 197h4v4h-4zM231 205h4v3h-4zM55 212h4v4h-4zM180 216h4v3h-4zM70 223h3v4h-3zM51 245h4v4h-4z"/><path fill="#bf6" d="M26 11h3v4h-3zM264 15h4v3h-4zM132 22h4v4h-4zM125 33h3v4h-3zM128 37h4v3h-4zM103 40h3v4h-3zM40 48h4v3h-4zM40 51h4v4h-4zM125 51h3v4h-3zM198 73h4v4h-4zM44 150h4v4h-4zM88 150h4v4h-4zM81 154h3v3h-3zM154 179h4v4h-4zM147 183h4v4h-4zM55 197h4v4h-4zM191 219h4v4h-4zM220 249h4v3h-4z"/><path fill="#ae6" d="M33 11h4v4h-4zM187 18h4v4h-4zM220 18h4v4h-4zM114 55h3v4h-3zM191 69h4v4h-4zM88 102h4v4h-4zM128 110h4v3h-4zM51 121h4v3h-4zM29 168h4v4h-4zM84 187h4v3h-4zM55 205h4v3h-4zM224 252h4v4h-4z"/><path fill="#4c1" d="M40 11h4v4h-4z"/><path fill="#362" d="M44 11h4v4h-4zM51 33h4v4h-4zM209 33h4v4h-4zM176 37h4v3h-4zM217 99h3v3h-3zM272 110h3v3h-3zM151 124h3v4h-3zM228 143h3v3h-3zM117 150h4v4h-4zM250 212h3v4h-3zM7 241h4v4h-4z"/><path fill="#482" d="M48 11h3v4h-3zM151 15h3v3h-3zM162 15h3v3h-3zM40 29h4v4h-4zM209 29h4v4h-4zM217 33h3v4h-3zM250 37h3v3h-3zM242 40h4v4h-4zM18 44h4v4h-4zM51 51h4v4h-4zM18 66h4v3h-4zM81 73h3v4h-3zM173 80h3v4h-3zM176 80h4v4h-4zM180 80h4v4h-4zM176 88h4v3h-4zM147 99h4v3h-4zM125 102h3v4h-3zM132 135h4v4h-4zM99 146h4v4h-4zM40 157h4v4h-4zM103 165h3v3h-3zM187 165h4v3h-4zM22 179h4v4h-4zM15 187h3v3h-3zM264 187h4v3h-4zM143 194h4v3h-4zM140 197h3v4h-3zM209 197h4v4h-4zM206 201h3v4h-3zM125 205h3v3h-3zM250 219h3v4h-3zM40 223h4v4h-4zM206 234h3v4h-3zM151 245h3v4h-3zM84 252h4v4h-4z"/><path fill="#4f3" d="M59 11h3v4h-3zM154 59h4v3h-4zM176 59h4v3h-4zM4 77h3v3h-3zM103 88h3v3h-3zM253 102h4v4h-4zM15 113h3v4h-3zM184 117h3v4h-3zM198 146h4v4h-4zM48 157h3v4h-3zM125 161h3v4h-3zM257 183h4v4h-4zM187 190h4v4h-4zM250 223h3v4h-3zM158 227h4v3h-4zM169 238h4v3h-4zM66 249h4v3h-4zM191 252h4v4h-4z"/><path fill="#131" d="M81 11h3v4h-3zM110 11h4v4h-4zM66 15h4v3h-4zM70 15h3v3h-3zM110 18h4v4h-4zM231 18h4v4h-4zM51 22h4v4h-4zM59 26h3v3h-3zM70 26h3v3h-3zM48 33h3v4h-3zM272 44h3v4h-3zM257 51h4v4h-4zM246 55h4v4h-4zM257 62h4v4h-4zM0 73h4v4h-4zM224 106h4v4h-4zM235 106h4v4h-4zM206 113h3v4h-3zM224 113h4v4h-4zM239 113h3v4h-3zM246 113h4v4h-4zM195 117h3v4h-3zM187 128h4v4h-4zM180 132h4v3h-4zM176 139h4v4h-4zM180 139h4v4h-4zM173 143h3v3h-3zM180 143h4v3h-4zM224 157h4v4h-4zM220 161h4v4h-4zM228 161h3v4h-3zM231 161h4v4h-4zM220 165h4v3h-4zM261 205h3v3h-3zM143 208h4v4h-4zM154 208h4v4h-4zM132 212h4v4h-4zM158 212h4v4h-4zM132 216h4v3h-4zM176 219h4v4h-4zM81 223h3v4h-3zM88 223h4v4h-4zM180 223h4v4h-4zM176 227h4v3h-4zM40 230h4v4h-4zM44 234h4v4h-4zM51 234h4v4h-4z"/><path fill="#371" d="M88 11h4v4h-4zM147 15h4v3h-4zM22 26h4v3h-4zM88 26h4v3h-4zM198 29h4v4h-4zM198 33h4v4h-4zM246 37h4v3h-4zM209 40h4v4h-4zM176 44h4v4h-4zM242 44h4v4h-4zM51 55h4v4h-4zM95 59h4v3h-4zM99 62h4v4h-4zM11 66h4v3h-4zM77 66h4v3h-4zM103 66h3v3h-3zM22 69h4v4h-4zM81 69h3v4h-3zM239 69h3v4h-3zM242 69h4v4h-4zM261 88h3v3h-3zM29 95h4v4h-4zM66 95h4v4h-4zM29 99h4v3h-4zM0 102h4v4h-4zM48 102h3v4h-3zM51 102h4v4h-4zM70 102h3v4h-3zM106 102h4v4h-4zM110 106h4v4h-4zM209 110h4v3h-4zM239 117h3v4h-3zM242 121h4v3h-4zM103 124h3v4h-3zM154 124h4v4h-4zM165 124h4v4h-4zM26 128h3v4h-3zM103 128h3v4h-3zM15 132h3v3h-3zM128 132h4v3h-4zM128 135h4v4h-4zM59 139h3v4h-3zM70 143h3v3h-3zM162 143h3v3h-3zM176 146h4v4h-4zM114 150h3v4h-3zM154 150h4v4h-4zM106 165h4v3h-4zM158 165h4v3h-4zM209 168h4v4h-4zM158 172h4v4h-4zM213 172h4v4h-4zM198 176h4v3h-4zM202 176h4v3h-4zM15 179h3v4h-3zM29 190h4v4h-4zM29 194h4v3h-4zM136 197h4v4h-4zM206 197h3v4h-3zM228 197h3v4h-3zM143 201h4v4h-4zM162 208h3v4h-3zM209 212h4v4h-4zM73 219h4v4h-4zM162 223h3v4h-3zM110 227h4v3h-4zM272 227h3v3h-3zM264 230h4v4h-4zM33 234h4v4h-4zM55 238h4v3h-4zM268 238h4v3h-4zM272 238h3v3h-3zM246 245h4v4h-4zM173 249h3v3h-3zM246 249h4v3h-4zM250 249h3v3h-3zM253 249h4v3h-4zM173 252h3v4h-3z"/><path fill="#4f2" d="M95 11h4v4h-4zM268 88h4v3h-4zM140 99h3v3h-3zM121 143h4v3h-4zM15 194h3v3h-3zM132 245h4v4h-4z"/><path fill="#bf2" d="M121 11h4v4h-4zM62 241h4v4h-4z"/><path fill="#9f8" d="M132 11h4v4h-4zM66 55h4v4h-4zM11 128h4v4h-4zM88 135h4v4h-4zM136 157h4v4h-4zM18 165h4v3h-4zM195 194h3v3h-3z"/><path fill="#7f6" d="M140 11h3v4h-3zM228 11h3v4h-3zM261 15h3v3h-3zM11 33h4v4h-4zM84 33h4v4h-4zM169 33h4v4h-4zM158 51h4v4h-4zM44 59h4v3h-4zM176 69h4v4h-4zM99 80h4v4h-4zM125 80h3v4h-3zM202 80h4v4h-4zM169 88h4v3h-4zM110 91h4v4h-4zM169 91h4v4h-4zM158 95h4v4h-4zM206 95h3v4h-3zM209 95h4v4h-4zM11 99h4v3h-4zM206 102h3v4h-3zM136 113h4v4h-4zM81 121h3v3h-3zM151 132h3v3h-3zM147 135h4v4h-4zM198 154h4v3h-4zM250 179h3v4h-3zM92 190h3v4h-3zM95 197h4v4h-4zM99 205h4v3h-4zM70 216h3v3h-3zM15 227h3v3h-3zM165 238h4v3h-4zM173 238h3v3h-3zM84 245h4v4h-4zM81 249h3v3h-3zM217 249h3v3h-3z"/><path fill="#6d2" d="M151 11h3v4h-3zM26 26h3v3h-3zM173 44h3v4h-3zM173 48h3v3h-3zM4 59h3v3h-3zM22 62h4v4h-4zM173 77h3v3h-3zM26 102h3v4h-3zM250 128h3v4h-3zM40 154h4v3h-4zM128 201h4v4h-4zM62 208h4v4h-4zM55 227h4v3h-4z"/><path fill="#7d2" d="M154 11h4v4h-4zM239 249h3v3h-3z"/><path fill="#5c1" d="M169 11h4v4h-4zM15 69h3v4h-3z"/><path fill="#3c2" d="M191 11h4v4h-4zM202 55h4v4h-4zM11 62h4v4h-4zM51 66h4v3h-4zM173 88h3v3h-3zM275 91h4v4h-4zM184 227h3v3h-3zM239 241h3v4h-3z"/><path fill="#3d3" d="M195 11h3v4h-3zM11 48h4v3h-4zM217 55h3v4h-3zM250 102h3v4h-3zM44 132h4v3h-4zM66 168h4v4h-4zM15 234h3v4h-3z"/><path fill="#ce4" d="M18 15h4v3h-4zM128 22h4v4h-4zM128 26h4v3h-4zM37 44h3v4h-3zM195 77h3v3h-3zM253 84h4v4h-4zM84 135h4v4h-4zM253 143h4v3h-4zM88 172h4v4h-4zM206 216h3v3h-3zM29 241h4v4h-4z"/><path fill="#4a1" d="M44 15h4v3h-4zM209 37h4v3h-4zM77 80h4v4h-4zM176 84h4v4h-4zM158 124h4v4h-4zM11 135h4v4h-4zM272 190h3v4h-3zM22 194h4v3h-4zM228 201h3v4h-3zM99 234h4v4h-4zM103 234h3v4h-3zM121 234h4v4h-4zM202 238h4v3h-4z"/><path fill="#243" d="M84 15h4v3h-4z"/><path fill="#264" d="M92 15h3v3h-3zM165 227h4v3h-4z"/><path fill="#3a3" d="M99 15h4v3h-4zM110 22h4v4h-4zM4 44h3v4h-3zM70 66h3v3h-3zM158 113h4v4h-4zM217 128h3v4h-3zM147 157h4v4h-4zM73 216h4v3h-4zM169 230h4v4h-4zM257 234h4v4h-4z"/><path fill="#5f4" d="M140 15h3v3h-3zM114 18h3v4h-3zM242 26h4v3h-4zM81 29h3v4h-3zM162 48h3v3h-3zM198 48h4v3h-4zM239 48h3v3h-3zM173 51h3v4h-3zM165 55h4v4h-4zM140 59h3v3h-3zM180 62h4v4h-4zM231 69h4v4h-4zM44 73h4v4h-4zM4 80h3v4h-3zM209 80h4v4h-4zM143 88h4v3h-4zM272 88h3v3h-3zM4 91h3v4h-3zM231 99h4v3h-4zM246 99h4v3h-4zM250 99h3v3h-3zM180 113h4v4h-4zM66 150h4v4h-4zM176 150h4v4h-4zM29 161h4v4h-4zM191 172h4v4h-4zM73 176h4v3h-4zM51 183h4v4h-4zM55 187h4v3h-4zM195 197h3v4h-3zM191 205h4v3h-4zM4 212h3v4h-3zM4 219h3v4h-3zM70 219h3v4h-3zM176 234h4v4h-4zM0 241h4v4h-4zM132 241h4v4h-4zM224 241h4v4h-4zM128 249h4v3h-4zM73 252h4v4h-4z"/><path fill="#8e2" d="M180 15h4v3h-4zM257 33h4v4h-4zM55 55h4v4h-4zM26 73h3v4h-3zM275 80h4v4h-4zM55 84h4v4h-4zM268 84h4v4h-4zM0 150h4v4h-4zM202 168h4v4h-4zM73 179h4v4h-4zM0 183h4v4h-4zM81 190h3v4h-3zM55 219h4v4h-4zM55 249h4v3h-4z"/><path fill="#7e5" d="M184 15h3v3h-3zM272 29h3v4h-3zM73 37h4v3h-4zM99 37h4v3h-4zM103 51h3v4h-3zM173 69h3v4h-3zM165 77h4v3h-4zM7 88h4v3h-4zM151 88h3v3h-3zM261 95h3v4h-3zM81 106h3v4h-3zM180 110h4v3h-4zM220 117h4v4h-4zM110 124h4v4h-4zM7 132h4v3h-4zM239 143h3v3h-3zM15 146h3v4h-3zM253 154h4v3h-4zM11 157h4v4h-4zM132 157h4v4h-4zM169 157h4v4h-4zM7 165h4v3h-4zM77 165h4v3h-4zM257 176h4v3h-4zM26 179h3v4h-3zM158 179h4v4h-4zM114 183h3v4h-3zM55 190h4v4h-4zM99 216h4v3h-4zM22 227h4v3h-4zM235 234h4v4h-4zM184 245h3v4h-3z"/><path fill="#df4" d="M209 15h4v3h-4zM59 55h3v4h-3zM92 176h3v3h-3zM44 197h4v4h-4z"/><path fill="#bf4" d="M217 15h3v3h-3zM140 22h3v4h-3zM261 22h3v4h-3zM33 37h4v3h-4zM231 37h4v3h-4zM33 40h4v4h-4zM44 48h4v3h-4zM121 48h4v3h-4zM62 51h4v4h-4zM136 51h4v4h-4zM165 51h4v4h-4zM18 80h4v4h-4zM228 84h3v4h-3zM253 88h4v3h-4zM187 95h4v4h-4zM88 106h4v4h-4zM51 117h4v4h-4zM66 117h4v4h-4zM84 117h4v4h-4zM33 121h4v3h-4zM110 121h4v3h-4zM264 139h4v4h-4zM15 143h3v3h-3zM18 143h4v3h-4zM88 143h4v3h-4zM95 143h4v3h-4zM250 143h3v3h-3zM268 146h4v4h-4zM29 150h4v4h-4zM62 150h4v4h-4zM84 150h4v4h-4zM92 154h3v3h-3zM250 154h3v3h-3zM77 161h4v4h-4zM11 165h4v3h-4zM173 165h3v3h-3zM15 168h3v4h-3zM143 172h4v4h-4zM173 172h3v4h-3zM40 179h4v4h-4zM92 179h3v4h-3zM143 179h4v4h-4zM169 179h4v4h-4zM202 183h4v4h-4zM88 187h4v3h-4zM242 201h4v4h-4zM44 208h4v4h-4zM217 208h3v4h-3zM26 216h3v3h-3zM66 238h4v3h-4zM110 241h4v4h-4zM202 249h4v3h-4z"/><path fill="#6e5" d="M246 15h4v3h-4zM81 33h3v4h-3zM136 44h4v4h-4zM128 55h4v4h-4zM257 69h4v4h-4zM95 77h4v3h-4zM191 106h4v4h-4zM22 113h4v4h-4zM140 113h3v4h-3zM180 117h4v4h-4zM275 117h4v4h-4zM246 132h4v3h-4zM213 154h4v3h-4zM140 161h3v4h-3zM125 183h3v4h-3zM242 183h4v4h-4zM114 190h3v4h-3zM187 197h4v4h-4zM187 227h4v3h-4zM15 230h3v4h-3zM136 238h4v3h-4zM264 245h4v4h-4zM26 249h3v3h-3z"/><path fill="#7e7" d="M268 15h4v3h-4zM106 37h4v3h-4zM154 80h4v4h-4zM106 88h4v3h-4zM81 124h3v4h-3zM132 168h4v4h-4zM99 197h4v4h-4zM235 227h4v3h-4z"/><path fill="#6f5" d="M7 18h4v4h-4zM246 22h4v4h-4zM11 26h4v3h-4zM106 33h4v4h-4zM275 33h4v4h-4zM4 37h3v3h-3zM0 40h4v4h-4zM195 69h3v4h-3zM114 80h3v4h-3zM151 80h3v4h-3zM44 88h4v3h-4zM151 91h3v4h-3zM162 91h3v4h-3zM195 106h3v4h-3zM132 113h4v4h-4zM151 113h3v4h-3zM29 117h4v4h-4zM151 117h3v4h-3zM59 124h3v4h-3zM44 128h4v4h-4zM121 132h4v3h-4zM59 135h3v4h-3zM275 150h4v4h-4zM275 154h4v3h-4zM151 168h3v4h-3zM106 197h4v4h-4zM48 212h3v4h-3zM184 212h3v4h-3zM15 216h3v3h-3zM103 223h3v4h-3zM7 234h4v4h-4zM106 234h4v4h-4zM261 245h3v4h-3z"/><path fill="#020" d="M81 18h3v4h-3zM268 44h4v4h-4zM191 132h4v3h-4zM187 135h4v4h-4zM206 139h3v4h-3z"/><path fill="#012" d="M84 18h4v4h-4zM202 139h4v4h-4z"/><path fill="#cf5" d="M132 18h4v4h-4zM264 22h4v4h-4zM231 40h4v4h-4zM162 69h3v4h-3zM195 73h3v4h-3zM224 80h4v4h-4zM143 187h4v3h-4zM59 216h3v3h-3zM224 219h4v4h-4zM202 252h4v4h-4z"/><path fill="#6e4" d="M140 18h3v4h-3zM253 18h4v4h-4zM117 22h4v4h-4zM15 26h3v3h-3zM15 29h3v4h-3zM37 29h3v4h-3zM95 29h4v4h-4zM0 33h4v4h-4zM143 37h4v3h-4zM187 48h4v3h-4zM147 51h4v4h-4zM125 55h3v4h-3zM154 55h4v4h-4zM158 55h4v4h-4zM180 59h4v3h-4zM272 59h3v3h-3zM51 62h4v4h-4zM220 62h4v4h-4zM0 66h4v3h-4zM48 69h3v4h-3zM228 69h3v4h-3zM51 73h4v4h-4zM261 73h3v4h-3zM33 80h4v4h-4zM99 84h4v4h-4zM62 88h4v3h-4zM7 91h4v4h-4zM48 95h3v4h-3zM202 99h4v3h-4zM264 99h4v3h-4zM15 106h3v4h-3zM95 106h4v4h-4zM154 113h4v4h-4zM128 117h4v4h-4zM268 121h4v3h-4zM15 128h3v4h-3zM88 128h4v4h-4zM180 161h4v4h-4zM103 168h3v4h-3zM242 172h4v4h-4zM257 179h4v4h-4zM59 183h3v4h-3zM114 194h3v3h-3zM213 194h4v3h-4zM268 197h4v4h-4zM173 201h3v4h-3zM0 208h4v4h-4zM187 223h4v4h-4zM253 230h4v4h-4zM184 238h3v3h-3zM220 238h4v3h-4zM103 245h3v4h-3zM18 249h4v3h-4zM70 252h3v4h-3zM151 252h3v4h-3z"/><path fill="#494" d="M147 18h4v4h-4z"/><path fill="#df7" d="M209 18h4v4h-4zM140 37h3v3h-3zM217 219h3v4h-3z"/><path fill="#df5" d="M213 18h4v4h-4zM37 51h3v4h-3zM140 176h3v3h-3zM195 219h3v4h-3z"/><path fill="#4f4" d="M235 18h4v4h-4zM4 40h3v4h-3zM15 59h3v3h-3zM0 91h4v4h-4zM246 102h4v4h-4zM191 110h4v3h-4zM275 183h4v4h-4zM103 230h3v4h-3zM48 249h3v3h-3z"/><path fill="#ae5" d="M261 18h3v4h-3zM176 22h4v4h-4zM257 22h4v4h-4zM136 26h4v3h-4zM136 29h4v4h-4zM151 37h3v3h-3zM59 48h3v3h-3zM70 51h3v4h-3zM88 51h4v4h-4zM40 55h4v4h-4zM11 73h4v4h-4zM106 77h4v3h-4zM231 77h4v3h-4zM228 88h3v3h-3zM15 91h3v4h-3zM191 95h4v4h-4zM173 117h3v4h-3zM48 121h3v3h-3zM73 128h4v4h-4zM110 132h4v3h-4zM268 139h4v4h-4zM257 146h4v4h-4zM55 150h4v4h-4zM7 157h4v4h-4zM73 157h4v4h-4zM202 157h4v4h-4zM73 168h4v4h-4zM140 172h3v4h-3zM99 179h4v4h-4zM147 187h4v3h-4zM224 187h4v3h-4zM18 201h4v4h-4zM55 201h4v4h-4zM217 205h3v3h-3zM184 208h3v4h-3zM239 212h3v4h-3zM26 241h3v4h-3zM84 241h4v4h-4zM92 249h3v3h-3zM106 249h4v3h-4zM99 252h4v4h-4z"/><path fill="#cf7" d="M268 18h4v4h-4zM191 91h4v4h-4zM37 146h3v4h-3zM242 150h4v4h-4zM84 179h4v4h-4zM95 187h4v3h-4zM228 216h3v3h-3zM231 216h4v3h-4z"/><path fill="#141" d="M55 22h4v4h-4zM66 26h4v3h-4zM264 40h4v4h-4zM0 48h4v3h-4zM239 55h3v4h-3zM242 55h4v4h-4zM261 59h3v3h-3zM95 66h4v3h-4zM246 66h4v3h-4zM224 110h4v3h-4zM242 117h4v4h-4zM48 135h3v4h-3zM176 143h4v3h-4zM195 143h3v3h-3zM217 168h3v4h-3zM143 205h4v3h-4zM257 205h4v3h-4zM128 219h4v4h-4zM84 223h4v4h-4zM253 223h4v4h-4zM88 227h4v3h-4zM48 230h3v4h-3zM217 234h3v4h-3zM48 238h3v3h-3zM176 249h4v3h-4z"/><path fill="#133" d="M88 22h4v4h-4zM261 201h3v4h-3z"/><path fill="#374" d="M81 26h3v3h-3z"/><path fill="#5b1" d="M92 26h3v3h-3zM22 102h4v4h-4zM70 183h3v4h-3zM140 190h3v4h-3zM81 194h3v3h-3zM99 241h4v4h-4z"/><path fill="#9e7" d="M143 26h4v3h-4zM198 69h4v4h-4zM173 102h3v4h-3zM55 121h4v3h-4zM106 132h4v3h-4zM51 150h4v4h-4zM242 227h4v3h-4z"/><path fill="#373" d="M206 26h3v3h-3zM22 128h4v4h-4zM195 201h3v4h-3zM125 219h3v4h-3zM26 227h3v3h-3zM33 238h4v3h-4z"/><path fill="#6b3" d="M209 26h4v3h-4z"/><path fill="#7e6" d="M239 26h3v3h-3zM206 80h3v4h-3zM242 84h4v4h-4zM136 110h4v3h-4zM165 165h4v3h-4zM37 172h3v4h-3zM253 194h4v3h-4zM0 212h4v4h-4zM220 230h4v4h-4zM154 238h4v3h-4z"/><path fill="#8e6" d="M250 26h3v3h-3zM275 26h4v3h-4zM114 29h3v4h-3zM253 29h4v4h-4zM7 33h4v4h-4zM77 33h4v4h-4zM114 44h3v4h-3zM117 48h4v3h-4zM195 91h3v4h-3zM206 91h3v4h-3zM136 106h4v4h-4zM77 128h4v4h-4zM92 128h3v4h-3zM136 139h4v4h-4zM239 146h3v4h-3zM22 168h4v4h-4zM40 168h4v4h-4zM239 176h3v3h-3zM59 197h3v4h-3zM235 212h4v4h-4zM239 223h3v4h-3z"/><path fill="#9e2" d="M261 26h3v3h-3zM147 33h4v4h-4zM261 33h3v4h-3zM140 66h3v3h-3zM55 77h4v3h-4zM165 80h4v4h-4zM231 135h4v4h-4zM33 143h4v3h-4zM220 176h4v3h-4zM224 205h4v3h-4zM191 230h4v4h-4z"/><path fill="#6f6" d="M11 29h4v4h-4zM15 33h3v4h-3zM15 48h3v3h-3zM81 51h3v4h-3zM154 51h4v4h-4zM187 62h4v4h-4zM209 84h4v4h-4zM0 117h4v4h-4zM18 124h4v4h-4zM191 161h4v4h-4zM253 179h4v4h-4zM11 194h4v3h-4zM11 212h4v4h-4zM103 227h3v3h-3zM22 245h4v4h-4zM84 249h4v3h-4z"/><path fill="#6d3" d="M59 29h3v4h-3zM48 55h3v4h-3zM132 62h4v4h-4zM92 110h3v3h-3zM165 121h4v3h-4zM73 238h4v3h-4zM275 245h4v4h-4z"/><path fill="#5f5" d="M73 29h4v4h-4zM4 33h3v4h-3zM272 33h3v4h-3zM224 62h4v4h-4zM44 66h4v3h-4zM217 80h3v4h-3zM206 99h3v3h-3zM29 102h4v4h-4zM125 106h3v4h-3zM11 124h4v4h-4zM246 183h4v4h-4zM268 187h4v3h-4zM81 212h3v4h-3zM140 223h3v4h-3zM154 227h4v3h-4zM37 245h3v4h-3zM73 245h4v4h-4zM40 249h4v3h-4zM125 249h3v3h-3z"/><path fill="#9f7" d="M132 29h4v4h-4zM114 33h3v4h-3zM81 37h3v3h-3zM121 37h4v3h-4zM77 40h4v4h-4zM114 48h3v3h-3zM162 77h3v3h-3zM84 95h4v4h-4zM165 99h4v3h-4zM132 110h4v3h-4zM114 124h3v4h-3zM84 146h4v4h-4zM246 146h4v4h-4zM7 176h4v3h-4zM151 176h3v3h-3zM158 183h4v4h-4zM220 187h4v3h-4zM55 194h4v3h-4zM62 197h4v4h-4zM11 201h4v4h-4zM235 230h4v4h-4zM154 234h4v4h-4zM106 245h4v4h-4zM195 249h3v3h-3z"/><path fill="#3a1" d="M246 29h4v4h-4zM217 132h3v3h-3z"/><path fill="#8e8" d="M33 33h4v4h-4zM103 44h3v4h-3zM162 88h3v3h-3zM198 91h4v4h-4zM132 165h4v3h-4zM29 172h4v4h-4zM40 252h4v4h-4z"/><path fill="#8e7" d="M37 33h3v4h-3zM110 37h4v3h-4zM114 37h3v3h-3zM110 40h4v4h-4zM165 102h4v4h-4zM154 110h4v3h-4zM121 190h4v4h-4zM7 194h4v3h-4zM187 205h4v3h-4z"/><path fill="#4e2" d="M99 33h4v4h-4zM84 91h4v4h-4zM48 161h3v4h-3zM231 194h4v3h-4zM73 234h4v4h-4zM187 234h4v4h-4z"/><path fill="#ffa" d="M128 33h4v4h-4z"/><path fill="#ffb" d="M132 33h4v4h-4z"/><path fill="#493" d="M213 33h4v4h-4zM22 40h4v4h-4zM206 44h3v4h-3zM209 48h4v3h-4zM125 62h3v4h-3zM33 77h4v3h-4zM187 77h4v3h-4zM151 128h3v4h-3zM4 146h3v4h-3zM184 157h3v4h-3zM147 165h4v3h-4zM184 168h3v4h-3zM264 194h4v3h-4zM29 201h4v4h-4zM253 227h4v3h-4zM242 241h4v4h-4z"/><path fill="#7e8" d="M11 37h4v3h-4zM26 168h3v4h-3z"/><path fill="#be2" d="M22 37h4v3h-4zM92 150h3v4h-3z"/><path fill="#ff9" d="M125 37h3v3h-3zM180 91h4v4h-4zM180 95h4v4h-4zM184 95h3v4h-3zM132 179h4v4h-4z"/><path fill="#bf7" d="M136 37h4v3h-4zM37 48h3v3h-3zM114 121h3v3h-3zM88 132h4v3h-4zM22 165h4v3h-4zM70 194h3v3h-3zM198 219h4v4h-4zM220 227h4v3h-4z"/><path fill="#3b4" d="M187 37h4v3h-4z"/><path fill="#4a4" d="M220 37h4v3h-4zM114 176h3v3h-3z"/><path fill="#6d1" d="M261 37h3v3h-3z"/><path fill="#4c4" d="M11 40h4v4h-4zM140 40h3v4h-3zM7 51h4v4h-4zM198 179h4v4h-4zM136 223h4v4h-4zM40 241h4v4h-4zM4 245h3v4h-3z"/><path fill="#ce7" d="M128 40h4v4h-4z"/><path fill="#ae2" d="M165 40h4v4h-4zM55 80h4v4h-4zM70 135h3v4h-3zM162 205h3v3h-3z"/><path fill="#3b3" d="M275 40h4v4h-4zM0 44h4v4h-4zM231 59h4v3h-4zM70 62h3v4h-3zM217 124h3v4h-3zM217 157h3v4h-3zM11 190h4v4h-4z"/><path fill="#393" d="M15 44h3v4h-3zM213 48h4v3h-4zM128 69h4v4h-4zM73 77h4v3h-4zM66 80h4v4h-4zM15 102h3v4h-3zM62 102h4v4h-4zM228 117h3v4h-3zM62 146h4v4h-4zM44 161h4v4h-4zM162 176h3v3h-3zM140 216h3v3h-3zM26 230h3v4h-3zM33 249h4v3h-4z"/><path fill="#df3" d="M33 44h4v4h-4zM176 77h4v3h-4z"/><path fill="#de5" d="M70 44h3v4h-3zM140 183h3v4h-3zM81 187h3v3h-3z"/><path fill="#ae9" d="M77 44h4v4h-4z"/><path fill="#4d4" d="M140 44h3v4h-3zM11 95h4v4h-4zM15 99h3v3h-3zM140 102h3v4h-3zM158 106h4v4h-4zM187 113h4v4h-4zM228 190h3v4h-3zM22 212h4v4h-4zM242 212h4v4h-4zM184 223h3v4h-3z"/><path fill="#3b2" d="M154 44h4v4h-4zM202 59h4v3h-4zM261 80h3v4h-3zM99 91h4v4h-4zM136 117h4v4h-4zM224 117h4v4h-4zM235 143h4v3h-4zM110 154h4v3h-4zM70 172h3v4h-3zM187 176h4v3h-4zM268 183h4v4h-4zM29 223h4v4h-4zM125 223h3v4h-3zM11 227h4v3h-4zM165 241h4v4h-4zM0 245h4v4h-4zM44 245h4v4h-4zM264 249h4v3h-4z"/><path fill="#5b3" d="M162 44h3v4h-3zM92 113h3v4h-3zM11 132h4v3h-4zM77 143h4v3h-4zM228 150h3v4h-3zM213 161h4v4h-4zM206 205h3v3h-3zM95 241h4v4h-4zM242 249h4v3h-4z"/><path fill="#4e4" d="M187 44h4v4h-4zM7 95h4v4h-4zM143 110h4v3h-4zM231 150h4v4h-4zM151 227h3v3h-3zM84 238h4v3h-4zM261 238h3v3h-3zM180 245h4v4h-4z"/><path fill="#013" d="M257 44h4v4h-4zM264 51h4v4h-4zM195 124h3v4h-3zM195 135h3v4h-3zM195 139h3v4h-3z"/><path fill="#151" d="M275 44h4v4h-4zM4 48h3v3h-3z"/><path fill="#8f7" d="M81 48h3v3h-3zM191 48h4v3h-4zM187 55h4v4h-4zM165 66h4v3h-4zM40 84h4v4h-4zM242 146h4v4h-4zM272 150h3v4h-3zM55 154h4v3h-4zM132 161h4v4h-4zM195 168h3v4h-3zM198 187h4v3h-4zM59 190h3v4h-3zM187 201h4v4h-4zM187 208h4v4h-4zM117 249h4v3h-4zM121 252h4v4h-4z"/><path fill="#132" d="M253 48h4v3h-4z"/><path fill="#be7" d="M44 51h4v4h-4zM246 88h4v3h-4zM224 223h4v4h-4zM242 223h4v4h-4z"/><path fill="#9b5" d="M95 51h4v4h-4z"/><path fill="#6d5" d="M99 51h4v4h-4z"/><path fill="#5b4" d="M209 51h4v4h-4zM228 55h3v4h-3z"/><path fill="#293" d="M213 51h4v4h-4zM195 205h3v3h-3z"/><path fill="#6d4" d="M95 55h4v4h-4z"/><path fill="#4f6" d="M162 55h3v4h-3z"/><path fill="#283" d="M235 55h4v4h-4zM103 117h3v4h-3zM106 154h4v3h-4zM184 252h3v4h-3z"/><path fill="#273" d="M261 55h3v4h-3zM272 69h3v4h-3zM81 91h3v4h-3zM121 157h4v4h-4zM246 176h4v3h-4zM92 227h3v3h-3z"/><path fill="#4c3" d="M11 59h4v3h-4zM173 59h3v3h-3zM110 73h4v4h-4zM0 88h4v3h-4zM250 106h3v4h-3zM62 110h4v3h-4zM162 113h3v4h-3zM147 121h4v3h-4zM184 121h3v3h-3zM121 146h4v4h-4zM195 146h3v4h-3zM191 179h4v4h-4zM95 219h4v4h-4zM264 234h4v4h-4z"/><path fill="#4e3" d="M48 59h3v3h-3zM268 62h4v4h-4zM0 69h4v4h-4zM213 84h4v4h-4zM81 95h3v4h-3zM106 95h4v4h-4zM4 102h3v4h-3zM242 102h4v4h-4zM77 110h4v3h-4zM180 121h4v3h-4zM99 135h4v4h-4zM143 139h4v4h-4zM140 150h3v4h-3zM121 161h4v4h-4zM121 165h4v3h-4zM70 168h3v4h-3zM187 183h4v4h-4zM15 212h3v4h-3zM106 227h4v3h-4zM73 241h4v4h-4zM37 249h3v3h-3z"/><path fill="#3c3" d="M165 59h4v3h-4zM84 124h4v4h-4zM220 154h4v3h-4zM191 201h4v4h-4zM147 252h4v4h-4zM158 252h4v4h-4z"/><path fill="#4b4" d="M220 59h4v3h-4zM117 176h4v3h-4zM261 249h3v3h-3z"/><path fill="#242" d="M257 59h4v3h-4zM147 205h4v3h-4zM257 227h4v3h-4zM44 238h4v3h-4z"/><path fill="#ae7" d="M33 62h4v4h-4zM217 66h3v3h-3zM191 88h4v3h-4z"/><path fill="#4b5" d="M66 62h4v4h-4z"/><path fill="#8a5" d="M128 62h4v4h-4z"/><path fill="#4e5" d="M176 62h4v4h-4zM15 245h3v4h-3z"/><path fill="#5a2" d="M7 66h4v3h-4zM84 73h4v4h-4zM140 73h3v4h-3zM184 77h3v3h-3zM187 80h4v4h-4zM110 99h4v3h-4zM95 117h4v4h-4zM33 128h4v4h-4zM15 135h3v4h-3zM154 139h4v4h-4zM26 157h3v4h-3zM59 161h3v4h-3zM257 165h4v3h-4zM275 165h4v3h-4zM176 176h4v3h-4zM191 176h4v3h-4zM95 208h4v4h-4zM206 208h3v4h-3zM99 212h4v4h-4zM165 212h4v4h-4zM250 252h3v4h-3z"/><path fill="#df6" d="M37 66h3v3h-3zM44 146h4v4h-4zM143 176h4v3h-4zM92 183h3v4h-3z"/><path fill="#784" d="M128 66h4v3h-4z"/><path fill="#4d2" d="M51 69h4v4h-4zM246 73h4v4h-4zM158 102h4v4h-4zM191 146h4v4h-4zM59 157h3v4h-3zM158 157h4v4h-4zM84 168h4v4h-4zM187 187h4v3h-4zM66 212h4v4h-4z"/><path fill="#394" d="M70 69h3v4h-3z"/><path fill="#5a3" d="M88 69h4v4h-4zM95 121h4v3h-4z"/><path fill="#7f7" d="M202 73h4v4h-4zM106 84h4v4h-4zM158 88h4v3h-4zM209 88h4v3h-4zM40 91h4v4h-4zM169 102h4v4h-4zM62 121h4v3h-4zM117 124h4v4h-4zM154 132h4v3h-4zM272 146h3v4h-3zM110 252h4v4h-4z"/><path fill="#5f6" d="M235 73h4v4h-4zM154 77h4v3h-4zM128 102h4v4h-4zM0 124h4v4h-4zM103 194h3v3h-3z"/><path fill="#5d5" d="M103 84h3v4h-3zM7 230h4v4h-4z"/><path fill="#5c4" d="M132 84h4v4h-4zM239 165h3v3h-3zM257 197h4v4h-4zM143 223h4v4h-4zM106 230h4v4h-4z"/><path fill="#5c3" d="M140 84h3v4h-3zM55 95h4v4h-4zM228 128h3v4h-3zM77 146h4v4h-4zM187 179h4v4h-4zM26 201h3v4h-3zM198 201h4v4h-4zM224 238h4v3h-4zM257 241h4v4h-4zM154 249h4v3h-4z"/><path fill="#6a2" d="M184 84h3v4h-3z"/><path fill="#7f8" d="M158 91h4v4h-4zM81 245h3v4h-3z"/><path fill="#ef6" d="M184 91h3v4h-3zM33 150h4v4h-4z"/><path fill="#de8" d="M187 91h4v4h-4z"/><path fill="#4b1" d="M62 95h4v4h-4zM73 227h4v3h-4z"/><path fill="#483" d="M73 95h4v4h-4zM103 95h3v4h-3zM22 187h4v3h-4zM33 197h4v4h-4z"/><path fill="#bf8" d="M173 95h3v4h-3zM18 150h4v4h-4z"/><path fill="#281" d="M73 99h4v3h-4zM246 241h4v4h-4z"/><path fill="#3c4" d="M162 99h3v3h-3z"/><path fill="#3a4" d="M235 102h4v4h-4zM99 113h4v4h-4zM147 117h4v4h-4z"/><path fill="#6c1" d="M44 106h4v4h-4zM261 161h3v4h-3zM235 201h4v4h-4z"/><path fill="#123" d="M231 106h4v4h-4zM198 113h4v4h-4zM191 121h4v3h-4zM209 124h4v4h-4zM180 135h4v4h-4zM143 212h4v4h-4zM147 216h4v3h-4zM264 216h4v3h-4zM151 219h3v4h-3zM176 223h4v4h-4z"/><path fill="#352" d="M261 106h3v4h-3zM246 121h4v3h-4z"/><path fill="#152" d="M220 110h4v3h-4zM195 113h3v4h-3zM81 219h3v4h-3z"/><path fill="#353" d="M268 110h4v3h-4z"/><path fill="#8e9" d="M128 113h4v4h-4z"/><path fill="#292" d="M220 113h4v4h-4zM77 216h4v3h-4zM180 249h4v3h-4z"/><path fill="#383" d="M99 117h4v4h-4zM147 146h4v4h-4zM184 146h3v4h-3zM187 150h4v4h-4zM154 154h4v3h-4zM110 168h4v4h-4zM117 172h4v4h-4zM264 183h4v4h-4zM272 201h3v4h-3zM37 223h3v4h-3zM44 241h4v4h-4z"/><path fill="#011" d="M198 117h4v4h-4z"/><path fill="#5d1" d="M239 121h3v3h-3z"/><path fill="#9e8" d="M62 124h4v4h-4zM70 128h3v4h-3zM66 157h4v4h-4zM29 245h4v4h-4z"/><path fill="#5a1" d="M250 124h3v4h-3zM242 128h4v4h-4zM272 168h3v4h-3zM250 172h3v4h-3zM92 201h3v4h-3z"/><path fill="#6b2" d="M253 124h4v4h-4z"/><path fill="#384" d="M176 132h4v3h-4zM184 249h3v3h-3z"/><path fill="#111" d="M184 135h3v4h-3z"/><path fill="#6c4" d="M33 139h4v4h-4z"/><path fill="#263" d="M213 146h4v4h-4zM140 212h3v4h-3z"/><path fill="#ce2" d="M264 157h4v4h-4z"/><path fill="#de4" d="M169 165h4v3h-4zM169 176h4v3h-4zM209 216h4v3h-4zM213 216h4v3h-4z"/><path fill="#231" d="M217 165h3v3h-3zM29 208h4v4h-4zM128 208h4v4h-4zM253 212h4v4h-4zM264 212h4v4h-4zM158 216h4v3h-4zM162 216h3v3h-3zM158 219h4v4h-4zM213 234h4v4h-4z"/><path fill="#de7" d="M169 172h4v4h-4zM92 187h3v3h-3z"/><path fill="#473" d="M11 183h4v4h-4z"/><path fill="#ff8" d="M143 183h4v4h-4z"/><path fill="#3f4" d="M92 194h3v3h-3z"/><path fill="#6e1" d="M173 194h3v3h-3z"/><path fill="#591" d="M37 197h3v4h-3zM228 205h3v3h-3z"/><path fill="#582" d="M33 201h4v4h-4z"/><path fill="#593" d="M92 205h3v3h-3z"/><path fill="#cf2" d="M239 205h3v3h-3z"/><path fill="#5e6" d="M81 208h3v4h-3zM250 227h3v3h-3zM184 230h3v4h-3z"/><path fill="#ae8" d="M195 208h3v4h-3zM22 219h4v4h-4z"/><path fill="#6f8" d="M195 212h3v4h-3z"/><path fill="#143" d="M143 216h4v3h-4z"/><path fill="#021" d="M151 216h3v3h-3z"/><path fill="#233" d="M169 219h4v4h-4z"/><path fill="#113" d="M257 219h4v4h-4z"/><path fill="#364" d="M77 223h4v4h-4z"/><path fill="#bf9" d="M18 227h4v3h-4z"/><path fill="#3e4" d="M11 234h4v4h-4z"/><path fill="#3e3" d="M11 238h4v3h-4z"/><path fill="#2a3" d="M162 249h3v3h-3z"/><path fill="#3d4" d="M180 252h4v4h-4z"/><rect x="81" y="190" width="15" height="8" fill="#dfa"/><rect x="84" y="190" width="8" height="8" fill="#ffd"/><rect x="88" y="190" width="7" height="4" fill="#fff"/><rect x="213" y="177" width="4" height="4" fill="#c96"/><rect x="217" y="177" width="3" height="4" fill="#e84"/><rect x="220" y="177" width="4" height="4" fill="#945"/></g></svg>
<div style="left:599px;top:243px;width:43px;height:19px;background:rgba(10,30,8,0.780)"></div>
<span class="t" style="left:603px;top:249px;line-height:14px;font-size:13px;color:#f00;font-family:'Liberation Mono',monospace;letter-spacing:0px">1.0 m</span>
<svg style="left:296px;top:88px;" width="818" height="305" viewBox="0 0 818 305"><g shape-rendering="crispEdges" stroke="#f00" stroke-width="1" fill="none"><path d="M0 153.500H421M435 153.500H818M428.500 1V146M428.500 160V305M306.500 148V159"/><rect x="427.500" y="152.500" width="2" height="2"/></g></svg>
<div style="left:282px;top:398px;width:833px;height:306px;background:#f0f0f0;border-right:1.500px solid #000;border-bottom:1.500px solid #000;border-radius:0 0 5px 4px"></div>
<div style="left:282px;top:398px;width:14px;height:306px;background:#6666cc;border-radius:0 0 0 4px"></div>
<svg style="left:282px;top:398.3px;" width="14" height="26" viewBox="0 0 14 26"><rect x="0.200" y="0" width="13.300" height="25.300" rx="2.500" fill="#f0f0f0"/><g fill="#f6f6f6" stroke="#8c8c8c" stroke-width="1"><rect x="1.500" y="0.700" width="10.500" height="10.500" rx="2"/><rect x="1.500" y="13.700" width="10.500" height="10.500" rx="2"/></g><g fill="none" stroke="#cfcfcf" stroke-width="0.700"><rect x="2.500" y="1.700" width="8.500" height="8.500" rx="1.200"/><rect x="2.500" y="14.700" width="8.500" height="8.500" rx="1.200"/></g><path d="M4.300 3.500l4.800 5M9.100 3.500l-4.800 5" stroke="#555" stroke-width="1.400" fill="none"/><g fill="none" stroke="#777" stroke-width="1"><rect x="4.200" y="18.700" width="3.600" height="3.600"/><path d="M6 18.500v-1.800h3.600v3.600h-1.700"/></g></svg>
<div style="left:296px;top:398px;width:819px;height:33px;background:linear-gradient(#ffffff,#f1f1f1);border-bottom:1px solid #bdbdbd"></div>
<div style="left:296px;top:431px;width:390px;height:251px;background:#000"></div>
<span class="t" style="left:298px;top:689px;line-height:16px;font-size:11px;color:#000;letter-spacing:0.046px;">1/0/1</span>
<svg style="left:296px;top:431px;" width="390" height="251" viewBox="0 0 390 251"><g shape-rendering="crispEdges"><polyline points="72.3,189.5 73.7,196.5 74.5,196.5 75.4,188.5 76.3,178.9 77.0,194.5 78.0,177.2 78.5,196.5 79.4,167.1 80.0,196.5 80.7,182.0 81.5,196.5 82.5,176.3 83.0,196.5 83.5,183.5 84.3,196.5 85.0,189.5 86.0,196.5 102.2,196.5 103.5,190.5 104.3,196.5 105.3,177.2 106.0,193.5 106.6,181.5 107.2,196.5 108.5,194.5 110.4,188.2 111.5,196.5 112.3,192.1 113.2,196.5 114.0,193.5 116.0,195.0 118.5,196.5 120.2,193.0 122.0,196.5 125.5,193.0 126.8,196.5 128.5,194.5 130.3,191.2 131.5,194.5 133.4,196.5 134.3,185.1 135.5,191.5 136.9,189.9 138.0,196.5 139.6,196.5 141.0,190.5 142.3,194.5 143.5,182.0 144.4,196.5 145.3,190.5 146.5,196.5 148.8,192.5 151.0,196.5 153.0,193.5 154.5,188.2 155.8,193.5 157.1,196.5 159.3,191.5 160.5,182.0 162.0,190.5 163.7,187.3 165.5,196.5 166.8,188.2 168.0,192.5 169.4,186.5 171.2,196.5 174.0,193.0 176.2,188.5 177.5,193.5 179.0,196.5 184.5,196.5 185.6,188.5 187.0,192.5 189.4,183.1 191.5,190.5 193.3,195.2 195.5,191.5 197.7,184.2 198.5,196.5 199.9,184.5 202.5,188.5 205.4,189.1 205.8,196.5 207.5,193.5 209.3,188.5 210.4,195.5 212.5,194.5 215.3,196.5 217.5,193.5 219.2,196.5 220.3,184.2 221.4,193.5 223.5,189.5 225.8,185.3 226.9,170.5 227.7,184.5 228.5,182.0 230.2,169.3 231.0,186.5 231.9,183.1 233.5,162.1 234.5,181.5 235.5,184.7 237.0,171.5 238.2,160.5 239.2,169.5 240.1,175.3 242.3,168.5 244.5,161.0 245.4,166.5 246.2,165.5 247.3,174.5 248.4,181.5 250.0,168.5 251.7,155.5 252.5,166.5 253.3,170.5 254.7,158.5 256.1,145.5 257.0,156.5 257.7,164.5 259.0,151.5 260.3,136.2 261.0,148.5 261.6,154.5 262.5,158.5 263.3,174.8 264.2,164.5 264.9,155.0 266.7,166.5 268.5,174.8 269.7,162.5 271.0,151.1 272.3,154.5 273.5,142.3 274.2,156.5 274.8,164.5 275.7,158.5 276.5,175.5 277.1,156.5 277.6,148.5 279.0,152.5 280.7,189.7 281.5,152.5 282.5,147.5 283.1,166.5 283.6,171.5 284.5,142.8 285.2,151.5 285.8,158.8 286.7,144.5 287.5,132.5 288.1,146.5 288.6,142.5 289.2,156.5 289.7,167.5 290.8,196.5 292.0,166.5 293.6,151.5 294.3,149.0 295.4,183.5 296.5,156.5 297.4,132.5 298.5,166.5 299.4,188.9 300.3,166.5 301.2,154.5 303.0,146.5 304.7,138.5 305.7,146.5 306.7,150.5 307.6,136.5 308.5,124.5 309.5,154.5 310.4,122.1 311.3,130.5 312.2,135.5 313.6,149.0 315.0,180.5 316.4,196.5 317.5,139.5 318.4,196.5 319.5,166.5 320.5,146.5 322.3,158.5 324.0,169.5 325.3,177.9 327.4,196.5 328.0,161.5 329.5,131.1 330.8,155.9 332.9,184.8 334.3,162.1 335.0,96.5 335.6,166.5 336.3,196.5 337.7,196.5 339.1,175.5 340.3,166.5 341.6,143.5 342.5,196.5 343.5,196.5 344.6,48.5 345.6,116.5 346.7,153.5 347.4,96.5 348.2,18.0 348.9,96.5 349.4,126.9 350.1,196.5 350.8,196.5 351.5,166.5 352.2,186.5 352.9,191.5 354.5,173.1 355.6,176.5 356.2,196.5 359.0,196.5 360.4,118.0 361.1,166.5 361.8,196.5 362.5,156.5 363.3,99.0 364.0,156.5 364.6,196.5 365.5,156.5 366.4,124.2 367.0,136.5 367.6,126.9 368.3,191.7 368.8,196.5" fill="none" stroke="#00ff00" stroke-width="1"/><path d="M51.500 3.500V213.500H390" stroke="#fff" stroke-width="1" fill="none"/><path d="M51.500 196.5h6" stroke="#fff" stroke-width="1"/><path d="M51.500 172.5h3" stroke="#fff" stroke-width="1"/><path d="M51.500 148.5h6" stroke="#fff" stroke-width="1"/><path d="M51.500 124.5h3" stroke="#fff" stroke-width="1"/><path d="M51.500 100.5h6" stroke="#fff" stroke-width="1"/><path d="M51.500 76.5h3" stroke="#fff" stroke-width="1"/><path d="M51.500 52.5h6" stroke="#fff" stroke-width="1"/><path d="M51.500 28.5h3" stroke="#fff" stroke-width="1"/><path d="M51.500 4.5h6" stroke="#fff" stroke-width="1"/><path d="M73.5 213.500v-5" stroke="#fff" stroke-width="1"/><path d="M122.5 213.500v-5" stroke="#fff" stroke-width="1"/><path d="M171.5 213.500v-5" stroke="#fff" stroke-width="1"/><path d="M220.5 213.500v-5" stroke="#fff" stroke-width="1"/><path d="M269.5 213.500v-5" stroke="#fff" stroke-width="1"/><path d="M318.5 213.500v-5" stroke="#fff" stroke-width="1"/><path d="M366.5 213.500v-5" stroke="#fff" stroke-width="1"/></g><g font-family='"Liberation Sans", sans-serif' font-size="11" fill="#fff"><text x="46.500" y="200.8" text-anchor="end">0</text><text x="46.500" y="152.6" text-anchor="end">200</text><text x="46.500" y="104.3" text-anchor="end">400</text><text x="46.500" y="56.0" text-anchor="end">600</text><text x="46.500" y="7.8" text-anchor="end">800</text><text x="73.5" y="225.300" text-anchor="middle">400</text><text x="122.4" y="225.300" text-anchor="middle">500</text><text x="171.3" y="225.300" text-anchor="middle">600</text><text x="220.2" y="225.300" text-anchor="middle">700</text><text x="269.1" y="225.300" text-anchor="middle">800</text><text x="318.0" y="225.300" text-anchor="middle">900</text><text x="366.9" y="225.300" text-anchor="middle">1000</text><text x="231" y="247.500" text-anchor="middle">Wavelength [nm]</text><text transform="translate(9.700 108.500) rotate(-90)" text-anchor="middle" textLength="84.500" lengthAdjust="spacingAndGlyphs">Y (Spectral Value)</text></g></svg>
<span class="t" style="left:0px;top:-8px;line-height:16px;font-size:11px;color:#fff;left:282px;top:597px;width:100px;line-height:14px;transform:rotate(-90deg);transform-origin:0 0;">SpectralLibrary #1</span>
<svg style="left:300px;top:406px;" width="5" height="20" viewBox="0 0 5 20"><rect x="0" y="0.0" width="1.200" height="1.200" fill="#b8b8b8"/><rect x="3" y="0.0" width="1.200" height="1.200" fill="#b8b8b8"/><rect x="0" y="3.0" width="1.200" height="1.200" fill="#b8b8b8"/><rect x="3" y="3.0" width="1.200" height="1.200" fill="#b8b8b8"/><rect x="0" y="6.0" width="1.200" height="1.200" fill="#b8b8b8"/><rect x="3" y="6.0" width="1.200" height="1.200" fill="#b8b8b8"/><rect x="0" y="9.0" width="1.200" height="1.200" fill="#b8b8b8"/><rect x="3" y="9.0" width="1.200" height="1.200" fill="#b8b8b8"/><rect x="0" y="12.0" width="1.200" height="1.200" fill="#b8b8b8"/><rect x="3" y="12.0" width="1.200" height="1.200" fill="#b8b8b8"/><rect x="0" y="15.0" width="1.200" height="1.200" fill="#b8b8b8"/><rect x="3" y="15.0" width="1.200" height="1.200" fill="#b8b8b8"/></svg>
<svg style="left:312px;top:405px;" width="14.5" height="14.5" viewBox="0 0 14 14"><rect x="0.500" y="0.500" width="13" height="13" rx="3" fill="#5b9a58" stroke="#4a8349" stroke-width="1"/><path d="M7 3v8M3 7h8" stroke="#fff" stroke-width="2.600" stroke-linecap="round"/></svg>
<svg style="left:336.5px;top:412.5px;" width="8" height="5" viewBox="0 0 8 5"><path d="M0 0h7.500l-3.750 4.200z" fill="#555"/></svg>
<svg style="left:375.3px;top:412.5px;" width="8" height="5" viewBox="0 0 8 5"><path d="M0 0h7.500l-3.750 4.200z" fill="#555"/></svg>
<svg style="left:414.3px;top:412.5px;" width="8" height="5" viewBox="0 0 8 5"><path d="M0 0h7.500l-3.750 4.200z" fill="#555"/></svg>
<svg style="left:350.5px;top:404.5px;" width="19" height="19" viewBox="0 0 19 19"><path d="M0.7000000000000002 10.30v3.50a6.3 2.3 0 0 0 12.6 0v-3.50z" fill="#f03a1c"/><path d="M0.7000000000000002 6.80v3.50a6.3 2.3 0 0 0 12.6 0v-3.50z" fill="#4fc31c"/><path d="M0.7000000000000002 3.30v3.50a6.3 2.3 0 0 0 12.6 0v-3.50z" fill="#3f72ae"/><ellipse cx="7" cy="3.30" rx="6.3" ry="2.3" fill="#6d9bd0"/><rect x="11" y="11.500" width="6.500" height="6.500" rx="1.500" fill="#5b9a58" stroke="#4a8349" stroke-width="0.600"/><path d="M14.250 12.800v4M12.250 14.800h4" stroke="#fff" stroke-width="1.300"/></svg>
<svg style="left:389.5px;top:404.5px;" width="19" height="19" viewBox="0 0 19 19"><path d="M0.7000000000000002 10.30v3.50a6.3 2.3 0 0 0 12.6 0v-3.50z" fill="#f03a1c"/><path d="M0.7000000000000002 6.80v3.50a6.3 2.3 0 0 0 12.6 0v-3.50z" fill="#4fc31c"/><path d="M0.7000000000000002 3.30v3.50a6.3 2.3 0 0 0 12.6 0v-3.50z" fill="#3f72ae"/><ellipse cx="7" cy="3.30" rx="6.3" ry="2.3" fill="#6d9bd0"/><rect x="11" y="11.500" width="6.500" height="6.500" rx="0.800" fill="#8aa6cf" stroke="#6f8dba" stroke-width="0.600"/><rect x="12.300" y="12" width="3.900" height="2.200" fill="#e8eef8"/><rect x="12.800" y="15.500" width="2.900" height="2.200" fill="#dfe6f2"/></svg>
<div style="left:428.5px;top:406px;width:1px;height:17px;background:#cfcfcf"></div>
<div style="left:432px;top:403px;width:124px;height:22px;border:1px solid #adadad;border-radius:3px;background:linear-gradient(#ffffff,#f4f4f4)"></div>
<span class="t" style="left:436.5px;top:407.3px;line-height:16px;font-size:12px;color:#000;letter-spacing:-0.670px;">Nanometers [nm]</span>
<svg style="left:541px;top:412.5px;" width="8" height="5" viewBox="0 0 8 5"><path d="M0 0h7.500l-3.750 4.200z" fill="#444"/></svg>
<svg style="left:561px;top:405px;" width="19" height="18" viewBox="0 0 19 18"><g fill="none" stroke="#777" stroke-width="0.900"><circle cx="4" cy="5" r="1.300"/><circle cx="12" cy="1.800" r="1.300"/><circle cx="1.800" cy="13" r="1.300"/></g><path d="M6 8.500L12 6.200L14 14.500L7.500 16.500z" fill="#f2d21e"/><path d="M7.500 9.500L12 8L13 12L8.200 13.500z" fill="#3c6fb5"/><path d="M5.500 13L10 16.500L7 17L4.500 15z" fill="#e2342a"/><path d="M12.500 10L17.500 5.800" stroke="#e08a2a" stroke-width="1.700"/><path d="M9 12.500L13 10.500L14.500 14L10.500 16z" fill="#d9a563" stroke="#b98040" stroke-width="0.500"/></svg>
<svg style="left:588px;top:405px;" width="19" height="18" viewBox="0 0 19 18"><ellipse cx="9" cy="9.500" rx="6.500" ry="6" fill="#f2f2f2" stroke="#9a9a9a" stroke-width="0.800" stroke-dasharray="2 1"/><circle cx="9" cy="9.500" r="3.200" fill="#5b8cc6"/><path d="M2.500 2.500C3.500 0.800 5.500 0.800 6.500 1.800L4.800 3.600L5.800 4.700L7.700 3C8.500 4.500 7.800 6 6.500 6.500L10 10" fill="none" stroke="#666" stroke-width="1.300"/><path d="M7 7.500L9.300 5.600L16.500 13L16.800 15.800L14 15.300z" fill="#f0d052" stroke="#333" stroke-width="0.900"/></svg>
<svg style="left:623px;top:404px;" width="16" height="20" viewBox="0 0 16 20"><path d="M10 1.200L13.500 2.800L5.500 15.500L2 18.500L2.400 14z" fill="#e9d84e" stroke="#6b6420" stroke-width="0.900" stroke-linejoin="round"/><path d="M9.300 2.600L12.600 4.200" stroke="#fbf6c8" stroke-width="1.300"/><path d="M2.200 18.200L2.500 15L5 16.200z" fill="#8d8d8d"/><path d="M7.800 4.500L4 14" stroke="#c9b930" stroke-width="1"/></svg>
<svg style="left:650px;top:405px;" width="17" height="18" viewBox="0 0 17 18"><g fill="#e4e2da"><rect x="0.500" y="1.500" width="14.500" height="3.800"/><rect x="0.500" y="6.700" width="14.500" height="3.800"/><rect x="0.500" y="11.900" width="14.500" height="3.800"/></g><g transform="translate(3 0.500) scale(0.700)"><path d="M14.500 0.800L17.300 2.300L5 21L2 23.500L2.600 19.500z" fill="#efefec" stroke="#d4d4cf" stroke-width="1.100"/></g></svg>
<svg style="left:677px;top:405px;" width="18" height="18" viewBox="0 0 18 18"><rect x="0.500" y="1" width="14.500" height="15" rx="1.500" fill="#dcdcdc" stroke="#d0d0d0" stroke-width="0.700"/><rect x="3" y="2" width="9" height="5.500" fill="#ededed"/><rect x="4" y="10.500" width="7" height="5" fill="#e9e9e9"/><g transform="translate(8 5.500) scale(0.520)"><path d="M14.500 0.800L17.300 2.300L5 21L2 23.500L2.600 19.500z" fill="#e4e0da" stroke="#ccc8c2" stroke-width="1.200"/></g></svg>
<svg style="left:703px;top:405px;" width="18" height="18" viewBox="0 0 18 18"><g fill="none" stroke="#3f7fc8" stroke-width="3.400"><path d="M3 8.200A6 5.800 0 0 1 13 4"/><path d="M15 9.800A6 5.800 0 0 1 5 14"/></g><path d="M10.200 6.800L16.200 7.200L16.200 0.800z" fill="#3f7fc8"/><path d="M7.800 11.200L1.800 10.800L1.800 17.200z" fill="#3f7fc8"/></svg>
<div style="left:729.5px;top:408px;width:1px;height:14px;background:#cfcfcf"></div>
<svg style="left:738px;top:405.5px;" width="18" height="18" viewBox="0 0 18 18"><rect x="0.500" y="0.500" width="14.500" height="14.500" rx="1" fill="#f1f1f1" stroke="#dcdcdc" stroke-width="0.800"/><rect x="0.500" y="4" width="14.500" height="3.200" fill="#e4e2da"/><path d="M2.500 2.300h3M8 2.300h5M2.500 9.500h3M2.500 12.500h3" stroke="#d8d8d8" stroke-width="1"/><rect x="9.500" y="9" width="7.500" height="7.500" rx="1" fill="#dcd8cc"/><path d="M11.300 10.800l4 4M15.300 10.800l-4 4" stroke="#f6f4ee" stroke-width="1.300"/></svg>
<svg style="left:765px;top:405.5px;" width="15" height="17" viewBox="0 0 15 17"><rect x="0.500" y="0.500" width="8" height="9" fill="#e9e6dd"/><path d="M1 2.800h13" stroke="#dccfcf" stroke-width="1.400"/><path d="M5.500 1.200h4" stroke="#dccfcf" stroke-width="1.400"/><path d="M2.700 4.500h9.600l-1 11.500h-7.600z" fill="#f3eded" stroke="#dccfcf" stroke-width="1.100"/><path d="M5.500 6.500v7.500M7.500 6.500v7.500M9.500 6.500v7.500" stroke="#dccfcf" stroke-width="1.100"/></svg>
<svg style="left:791px;top:406px;" width="18" height="16" viewBox="0 0 18 16"><path d="M1 2.500L12 9M1 8.500L12.500 4" stroke="#d6d6d6" stroke-width="1.300"/><circle cx="14" cy="3.800" r="2.200" fill="none" stroke="#dccfcf" stroke-width="1.200"/><circle cx="13.500" cy="10.800" r="2.200" fill="none" stroke="#dccfcf" stroke-width="1.200"/></svg>
<svg style="left:820px;top:405.5px;" width="14" height="17" viewBox="0 0 14 17"><path d="M4.500 0.500h5l3 3v9h-8z" fill="#f5f5f5" stroke="#dedede" stroke-width="0.800"/><path d="M0.500 4.500h5l3 3v8.500h-8z" fill="#f2f2f2" stroke="#dadada" stroke-width="0.800"/><path d="M2 9.500h4M2 11.500h4M2 13.500h4" stroke="#e2e2e2" stroke-width="0.800"/></svg>
<svg style="left:847px;top:405px;" width="14" height="18" viewBox="0 0 14 18"><rect x="0.800" y="1.800" width="12" height="15" rx="1" fill="#ececec" stroke="#d6d6d6" stroke-width="0.900"/><rect x="3.500" y="0.500" width="6.500" height="2.800" fill="#dcdcdc"/><rect x="2.800" y="4.500" width="8" height="10.500" fill="#f6f6f6"/><path d="M4 7.500h5M4 9.500h5M4 11.500h3" stroke="#dedede" stroke-width="0.800"/></svg>
<div style="left:871px;top:408px;width:1px;height:14px;background:#cfcfcf"></div>
<svg style="left:880px;top:404px;" width="18" height="19" viewBox="0 0 18 19"><rect x="5.500" y="7.500" width="10" height="10" rx="1" fill="#f5de3e" stroke="#c9ae14" stroke-width="0.800"/><text x="0" y="11.500" font-family="Liberation Serif, serif" font-size="17" fill="#5a2a7a">ε</text></svg>
<svg style="left:907px;top:405px;" width="17" height="17" viewBox="0 0 17 17"><rect x="0.500" y="1" width="15.500" height="4" rx="1.200" fill="#f5de3e" stroke="#c9ae14" stroke-width="0.800"/><rect x="0.500" y="6.500" width="15.500" height="4" rx="1.200" fill="#f5de3e" stroke="#c9ae14" stroke-width="0.800"/><rect x="0.500" y="12" width="15.500" height="4" rx="1.200" fill="#f5de3e" stroke="#c9ae14" stroke-width="0.800"/></svg>
<svg style="left:933px;top:405px;" width="17" height="17" viewBox="0 0 17 17"><path d="M1 1H15.500V15.500z" fill="#e2e2e2" stroke="#bdbdbd" stroke-width="0.700"/><path d="M1 1L15.500 15.500H1z" fill="#f5de3e" stroke="#c9ae14" stroke-width="0.800"/></svg>
<svg style="left:960px;top:405px;" width="19" height="18" viewBox="0 0 19 18"><rect x="0.500" y="0.500" width="9.500" height="9.500" rx="0.800" fill="#f5de3e" stroke="#c9ae14" stroke-width="0.800"/><rect x="4" y="4" width="9.500" height="9.500" rx="0.800" fill="#f5de3e" stroke="#c9ae14" stroke-width="0.800"/><rect x="9.500" y="9" width="8" height="8" rx="1.800" fill="#e8323c"/><circle cx="13.500" cy="13" r="2.300" fill="#fff"/><path d="M12 14.500L15 11.500" stroke="#e8323c" stroke-width="1.100"/></svg>
<svg style="left:988px;top:405px;" width="16" height="17" viewBox="0 0 16 17"><rect x="0.500" y="0.500" width="15" height="15.500" rx="1" fill="#b9d2ee" stroke="#7fa6d6" stroke-width="0.800"/><path d="M2 3h12M2 5.500h12M2 8h12" stroke="#e8f0fa" stroke-width="0.900"/><rect x="1.500" y="11.500" width="13" height="3" fill="#f5de3e"/><path d="M8 2.500L12 6.800H9.700V10.500H6.300V6.800H4z" fill="#3f74b8"/></svg>
<svg style="left:1015px;top:404px;" width="17" height="19" viewBox="0 0 17 19"><path d="M0.800 1.500h15.400l-1.300 2.200H2.100z" fill="#f5de3e" stroke="#c9ae14" stroke-width="0.600"/><path d="M2.300 4L6.700 10V17.500L10.300 16V10L14.700 4z" fill="#5b8cc6" stroke="#3d6da4" stroke-width="0.600"/></svg>
<svg style="left:1041px;top:404.5px;" width="18" height="18" viewBox="0 0 18 18"><rect x="4" y="4" width="10" height="10" fill="#f5de3e" stroke="#c9ae14" stroke-width="0.800"/><path transform="translate(9 3.3) rotate(0) scale(0.8)" d="M0 -4.500L4.300 0.300H1.900V4.500H-1.900V0.300H-4.300z" fill="#4b7dbf" stroke="#2f5f9f" stroke-width="0.500"/><path transform="translate(9 14.7) rotate(180) scale(0.8)" d="M0 -4.500L4.300 0.300H1.900V4.500H-1.900V0.300H-4.300z" fill="#4b7dbf" stroke="#2f5f9f" stroke-width="0.500"/><path transform="translate(3.3 9) rotate(-90) scale(0.8)" d="M0 -4.500L4.300 0.300H1.900V4.500H-1.900V0.300H-4.300z" fill="#4b7dbf" stroke="#2f5f9f" stroke-width="0.500"/><path transform="translate(14.7 9) rotate(90) scale(0.8)" d="M0 -4.500L4.300 0.300H1.900V4.500H-1.900V0.300H-4.300z" fill="#4b7dbf" stroke="#2f5f9f" stroke-width="0.500"/></svg>
<svg style="left:1068px;top:404px;" width="20" height="20" viewBox="0 0 20 20"><rect x="1.500" y="3" width="10" height="10" fill="#f5de3e" stroke="#c9ae14" stroke-width="0.800"/><path d="M8.500 13L3.500 18" stroke="#8a6d0c" stroke-width="2.800"/><path d="M8.300 13.200L3.800 17.700" stroke="#f4c81e" stroke-width="1.600"/><circle cx="8.300" cy="13.200" r="1.100" fill="#111"/><circle cx="12.500" cy="8" r="6.200" fill="#f7f5ea" fill-opacity="0.900" stroke="#8c8c8c" stroke-width="1.100"/><path d="M12.500 2.300A5.700 5.700 0 0 1 12.500 13.700z" fill="#e6e3d4" opacity="0.700"/></svg>
<div style="left:1094.5px;top:408px;width:1px;height:14px;background:#cfcfcf"></div>
<svg style="left:1102px;top:410px;" width="9" height="8" viewBox="0 0 9 8"><path d="M0.800 0.800L3.500 4L0.800 7.200M4.800 0.800L7.500 4L4.800 7.200" fill="none" stroke="#222" stroke-width="1.100"/></svg>
<div style="left:692px;top:433px;width:421px;height:222px;border:1px solid #a0a0a0;background:#fff"></div>
<div style="left:693px;top:434px;width:419px;height:19px;background:#f0f0f0"></div>
<div style="left:693px;top:434px;width:111px;height:19px;background:linear-gradient(#ffffff,#f0f0f0);border-right:1px solid #c8c8c8;border-bottom:1px solid #c8c8c8"></div>
<div style="left:693px;top:453px;width:11px;height:201px;background:#f0f0f0"></div>
<div style="left:693px;top:453px;width:11px;height:30px;border-right:1px solid #c0c0c0;border-bottom:1px solid #c0c0c0;background:linear-gradient(#fdfdfd,#f0f0f0)"></div>
<div style="left:704px;top:453px;width:100px;height:30px;border-right:1px solid #c8c8c8;border-bottom:1px solid #c8c8c8"></div>
<span class="t" style="left:739.5px;top:436.6px;line-height:16px;font-size:12px;color:#000;letter-spacing:-0.058px;">name</span>
<span class="t" style="left:696px;top:460.6px;line-height:16px;font-size:12px;color:#000;letter-spacing:-1.500px;">1</span>
<span class="t" style="left:707.2px;top:460.6px;line-height:16px;font-size:12px;color:#000;letter-spacing:-0.343px;">LH_mountain_…</span>
<div style="left:688px;top:550px;width:2px;height:18px;background:repeating-linear-gradient(#a8a8a8 0 1px,transparent 1px 3px) 0 0/1px 100% no-repeat,repeating-linear-gradient(transparent 0 1px,#fff 1px 2px,transparent 2px 3px) 1px 0/1px 100% no-repeat"></div>
<span class="t" style="left:691.8px;top:661px;line-height:16px;font-size:12px;color:#000;letter-spacing:-0.695px;">Filter</span>
<div style="left:716px;top:658px;width:260px;height:21px;border:1px solid #a0a0a0;border-radius:3px;background:#fff"></div>
<span class="t" style="left:718.4px;top:661px;line-height:16px;font-size:12px;color:#7f7f7f;letter-spacing:-0.557px;">Show all features</span>
<div style="left:977px;top:658px;width:40px;height:20px;border:1px solid #b4b4b4;border-radius:3px;background:linear-gradient(#fefefe,#f2f2f2)"></div>
<span class="t" style="left:982.7px;top:660.5px;line-height:16px;font-size:12px;color:#000;letter-spacing:-0.706px;">Apply</span>
<div style="left:1089px;top:657px;width:24px;height:23px;border:1px solid #a8a8a8;border-radius:3px;background:#dcdcdc"></div>
<svg style="left:1021px;top:659px;" width="16" height="17" viewBox="0 0 16 17"><path d="M0.800 1.300h14.400l-1.200 2H2z" fill="#f5de3e" stroke="#c9ae14" stroke-width="0.600"/><path d="M2.200 3.600L6.300 9V16L9.700 14.600V9L13.800 3.600z" fill="#5b8cc6" stroke="#3d6da4" stroke-width="0.600"/></svg>
<svg style="left:1045px;top:660px;" width="17" height="16" viewBox="0 0 17 16"><ellipse cx="8.500" cy="8.500" rx="5.800" ry="5.300" fill="#f2f2f2" stroke="#a8a8a8" stroke-width="0.800" stroke-dasharray="2 1"/><path d="M2 2.500C3 0.800 5 0.800 6 1.800L4.300 3.500L5.200 4.500L7 3C7.700 4.300 7.200 5.600 6 6L9 9" fill="none" stroke="#8a8a8a" stroke-width="1.200"/><path d="M6.500 7L8.600 5.300L15 12L15.200 14.500L12.800 14z" fill="#f0d052" stroke="#555" stroke-width="0.800"/></svg>
<svg style="left:1069.5px;top:661px;" width="15" height="14" viewBox="0 0 15 14"><rect x="0.500" y="0.500" width="14" height="13" fill="#dbe8f6" stroke="#8fb2dc" stroke-width="1"/><rect x="6" y="2.500" width="6.500" height="3.300" fill="#fff" stroke="#8fb2dc" stroke-width="0.700"/><rect x="6" y="8" width="6.500" height="3.300" fill="#fff" stroke="#8fb2dc" stroke-width="0.700"/><path d="M2.500 4.200h2.500M2.500 9.700h2.500" stroke="#3b5f8f" stroke-width="1.200"/></svg>
<svg style="left:1093.5px;top:661px;" width="15" height="15" viewBox="0 0 15 15"><rect x="0.500" y="0.500" width="14" height="14" fill="#dbe8f6" stroke="#7fa6d6" stroke-width="1"/><rect x="1" y="1" width="13" height="3" fill="#a9c6e8"/><path d="M1 4.500h13M1 7.500h13M1 10.500h13M5 4.500v9.500" stroke="#7fa6d6" stroke-width="0.800"/></svg>
<svg style="left:1101px;top:692px;" width="12" height="10" viewBox="0 0 12 10"><g fill="#c4c4c4"><rect x="9" y="1" width="1.200" height="1.200"/><rect x="6" y="4" width="1.200" height="1.200"/><rect x="9" y="4" width="1.200" height="1.200"/><rect x="3" y="7" width="1.200" height="1.200"/><rect x="6" y="7" width="1.200" height="1.200"/><rect x="9" y="7" width="1.200" height="1.200"/></g></svg>
<span class="t" style="left:1127.4px;top:88.1px;line-height:16px;font-size:12px;color:#000;letter-spacing:-0.180px;">Processing Toolbox</span>
<svg style="left:1339px;top:90.5px;" width="26" height="12" viewBox="0 0 26 12"><g fill="none" stroke="#6a6a6a" stroke-width="1"><rect x="0.5" y="0.5" width="10" height="10" rx="2"/><rect x="14.5" y="0.5" width="10" height="10" rx="2"/><rect x="2.5" y="4.5" width="4" height="4" rx="1"/><path d="M4.5 4.5v-1.5a0.5 0.5 0 0 1 .5-.5h3a.5.5 0 0 1 .5.5v3a.5.5 0 0 1-.5.5h-1.500"/></g><path d="M17 3l5 5M22 3l-5 5" stroke="#4a4a4a" stroke-width="1.8" fill="none"/></svg>
<div style="left:1120px;top:389px;width:2px;height:18px;background:repeating-linear-gradient(#a8a8a8 0 1px,transparent 1px 3px) 0 0/1px 100% no-repeat,repeating-linear-gradient(transparent 0 1px,#fff 1px 2px,transparent 2px 3px) 1px 0/1px 100% no-repeat"></div>
<div style="left:277px;top:389px;width:2px;height:18px;background:repeating-linear-gradient(#a8a8a8 0 1px,transparent 1px 3px) 0 0/1px 100% no-repeat,repeating-linear-gradient(transparent 0 1px,#fff 1px 2px,transparent 2px 3px) 1px 0/1px 100% no-repeat"></div>
<div style="left:1123px;top:136px;width:243px;height:22px;border:1px solid #a0a0a0;border-radius:3px;background:#fff"></div>
<svg style="left:1131px;top:141px;" width="14" height="14" viewBox="0 0 14 14"><circle cx="5.500" cy="5.500" r="4.300" fill="none" stroke="#7a7a7a" stroke-width="1.200"/><path d="M8.700 8.700L12.500 12.500" stroke="#7a7a7a" stroke-width="1.400"/></svg>
<span class="t" style="left:1151.6px;top:140.3px;line-height:16px;font-size:12px;color:#808080;letter-spacing:-0.659px;">Search...</span>
<div style="left:1123px;top:158px;width:243px;height:547px;border:1px solid #a0a0a0;background:#fff"></div>
<span class="t" style="left:1169.6px;top:160.8px;line-height:16px;font-size:12px;color:#000;letter-spacing:-0.319px;">Recently used</span>
<svg style="left:1132.5px;top:163.6px;" width="5" height="8" viewBox="0 0 5 8"><path d="M0.300 0v8l4.200-4z" fill="#666"/></svg>
<svg style="left:1147.5px;top:160.1px;" width="15" height="15" viewBox="0 0 15 15"><circle cx="7.500" cy="7.500" r="6.800" fill="#f4f4f4" stroke="#8e8e8e" stroke-width="1"/><path d="M7.500 2.800v5l3 2.200" fill="none" stroke="#8e8e8e" stroke-width="1"/></svg>
<span class="t" style="left:1169.6px;top:178.8px;line-height:16px;font-size:12px;color:#000;letter-spacing:-0.086px;">Cartography</span>
<svg style="left:1132.5px;top:181.6px;" width="5" height="8" viewBox="0 0 5 8"><path d="M0.300 0v8l4.200-4z" fill="#666"/></svg>
<svg style="left:1148px;top:178.1px;" width="14.5" height="14.5" viewBox="0 0 14 14"><circle cx="6.900" cy="6.800" r="5.400" fill="none" stroke="#6fa024" stroke-width="2.900"/><path d="M2.200 9.500A5.400 5.400 0 0 0 9.500 11.550" fill="none" stroke="#4f9628" stroke-width="2.900"/><path d="M9.300 9L13.900 13.300" stroke="#fff" stroke-width="4.200"/><path d="M8.600 8.400L13 12.600" stroke="#4d962a" stroke-width="2.700"/><path d="M6.800 6.500L9 8.700" stroke="#e8dc5a" stroke-width="1.900"/><circle cx="6.900" cy="6.600" r="1.500" fill="#ee7410"/></svg>
<span class="t" style="left:1169.6px;top:196.8px;line-height:16px;font-size:12px;color:#000;letter-spacing:-0.484px;">Database</span>
<svg style="left:1132.5px;top:199.6px;" width="5" height="8" viewBox="0 0 5 8"><path d="M0.300 0v8l4.200-4z" fill="#666"/></svg>
<svg style="left:1148px;top:196.1px;" width="14.5" height="14.5" viewBox="0 0 14 14"><circle cx="6.900" cy="6.800" r="5.400" fill="none" stroke="#6fa024" stroke-width="2.900"/><path d="M2.200 9.500A5.400 5.400 0 0 0 9.500 11.550" fill="none" stroke="#4f9628" stroke-width="2.900"/><path d="M9.300 9L13.900 13.300" stroke="#fff" stroke-width="4.200"/><path d="M8.600 8.400L13 12.600" stroke="#4d962a" stroke-width="2.700"/><path d="M6.800 6.500L9 8.700" stroke="#e8dc5a" stroke-width="1.900"/><circle cx="6.900" cy="6.600" r="1.500" fill="#ee7410"/></svg>
<span class="t" style="left:1169.6px;top:214.8px;line-height:16px;font-size:12px;color:#000;letter-spacing:-0.153px;">File tools</span>
<svg style="left:1132.5px;top:217.6px;" width="5" height="8" viewBox="0 0 5 8"><path d="M0.300 0v8l4.200-4z" fill="#666"/></svg>
<svg style="left:1148px;top:214.1px;" width="14.5" height="14.5" viewBox="0 0 14 14"><circle cx="6.900" cy="6.800" r="5.400" fill="none" stroke="#6fa024" stroke-width="2.900"/><path d="M2.200 9.500A5.400 5.400 0 0 0 9.500 11.550" fill="none" stroke="#4f9628" stroke-width="2.900"/><path d="M9.300 9L13.900 13.300" stroke="#fff" stroke-width="4.200"/><path d="M8.600 8.400L13 12.600" stroke="#4d962a" stroke-width="2.700"/><path d="M6.800 6.500L9 8.700" stroke="#e8dc5a" stroke-width="1.900"/><circle cx="6.900" cy="6.600" r="1.500" fill="#ee7410"/></svg>
<span class="t" style="left:1169.6px;top:232.8px;line-height:16px;font-size:12px;color:#000;letter-spacing:0.081px;">Interpolation</span>
<svg style="left:1132.5px;top:235.6px;" width="5" height="8" viewBox="0 0 5 8"><path d="M0.300 0v8l4.200-4z" fill="#666"/></svg>
<svg style="left:1148px;top:232.1px;" width="14.5" height="14.5" viewBox="0 0 14 14"><circle cx="6.900" cy="6.800" r="5.400" fill="none" stroke="#6fa024" stroke-width="2.900"/><path d="M2.200 9.500A5.400 5.400 0 0 0 9.500 11.550" fill="none" stroke="#4f9628" stroke-width="2.900"/><path d="M9.300 9L13.900 13.300" stroke="#fff" stroke-width="4.200"/><path d="M8.600 8.400L13 12.600" stroke="#4d962a" stroke-width="2.700"/><path d="M6.800 6.500L9 8.700" stroke="#e8dc5a" stroke-width="1.900"/><circle cx="6.900" cy="6.600" r="1.500" fill="#ee7410"/></svg>
<span class="t" style="left:1169.6px;top:250.8px;line-height:16px;font-size:12px;color:#000;letter-spacing:-0.209px;">Layer tools</span>
<svg style="left:1132.5px;top:253.60000000000002px;" width="5" height="8" viewBox="0 0 5 8"><path d="M0.300 0v8l4.200-4z" fill="#666"/></svg>
<svg style="left:1148px;top:250.10000000000002px;" width="14.5" height="14.5" viewBox="0 0 14 14"><circle cx="6.900" cy="6.800" r="5.400" fill="none" stroke="#6fa024" stroke-width="2.900"/><path d="M2.200 9.500A5.400 5.400 0 0 0 9.500 11.550" fill="none" stroke="#4f9628" stroke-width="2.900"/><path d="M9.300 9L13.900 13.300" stroke="#fff" stroke-width="4.200"/><path d="M8.600 8.400L13 12.600" stroke="#4d962a" stroke-width="2.700"/><path d="M6.800 6.500L9 8.700" stroke="#e8dc5a" stroke-width="1.900"/><circle cx="6.900" cy="6.600" r="1.500" fill="#ee7410"/></svg>
<span class="t" style="left:1169.6px;top:268.8px;line-height:16px;font-size:12px;color:#000;letter-spacing:-0.261px;">Mesh</span>
<svg style="left:1132.5px;top:271.6px;" width="5" height="8" viewBox="0 0 5 8"><path d="M0.300 0v8l4.200-4z" fill="#666"/></svg>
<svg style="left:1148px;top:268.1px;" width="14.5" height="14.5" viewBox="0 0 14 14"><circle cx="6.900" cy="6.800" r="5.400" fill="none" stroke="#6fa024" stroke-width="2.900"/><path d="M2.200 9.500A5.400 5.400 0 0 0 9.500 11.550" fill="none" stroke="#4f9628" stroke-width="2.900"/><path d="M9.300 9L13.900 13.300" stroke="#fff" stroke-width="4.200"/><path d="M8.600 8.400L13 12.600" stroke="#4d962a" stroke-width="2.700"/><path d="M6.800 6.500L9 8.700" stroke="#e8dc5a" stroke-width="1.900"/><circle cx="6.900" cy="6.600" r="1.500" fill="#ee7410"/></svg>
<span class="t" style="left:1169.6px;top:286.8px;line-height:16px;font-size:12px;color:#000;letter-spacing:-0.156px;">Network analysis</span>
<svg style="left:1132.5px;top:289.6px;" width="5" height="8" viewBox="0 0 5 8"><path d="M0.300 0v8l4.200-4z" fill="#666"/></svg>
<svg style="left:1148px;top:286.1px;" width="14.5" height="14.5" viewBox="0 0 14 14"><circle cx="6.900" cy="6.800" r="5.400" fill="none" stroke="#6fa024" stroke-width="2.900"/><path d="M2.200 9.500A5.400 5.400 0 0 0 9.500 11.550" fill="none" stroke="#4f9628" stroke-width="2.900"/><path d="M9.300 9L13.900 13.300" stroke="#fff" stroke-width="4.200"/><path d="M8.600 8.400L13 12.600" stroke="#4d962a" stroke-width="2.700"/><path d="M6.800 6.500L9 8.700" stroke="#e8dc5a" stroke-width="1.900"/><circle cx="6.900" cy="6.600" r="1.500" fill="#ee7410"/></svg>
<span class="t" style="left:1169.6px;top:304.8px;line-height:16px;font-size:12px;color:#000;letter-spacing:-0.297px;">Plots</span>
<svg style="left:1132.5px;top:307.6px;" width="5" height="8" viewBox="0 0 5 8"><path d="M0.300 0v8l4.200-4z" fill="#666"/></svg>
<svg style="left:1148px;top:304.1px;" width="14.5" height="14.5" viewBox="0 0 14 14"><circle cx="6.900" cy="6.800" r="5.400" fill="none" stroke="#6fa024" stroke-width="2.900"/><path d="M2.200 9.500A5.400 5.400 0 0 0 9.500 11.550" fill="none" stroke="#4f9628" stroke-width="2.900"/><path d="M9.300 9L13.900 13.300" stroke="#fff" stroke-width="4.200"/><path d="M8.600 8.400L13 12.600" stroke="#4d962a" stroke-width="2.700"/><path d="M6.800 6.500L9 8.700" stroke="#e8dc5a" stroke-width="1.900"/><circle cx="6.900" cy="6.600" r="1.500" fill="#ee7410"/></svg>
<span class="t" style="left:1169.6px;top:322.8px;line-height:16px;font-size:12px;color:#000;letter-spacing:-0.442px;">Raster analysis</span>
<svg style="left:1132.5px;top:325.6px;" width="5" height="8" viewBox="0 0 5 8"><path d="M0.300 0v8l4.200-4z" fill="#666"/></svg>
<svg style="left:1148px;top:322.1px;" width="14.5" height="14.5" viewBox="0 0 14 14"><circle cx="6.900" cy="6.800" r="5.400" fill="none" stroke="#6fa024" stroke-width="2.900"/><path d="M2.200 9.500A5.400 5.400 0 0 0 9.500 11.550" fill="none" stroke="#4f9628" stroke-width="2.900"/><path d="M9.300 9L13.900 13.300" stroke="#fff" stroke-width="4.200"/><path d="M8.600 8.400L13 12.600" stroke="#4d962a" stroke-width="2.700"/><path d="M6.800 6.500L9 8.700" stroke="#e8dc5a" stroke-width="1.900"/><circle cx="6.900" cy="6.600" r="1.500" fill="#ee7410"/></svg>
<span class="t" style="left:1169.6px;top:340.8px;line-height:16px;font-size:12px;color:#000;letter-spacing:-0.305px;">Raster creation</span>
<svg style="left:1132.5px;top:343.6px;" width="5" height="8" viewBox="0 0 5 8"><path d="M0.300 0v8l4.200-4z" fill="#666"/></svg>
<svg style="left:1148px;top:340.1px;" width="14.5" height="14.5" viewBox="0 0 14 14"><circle cx="6.900" cy="6.800" r="5.400" fill="none" stroke="#6fa024" stroke-width="2.900"/><path d="M2.200 9.500A5.400 5.400 0 0 0 9.500 11.550" fill="none" stroke="#4f9628" stroke-width="2.900"/><path d="M9.300 9L13.900 13.300" stroke="#fff" stroke-width="4.200"/><path d="M8.600 8.400L13 12.600" stroke="#4d962a" stroke-width="2.700"/><path d="M6.800 6.500L9 8.700" stroke="#e8dc5a" stroke-width="1.900"/><circle cx="6.900" cy="6.600" r="1.500" fill="#ee7410"/></svg>
<span class="t" style="left:1169.6px;top:358.8px;line-height:16px;font-size:12px;color:#000;letter-spacing:-0.313px;">Raster terrain analysis</span>
<svg style="left:1132.5px;top:361.6px;" width="5" height="8" viewBox="0 0 5 8"><path d="M0.300 0v8l4.200-4z" fill="#666"/></svg>
<svg style="left:1148px;top:358.1px;" width="14.5" height="14.5" viewBox="0 0 14 14"><circle cx="6.900" cy="6.800" r="5.400" fill="none" stroke="#6fa024" stroke-width="2.900"/><path d="M2.200 9.500A5.400 5.400 0 0 0 9.500 11.550" fill="none" stroke="#4f9628" stroke-width="2.900"/><path d="M9.300 9L13.900 13.300" stroke="#fff" stroke-width="4.200"/><path d="M8.600 8.400L13 12.600" stroke="#4d962a" stroke-width="2.700"/><path d="M6.800 6.500L9 8.700" stroke="#e8dc5a" stroke-width="1.900"/><circle cx="6.900" cy="6.600" r="1.500" fill="#ee7410"/></svg>
<span class="t" style="left:1169.6px;top:376.8px;line-height:16px;font-size:12px;color:#000;letter-spacing:-0.311px;">Raster tools</span>
<svg style="left:1132.5px;top:379.6px;" width="5" height="8" viewBox="0 0 5 8"><path d="M0.300 0v8l4.200-4z" fill="#666"/></svg>
<svg style="left:1148px;top:376.1px;" width="14.5" height="14.5" viewBox="0 0 14 14"><circle cx="6.900" cy="6.800" r="5.400" fill="none" stroke="#6fa024" stroke-width="2.900"/><path d="M2.200 9.500A5.400 5.400 0 0 0 9.500 11.550" fill="none" stroke="#4f9628" stroke-width="2.900"/><path d="M9.300 9L13.900 13.300" stroke="#fff" stroke-width="4.200"/><path d="M8.600 8.400L13 12.600" stroke="#4d962a" stroke-width="2.700"/><path d="M6.800 6.500L9 8.700" stroke="#e8dc5a" stroke-width="1.900"/><circle cx="6.900" cy="6.600" r="1.500" fill="#ee7410"/></svg>
<span class="t" style="left:1169.6px;top:394.8px;line-height:16px;font-size:12px;color:#000;letter-spacing:-0.315px;">Vector analysis</span>
<svg style="left:1132.5px;top:397.6px;" width="5" height="8" viewBox="0 0 5 8"><path d="M0.300 0v8l4.200-4z" fill="#666"/></svg>
<svg style="left:1148px;top:394.1px;" width="14.5" height="14.5" viewBox="0 0 14 14"><circle cx="6.900" cy="6.800" r="5.400" fill="none" stroke="#6fa024" stroke-width="2.900"/><path d="M2.200 9.500A5.400 5.400 0 0 0 9.500 11.550" fill="none" stroke="#4f9628" stroke-width="2.900"/><path d="M9.300 9L13.900 13.300" stroke="#fff" stroke-width="4.200"/><path d="M8.600 8.400L13 12.600" stroke="#4d962a" stroke-width="2.700"/><path d="M6.800 6.500L9 8.700" stroke="#e8dc5a" stroke-width="1.900"/><circle cx="6.900" cy="6.600" r="1.500" fill="#ee7410"/></svg>
<span class="t" style="left:1169.6px;top:412.8px;line-height:16px;font-size:12px;color:#000;letter-spacing:-0.143px;">Vector creation</span>
<svg style="left:1132.5px;top:415.6px;" width="5" height="8" viewBox="0 0 5 8"><path d="M0.300 0v8l4.200-4z" fill="#666"/></svg>
<svg style="left:1148px;top:412.1px;" width="14.5" height="14.5" viewBox="0 0 14 14"><circle cx="6.900" cy="6.800" r="5.400" fill="none" stroke="#6fa024" stroke-width="2.900"/><path d="M2.200 9.500A5.400 5.400 0 0 0 9.500 11.550" fill="none" stroke="#4f9628" stroke-width="2.900"/><path d="M9.300 9L13.900 13.300" stroke="#fff" stroke-width="4.200"/><path d="M8.600 8.400L13 12.600" stroke="#4d962a" stroke-width="2.700"/><path d="M6.800 6.500L9 8.700" stroke="#e8dc5a" stroke-width="1.900"/><circle cx="6.900" cy="6.600" r="1.500" fill="#ee7410"/></svg>
<span class="t" style="left:1169.6px;top:430.8px;line-height:16px;font-size:12px;color:#000;letter-spacing:-0.242px;">Vector general</span>
<svg style="left:1132.5px;top:433.6px;" width="5" height="8" viewBox="0 0 5 8"><path d="M0.300 0v8l4.200-4z" fill="#666"/></svg>
<svg style="left:1148px;top:430.1px;" width="14.5" height="14.5" viewBox="0 0 14 14"><circle cx="6.900" cy="6.800" r="5.400" fill="none" stroke="#6fa024" stroke-width="2.900"/><path d="M2.200 9.500A5.400 5.400 0 0 0 9.500 11.550" fill="none" stroke="#4f9628" stroke-width="2.900"/><path d="M9.300 9L13.900 13.300" stroke="#fff" stroke-width="4.200"/><path d="M8.600 8.400L13 12.600" stroke="#4d962a" stroke-width="2.700"/><path d="M6.800 6.500L9 8.700" stroke="#e8dc5a" stroke-width="1.900"/><circle cx="6.900" cy="6.600" r="1.500" fill="#ee7410"/></svg>
<span class="t" style="left:1169.6px;top:448.8px;line-height:16px;font-size:12px;color:#000;letter-spacing:-0.078px;">Vector geometry</span>
<svg style="left:1132.5px;top:451.6px;" width="5" height="8" viewBox="0 0 5 8"><path d="M0.300 0v8l4.200-4z" fill="#666"/></svg>
<svg style="left:1148px;top:448.1px;" width="14.5" height="14.5" viewBox="0 0 14 14"><circle cx="6.900" cy="6.800" r="5.400" fill="none" stroke="#6fa024" stroke-width="2.900"/><path d="M2.200 9.500A5.400 5.400 0 0 0 9.500 11.550" fill="none" stroke="#4f9628" stroke-width="2.900"/><path d="M9.300 9L13.900 13.300" stroke="#fff" stroke-width="4.200"/><path d="M8.600 8.400L13 12.600" stroke="#4d962a" stroke-width="2.700"/><path d="M6.800 6.500L9 8.700" stroke="#e8dc5a" stroke-width="1.900"/><circle cx="6.900" cy="6.600" r="1.500" fill="#ee7410"/></svg>
<span class="t" style="left:1169.6px;top:466.8px;line-height:16px;font-size:12px;color:#000;letter-spacing:-0.210px;">Vector overlay</span>
<svg style="left:1132.5px;top:469.6px;" width="5" height="8" viewBox="0 0 5 8"><path d="M0.300 0v8l4.200-4z" fill="#666"/></svg>
<svg style="left:1148px;top:466.1px;" width="14.5" height="14.5" viewBox="0 0 14 14"><circle cx="6.900" cy="6.800" r="5.400" fill="none" stroke="#6fa024" stroke-width="2.900"/><path d="M2.200 9.500A5.400 5.400 0 0 0 9.500 11.550" fill="none" stroke="#4f9628" stroke-width="2.900"/><path d="M9.300 9L13.900 13.300" stroke="#fff" stroke-width="4.200"/><path d="M8.600 8.400L13 12.600" stroke="#4d962a" stroke-width="2.700"/><path d="M6.800 6.500L9 8.700" stroke="#e8dc5a" stroke-width="1.900"/><circle cx="6.900" cy="6.600" r="1.500" fill="#ee7410"/></svg>
<span class="t" style="left:1169.6px;top:484.8px;line-height:16px;font-size:12px;color:#000;letter-spacing:-0.170px;">Vector selection</span>
<svg style="left:1132.5px;top:487.6px;" width="5" height="8" viewBox="0 0 5 8"><path d="M0.300 0v8l4.200-4z" fill="#666"/></svg>
<svg style="left:1148px;top:484.1px;" width="14.5" height="14.5" viewBox="0 0 14 14"><circle cx="6.900" cy="6.800" r="5.400" fill="none" stroke="#6fa024" stroke-width="2.900"/><path d="M2.200 9.500A5.400 5.400 0 0 0 9.500 11.550" fill="none" stroke="#4f9628" stroke-width="2.900"/><path d="M9.300 9L13.900 13.300" stroke="#fff" stroke-width="4.200"/><path d="M8.600 8.400L13 12.600" stroke="#4d962a" stroke-width="2.700"/><path d="M6.800 6.500L9 8.700" stroke="#e8dc5a" stroke-width="1.900"/><circle cx="6.900" cy="6.600" r="1.500" fill="#ee7410"/></svg>
<span class="t" style="left:1169.6px;top:502.8px;line-height:16px;font-size:12px;color:#000;letter-spacing:-0.165px;">Vector table</span>
<svg style="left:1132.5px;top:505.6px;" width="5" height="8" viewBox="0 0 5 8"><path d="M0.300 0v8l4.200-4z" fill="#666"/></svg>
<svg style="left:1148px;top:502.1px;" width="14.5" height="14.5" viewBox="0 0 14 14"><circle cx="6.900" cy="6.800" r="5.400" fill="none" stroke="#6fa024" stroke-width="2.900"/><path d="M2.200 9.500A5.400 5.400 0 0 0 9.500 11.550" fill="none" stroke="#4f9628" stroke-width="2.900"/><path d="M9.300 9L13.900 13.300" stroke="#fff" stroke-width="4.200"/><path d="M8.600 8.400L13 12.600" stroke="#4d962a" stroke-width="2.700"/><path d="M6.800 6.500L9 8.700" stroke="#e8dc5a" stroke-width="1.900"/><circle cx="6.900" cy="6.600" r="1.500" fill="#ee7410"/></svg>
<span class="t" style="left:1169.6px;top:520.8px;line-height:16px;font-size:12px;color:#000;letter-spacing:-0.209px;">Vector tiles</span>
<svg style="left:1132.5px;top:523.6px;" width="5" height="8" viewBox="0 0 5 8"><path d="M0.300 0v8l4.200-4z" fill="#666"/></svg>
<svg style="left:1148px;top:520.1px;" width="14.5" height="14.5" viewBox="0 0 14 14"><circle cx="6.900" cy="6.800" r="5.400" fill="none" stroke="#6fa024" stroke-width="2.900"/><path d="M2.200 9.500A5.400 5.400 0 0 0 9.500 11.550" fill="none" stroke="#4f9628" stroke-width="2.900"/><path d="M9.300 9L13.900 13.300" stroke="#fff" stroke-width="4.200"/><path d="M8.600 8.400L13 12.600" stroke="#4d962a" stroke-width="2.700"/><path d="M6.800 6.500L9 8.700" stroke="#e8dc5a" stroke-width="1.900"/><circle cx="6.900" cy="6.600" r="1.500" fill="#ee7410"/></svg>
<span class="t" style="left:1169.6px;top:538.8px;line-height:16px;font-size:12px;color:#000;letter-spacing:-0.284px;">EnMAP-Box</span>
<svg style="left:1132.5px;top:541.6px;" width="5" height="8" viewBox="0 0 5 8"><path d="M0.300 0v8l4.200-4z" fill="#666"/></svg>
<svg style="left:1148px;top:536.6px;" width="14" height="15.866666666666667" viewBox="0 0 15 17"><defs><linearGradient id="eg1148_536" x1="0" y1="0" x2="0.250" y2="1"><stop offset="0" stop-color="#f03a2e"/><stop offset="0.220" stop-color="#f9a21e"/><stop offset="0.360" stop-color="#b5d64a"/><stop offset="0.480" stop-color="#4fb8e6"/><stop offset="0.620" stop-color="#8f8fdc"/><stop offset="1" stop-color="#c9a4dc"/></linearGradient><linearGradient id="ew1148_536" x1="0" y1="0" x2="1" y2="0"><stop offset="0" stop-color="#fff" stop-opacity="0.900"/><stop offset="0.500" stop-color="#fff" stop-opacity="0.150"/><stop offset="1" stop-color="#fff" stop-opacity="0"/></linearGradient></defs><path d="M6.300 1L1 9.100Q6.300 8.300 13.700 16.700z" fill="url(#eg1148_536)" opacity="0.900"/><path d="M6.300 1L1 9.100Q6.300 8.300 13.700 16.700z" fill="url(#ew1148_536)"/></svg>
<span class="t" style="left:1169.6px;top:556.8px;line-height:16px;font-size:12px;color:#000;letter-spacing:-0.972px;">GDAL</span>
<svg style="left:1132.5px;top:559.6px;" width="5" height="8" viewBox="0 0 5 8"><path d="M0.300 0v8l4.200-4z" fill="#666"/></svg>
<svg style="left:1147px;top:555.6px;" width="16" height="16" viewBox="0 0 16 16"><circle cx="9.500" cy="8" r="5.500" fill="#5fa8e0"/><path d="M6 6c2-2 5-1 6 1s-1 4-3 3z" fill="#5cb85c"/><path d="M3 4l6-3M5 1.500l2.500 4" stroke="#222" stroke-width="1.200" fill="none"/><text x="0" y="15.600" font-family="Liberation Sans, sans-serif" font-size="7.500" font-weight="bold" fill="#000" textLength="16" lengthAdjust="spacingAndGlyphs">GDAL</text></svg>
<span class="t" style="left:1169.6px;top:574.8px;line-height:16px;font-size:12px;color:#000;letter-spacing:-1.500px;">GRASS</span>
<svg style="left:1132.5px;top:577.6px;" width="5" height="8" viewBox="0 0 5 8"><path d="M0.300 0v8l4.200-4z" fill="#666"/></svg>
<svg style="left:1148px;top:573.6px;" width="15" height="15" viewBox="0 0 15 15"><path d="M7.500 1.500L13.500 7.500L7.500 12.500L1.500 7.500z" fill="#fff" stroke="#8a8a8a" stroke-width="0.800"/><path d="M7.500 12V3M7.500 11C6 9 4.500 7.500 4 5.500M7.500 11C9 9 10.500 7.500 11 5.500M7.500 11C6.500 9 6 7 6 4.500M7.500 11C8.500 9 9 7 9 4.500" stroke="#3a9a34" stroke-width="0.900" fill="none"/><path d="M2 13.500h11M4 14.800h7" stroke="#666" stroke-width="0.900"/></svg>
<span class="t" style="left:1169.6px;top:592.8px;line-height:16px;font-size:12px;color:#000;letter-spacing:-1.140px;">SAGA</span>
<svg style="left:1132.5px;top:595.6px;" width="5" height="8" viewBox="0 0 5 8"><path d="M0.300 0v8l4.200-4z" fill="#666"/></svg>
<svg style="left:1147px;top:592.1px;" width="15.5" height="15.5" viewBox="0 0 15 15"><path d="M12.300 3.300A6.200 6.200 0 1 0 13.700 8.200" fill="none" stroke="#1d5c9e" stroke-width="1.900"/><path d="M9.800 0.800L14.500 3L10.500 5.800z" fill="#1d5c9e"/><path d="M11 4.200L3.300 7.300L12.800 8.500L5.500 13" fill="none" stroke="#1d5c9e" stroke-width="1.500" stroke-linejoin="round"/></svg>
<svg style="left:1130px;top:111px;" width="20" height="18" viewBox="0 0 20 18"><circle cx="5.9" cy="6" r="3.30" fill="#d4161e"/><path d="M5.9 6L10.90 6.00" stroke="#d4161e" stroke-width="2.10"/><path d="M5.9 6L9.44 9.54" stroke="#d4161e" stroke-width="2.10"/><path d="M5.9 6L5.90 11.00" stroke="#d4161e" stroke-width="2.10"/><path d="M5.9 6L2.36 9.54" stroke="#d4161e" stroke-width="2.10"/><path d="M5.9 6L0.90 6.00" stroke="#d4161e" stroke-width="2.10"/><path d="M5.9 6L2.36 2.46" stroke="#d4161e" stroke-width="2.10"/><path d="M5.9 6L5.90 1.00" stroke="#d4161e" stroke-width="2.10"/><path d="M5.9 6L9.44 2.46" stroke="#d4161e" stroke-width="2.10"/><circle cx="5.9" cy="6" r="1.00" fill="#f0f0f0" opacity="0.700"/><circle cx="13.5" cy="9.3" r="2.38" fill="#6a6a6a"/><path d="M13.5 9.3L17.10 9.30" stroke="#6a6a6a" stroke-width="1.51"/><path d="M13.5 9.3L16.05 11.85" stroke="#6a6a6a" stroke-width="1.51"/><path d="M13.5 9.3L13.50 12.90" stroke="#6a6a6a" stroke-width="1.51"/><path d="M13.5 9.3L10.95 11.85" stroke="#6a6a6a" stroke-width="1.51"/><path d="M13.5 9.3L9.90 9.30" stroke="#6a6a6a" stroke-width="1.51"/><path d="M13.5 9.3L10.95 6.75" stroke="#6a6a6a" stroke-width="1.51"/><path d="M13.5 9.3L13.50 5.70" stroke="#6a6a6a" stroke-width="1.51"/><path d="M13.5 9.3L16.05 6.75" stroke="#6a6a6a" stroke-width="1.51"/><circle cx="13.5" cy="9.3" r="0.72" fill="#f0f0f0" opacity="0.700"/><circle cx="8.5" cy="13.9" r="1.91" fill="#8faade"/><path d="M8.5 13.9L11.40 13.90" stroke="#8faade" stroke-width="1.22"/><path d="M8.5 13.9L10.55 15.95" stroke="#8faade" stroke-width="1.22"/><path d="M8.5 13.9L8.50 16.80" stroke="#8faade" stroke-width="1.22"/><path d="M8.5 13.9L6.45 15.95" stroke="#8faade" stroke-width="1.22"/><path d="M8.5 13.9L5.60 13.90" stroke="#8faade" stroke-width="1.22"/><path d="M8.5 13.9L6.45 11.85" stroke="#8faade" stroke-width="1.22"/><path d="M8.5 13.9L8.50 11.00" stroke="#8faade" stroke-width="1.22"/><path d="M8.5 13.9L10.55 11.85" stroke="#8faade" stroke-width="1.22"/><circle cx="8.5" cy="13.9" r="0.58" fill="#f0f0f0" opacity="0.700"/><path d="M13.300 14.100h5.600l-2.800 2.900z" fill="#3a3a3a"/></svg>
<svg style="left:1157px;top:112px;" width="18" height="17" viewBox="0 0 18 17"><path d="M6 0.800h2.600a2 2 0 0 1 2 2v3a1.700 1.700 0 0 1-1.700 1.700H5.300a1.700 1.700 0 0 0-1.700 1.700v1.500H2.200a2 2 0 0 1-2-2V6.200a2 2 0 0 1 2-2H7.300V3.500H4V2.800a2 2 0 0 1 2-2z" fill="#366c9c"/><circle cx="5.700" cy="2.400" r="0.650" fill="#dfe8f0"/><path d="M8.200 15h-2.600a2 2 0 0 1-2-2v-3a1.700 1.700 0 0 1 1.700-1.700H8.900a1.700 1.700 0 0 0 1.700-1.700v-1.500h1.400a2 2 0 0 1 2 2v2.500a2 2 0 0 1-2 2H6.900v.700H10.200V13a2 2 0 0 1-2 2z" fill="#fcd03d"/><circle cx="8.500" cy="13.400" r="0.650" fill="#fff6d0"/><path d="M11.100 13.100h5.600l-2.800 2.900z" fill="#3a3a3a"/></svg>
<svg style="left:3px;top:2px;" width="15" height="17.0" viewBox="0 0 15 17"><defs><linearGradient id="eg3_2" x1="0" y1="0" x2="0.250" y2="1"><stop offset="0" stop-color="#f03a2e"/><stop offset="0.220" stop-color="#f9a21e"/><stop offset="0.360" stop-color="#b5d64a"/><stop offset="0.480" stop-color="#4fb8e6"/><stop offset="0.620" stop-color="#8f8fdc"/><stop offset="1" stop-color="#c9a4dc"/></linearGradient><linearGradient id="ew3_2" x1="0" y1="0" x2="1" y2="0"><stop offset="0" stop-color="#fff" stop-opacity="0.900"/><stop offset="0.500" stop-color="#fff" stop-opacity="0.150"/><stop offset="1" stop-color="#fff" stop-opacity="0"/></linearGradient></defs><path d="M6.300 1L1 9.100Q6.300 8.300 13.700 16.700z" fill="url(#eg3_2)" opacity="0.900"/><path d="M6.300 1L1 9.100Q6.300 8.300 13.700 16.700z" fill="url(#ew3_2)"/></svg>
</body></html>
